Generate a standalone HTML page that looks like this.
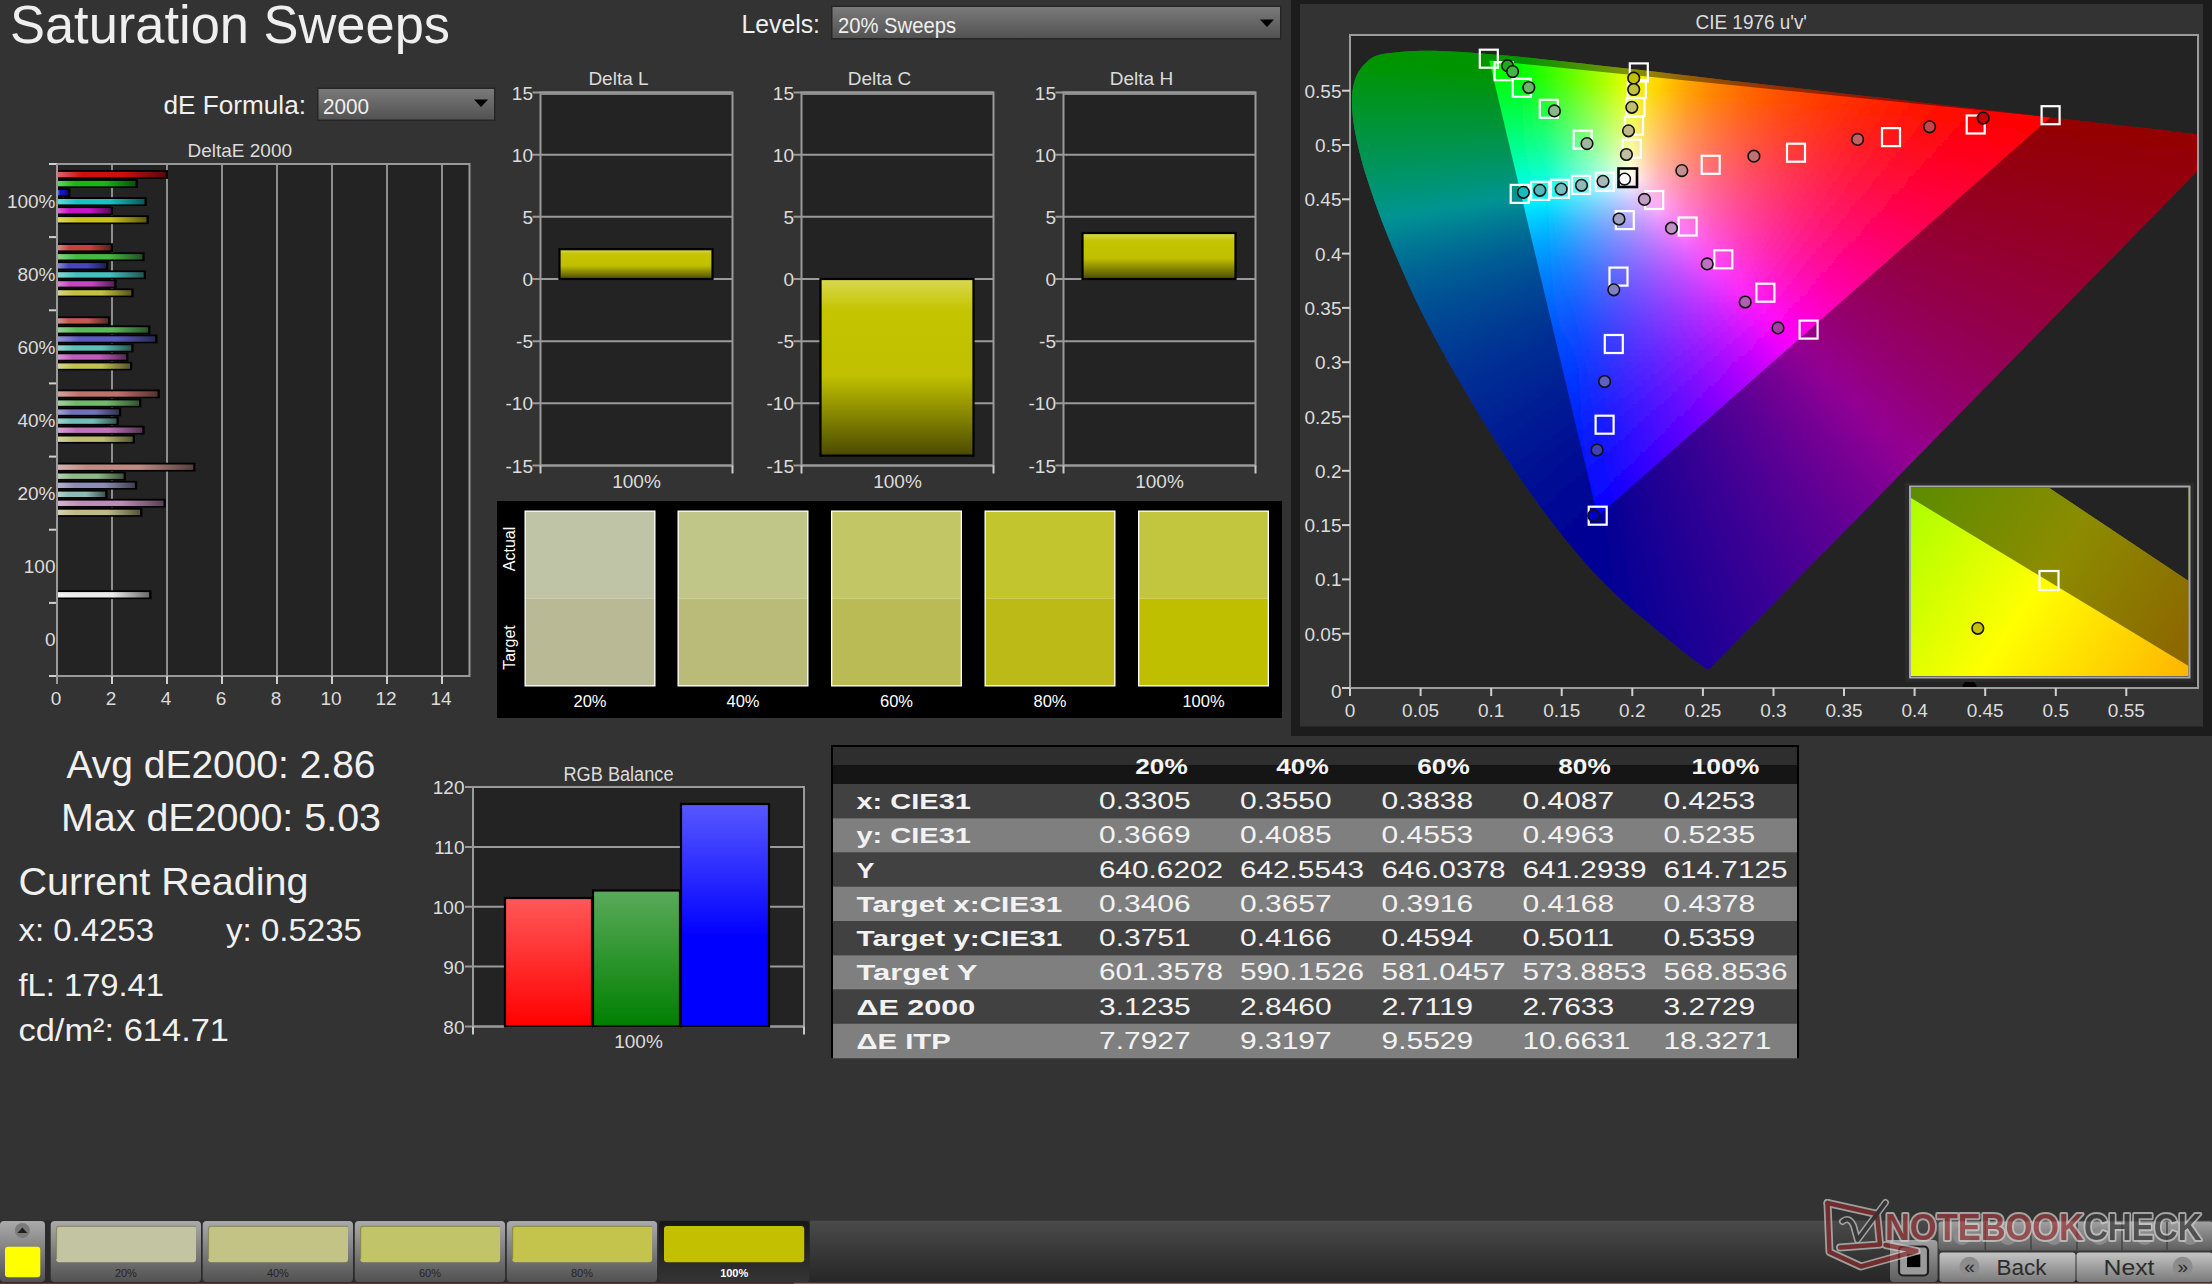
<!DOCTYPE html>
<html><head><meta charset="utf-8"><style>
html,body{margin:0;padding:0;background:#333;width:2212px;height:1284px;overflow:hidden}
svg{display:block}
text{font-family:"Liberation Sans",sans-serif}
</style></head><body>
<svg width="2212" height="1284" viewBox="0 0 2212 1284">
<defs><linearGradient id="ddg" x1="0" y1="0" x2="0" y2="1"><stop offset="0" stop-color="#7a7a7a"/><stop offset="1" stop-color="#525252"/></linearGradient>
<linearGradient id="bg1" x1="0" y1="0" x2="1" y2="0"><stop offset="0" stop-color="#de6363"/><stop offset=".22" stop-color="#cd0f0f"/><stop offset=".6" stop-color="#cd0f0f"/><stop offset="1" stop-color="#5c0707"/></linearGradient>
<linearGradient id="bg2" x1="0" y1="0" x2="1" y2="0"><stop offset="0" stop-color="#66d266"/><stop offset=".22" stop-color="#14b914"/><stop offset=".6" stop-color="#14b914"/><stop offset="1" stop-color="#095309"/></linearGradient>
<linearGradient id="bg3" x1="0" y1="0" x2="1" y2="0"><stop offset="0" stop-color="#6666db"/><stop offset=".22" stop-color="#1414c8"/><stop offset=".6" stop-color="#1414c8"/><stop offset="1" stop-color="#09095a"/></linearGradient>
<linearGradient id="bg4" x1="0" y1="0" x2="1" y2="0"><stop offset="0" stop-color="#66d8d8"/><stop offset=".22" stop-color="#14c3c3"/><stop offset=".6" stop-color="#14c3c3"/><stop offset="1" stop-color="#095858"/></linearGradient>
<linearGradient id="bg5" x1="0" y1="0" x2="1" y2="0"><stop offset="0" stop-color="#db66db"/><stop offset=".22" stop-color="#c814c8"/><stop offset=".6" stop-color="#c814c8"/><stop offset="1" stop-color="#5a095a"/></linearGradient>
<linearGradient id="bg6" x1="0" y1="0" x2="1" y2="0"><stop offset="0" stop-color="#dbd866"/><stop offset=".22" stop-color="#c8c314"/><stop offset=".6" stop-color="#c8c314"/><stop offset="1" stop-color="#5a5809"/></linearGradient>
<linearGradient id="bg7" x1="0" y1="0" x2="1" y2="0"><stop offset="0" stop-color="#db8482"/><stop offset=".22" stop-color="#c7423f"/><stop offset=".6" stop-color="#c7423f"/><stop offset="1" stop-color="#5a1e1c"/></linearGradient>
<linearGradient id="bg8" x1="0" y1="0" x2="1" y2="0"><stop offset="0" stop-color="#87d284"/><stop offset=".22" stop-color="#46b942"/><stop offset=".6" stop-color="#46b942"/><stop offset="1" stop-color="#1f531e"/></linearGradient>
<linearGradient id="bg9" x1="0" y1="0" x2="1" y2="0"><stop offset="0" stop-color="#8787d6"/><stop offset=".22" stop-color="#4646c0"/><stop offset=".6" stop-color="#4646c0"/><stop offset="1" stop-color="#1f1f56"/></linearGradient>
<linearGradient id="bg10" x1="0" y1="0" x2="1" y2="0"><stop offset="0" stop-color="#87d6d4"/><stop offset=".22" stop-color="#46c0bd"/><stop offset=".6" stop-color="#46c0bd"/><stop offset="1" stop-color="#1f5655"/></linearGradient>
<linearGradient id="bg11" x1="0" y1="0" x2="1" y2="0"><stop offset="0" stop-color="#d987d6"/><stop offset=".22" stop-color="#c446c0"/><stop offset=".6" stop-color="#c446c0"/><stop offset="1" stop-color="#581f56"/></linearGradient>
<linearGradient id="bg12" x1="0" y1="0" x2="1" y2="0"><stop offset="0" stop-color="#d9d684"/><stop offset=".22" stop-color="#c4c042"/><stop offset=".6" stop-color="#c4c042"/><stop offset="1" stop-color="#58561e"/></linearGradient>
<linearGradient id="bg13" x1="0" y1="0" x2="1" y2="0"><stop offset="0" stop-color="#d99290"/><stop offset=".22" stop-color="#c45854"/><stop offset=".6" stop-color="#c45854"/><stop offset="1" stop-color="#582826"/></linearGradient>
<linearGradient id="bg14" x1="0" y1="0" x2="1" y2="0"><stop offset="0" stop-color="#94d292"/><stop offset=".22" stop-color="#5bb957"/><stop offset=".6" stop-color="#5bb957"/><stop offset="1" stop-color="#295327"/></linearGradient>
<linearGradient id="bg15" x1="0" y1="0" x2="1" y2="0"><stop offset="0" stop-color="#9494d4"/><stop offset=".22" stop-color="#5b5bbd"/><stop offset=".6" stop-color="#5b5bbd"/><stop offset="1" stop-color="#292955"/></linearGradient>
<linearGradient id="bg16" x1="0" y1="0" x2="1" y2="0"><stop offset="0" stop-color="#94d5d2"/><stop offset=".22" stop-color="#5bbfba"/><stop offset=".6" stop-color="#5bbfba"/><stop offset="1" stop-color="#295654"/></linearGradient>
<linearGradient id="bg17" x1="0" y1="0" x2="1" y2="0"><stop offset="0" stop-color="#d794d4"/><stop offset=".22" stop-color="#c25bbd"/><stop offset=".6" stop-color="#c25bbd"/><stop offset="1" stop-color="#572955"/></linearGradient>
<linearGradient id="bg18" x1="0" y1="0" x2="1" y2="0"><stop offset="0" stop-color="#d7d592"/><stop offset=".22" stop-color="#c2bf57"/><stop offset=".6" stop-color="#c2bf57"/><stop offset="1" stop-color="#575627"/></linearGradient>
<linearGradient id="bg19" x1="0" y1="0" x2="1" y2="0"><stop offset="0" stop-color="#d7a29e"/><stop offset=".22" stop-color="#c2706a"/><stop offset=".6" stop-color="#c2706a"/><stop offset="1" stop-color="#573230"/></linearGradient>
<linearGradient id="bg20" x1="0" y1="0" x2="1" y2="0"><stop offset="0" stop-color="#a3d29f"/><stop offset=".22" stop-color="#72b96c"/><stop offset=".6" stop-color="#72b96c"/><stop offset="1" stop-color="#335331"/></linearGradient>
<linearGradient id="bg21" x1="0" y1="0" x2="1" y2="0"><stop offset="0" stop-color="#a3a3d2"/><stop offset=".22" stop-color="#7272ba"/><stop offset=".6" stop-color="#7272ba"/><stop offset="1" stop-color="#333354"/></linearGradient>
<linearGradient id="bg22" x1="0" y1="0" x2="1" y2="0"><stop offset="0" stop-color="#a3d4d1"/><stop offset=".22" stop-color="#72bdb8"/><stop offset=".6" stop-color="#72bdb8"/><stop offset="1" stop-color="#335553"/></linearGradient>
<linearGradient id="bg23" x1="0" y1="0" x2="1" y2="0"><stop offset="0" stop-color="#d5a3d2"/><stop offset=".22" stop-color="#bf72ba"/><stop offset=".6" stop-color="#bf72ba"/><stop offset="1" stop-color="#563354"/></linearGradient>
<linearGradient id="bg24" x1="0" y1="0" x2="1" y2="0"><stop offset="0" stop-color="#d5d49f"/><stop offset=".22" stop-color="#bfbd6c"/><stop offset=".6" stop-color="#bfbd6c"/><stop offset="1" stop-color="#565531"/></linearGradient>
<linearGradient id="bg25" x1="0" y1="0" x2="1" y2="0"><stop offset="0" stop-color="#d5b4af"/><stop offset=".22" stop-color="#be8b84"/><stop offset=".6" stop-color="#be8b84"/><stop offset="1" stop-color="#553f3b"/></linearGradient>
<linearGradient id="bg26" x1="0" y1="0" x2="1" y2="0"><stop offset="0" stop-color="#b4d2b0"/><stop offset=".22" stop-color="#8cb985"/><stop offset=".6" stop-color="#8cb985"/><stop offset="1" stop-color="#3f533c"/></linearGradient>
<linearGradient id="bg27" x1="0" y1="0" x2="1" y2="0"><stop offset="0" stop-color="#b4b4d0"/><stop offset=".22" stop-color="#8c8cb6"/><stop offset=".6" stop-color="#8c8cb6"/><stop offset="1" stop-color="#3f3f52"/></linearGradient>
<linearGradient id="bg28" x1="0" y1="0" x2="1" y2="0"><stop offset="0" stop-color="#b4d3ce"/><stop offset=".22" stop-color="#8cbcb4"/><stop offset=".6" stop-color="#8cbcb4"/><stop offset="1" stop-color="#3f5551"/></linearGradient>
<linearGradient id="bg29" x1="0" y1="0" x2="1" y2="0"><stop offset="0" stop-color="#d4b4d0"/><stop offset=".22" stop-color="#bd8cb6"/><stop offset=".6" stop-color="#bd8cb6"/><stop offset="1" stop-color="#553f52"/></linearGradient>
<linearGradient id="bg30" x1="0" y1="0" x2="1" y2="0"><stop offset="0" stop-color="#d4d3b0"/><stop offset=".22" stop-color="#bdbc85"/><stop offset=".6" stop-color="#bdbc85"/><stop offset="1" stop-color="#55553c"/></linearGradient>
<linearGradient id="bg31" x1="0" y1="0" x2="1" y2="0"><stop offset="0" stop-color="#f2f2f2"/><stop offset=".22" stop-color="#ebebeb"/><stop offset=".6" stop-color="#ebebeb"/><stop offset="1" stop-color="#6a6a6a"/></linearGradient>
<linearGradient id="ybar" x1="0" y1="0" x2="0" y2="1"><stop offset="0" stop-color="#d8d850"/><stop offset=".18" stop-color="#c4c400"/><stop offset=".55" stop-color="#c0c000"/><stop offset="1" stop-color="#4a4a00"/></linearGradient>
<clipPath id="loc"><path d="M1709.2,669.3 C1708.7,669.2 1707.1,669.0 1706.0,668.5 C1704.8,667.9 1703.7,667.0 1702.3,666.0 C1700.9,664.9 1699.7,663.9 1697.7,662.4 C1695.7,660.9 1693.0,659.1 1690.3,657.0 C1687.6,655.0 1684.7,652.7 1681.3,650.0 C1677.9,647.2 1674.2,644.1 1669.8,640.5 C1665.5,636.9 1660.5,632.9 1655.0,628.4 C1649.5,623.8 1643.6,619.1 1637.0,613.3 C1630.3,607.5 1623.0,601.2 1614.9,593.4 C1606.9,585.6 1598.8,578.0 1588.5,566.5 C1578.3,554.9 1566.2,540.8 1553.4,524.0 C1540.6,507.3 1526.3,487.7 1511.9,466.0 C1497.5,444.3 1481.6,418.9 1466.9,393.9 C1452.1,368.9 1436.4,341.3 1423.5,315.8 C1410.7,290.3 1399.3,263.9 1389.8,240.9 C1380.3,217.9 1372.6,196.1 1366.8,177.8 C1361.0,159.5 1357.4,144.2 1354.9,130.9 C1352.5,117.6 1351.7,107.3 1352.0,98.1 C1352.2,88.9 1353.9,81.8 1356.5,75.7 C1359.1,69.6 1363.0,65.0 1367.4,61.4 C1371.7,57.8 1373.7,55.9 1382.6,54.1 C1391.5,52.3 1407.5,51.1 1420.7,50.7 C1433.9,50.4 1447.1,51.2 1461.8,52.0 C1476.5,52.9 1491.7,54.2 1509.1,55.8 C1526.5,57.5 1545.0,59.5 1566.1,61.8 C1587.2,64.1 1610.3,66.7 1636.0,69.6 C1661.7,72.6 1689.9,75.9 1720.2,79.4 C1750.6,82.9 1784.7,86.8 1817.9,90.6 C1851.1,94.4 1887.1,98.6 1919.5,102.3 C1951.9,106.0 1984.8,109.7 2012.3,112.9 C2039.8,116.0 2063.9,118.8 2084.4,121.2 C2104.9,123.6 2120.7,125.4 2135.5,127.1 C2150.2,128.8 2162.6,130.2 2172.9,131.4 C2183.3,132.6 2188.1,133.2 2197.6,134.2 C2207.1,135.3 2224.5,137.3 2229.9,137.9 Z"/></clipPath>
<clipPath id="plotc"><rect x="1351" y="36" width="846" height="651"/></clipPath>
<linearGradient id="r0" gradientUnits="userSpaceOnUse" x1="1350" y1="0" x2="2198" y2="0"><stop offset="0.000" stop-color="#00ff00"/><stop offset="0.033" stop-color="#00ff00"/><stop offset="0.066" stop-color="#00ff00"/><stop offset="0.099" stop-color="#00ff00"/><stop offset="0.132" stop-color="#00ff00"/><stop offset="0.165" stop-color="#00ff00"/><stop offset="0.198" stop-color="#00ff00"/><stop offset="0.231" stop-color="#37ff00"/><stop offset="0.264" stop-color="#6dff00"/><stop offset="0.297" stop-color="#a6ff00"/><stop offset="0.330" stop-color="#e3ff00"/><stop offset="0.363" stop-color="#ffde00"/><stop offset="0.396" stop-color="#ffb100"/><stop offset="0.429" stop-color="#ff9100"/><stop offset="0.462" stop-color="#ff7800"/><stop offset="0.495" stop-color="#ff6400"/><stop offset="0.528" stop-color="#ff5300"/><stop offset="0.561" stop-color="#ff4600"/><stop offset="0.594" stop-color="#ff3a00"/><stop offset="0.627" stop-color="#ff3000"/><stop offset="0.660" stop-color="#ff2700"/><stop offset="0.693" stop-color="#ff1f00"/><stop offset="0.726" stop-color="#ff1700"/><stop offset="0.759" stop-color="#ff1000"/><stop offset="0.792" stop-color="#ff0a00"/><stop offset="0.825" stop-color="#ff0400"/><stop offset="0.858" stop-color="#ff0000"/><stop offset="0.892" stop-color="#ff0000"/><stop offset="0.925" stop-color="#ff0000"/><stop offset="0.958" stop-color="#ff0000"/><stop offset="0.991" stop-color="#ff0000"/></linearGradient>
<linearGradient id="r1" gradientUnits="userSpaceOnUse" x1="1350" y1="0" x2="2198" y2="0"><stop offset="0.000" stop-color="#00ff00"/><stop offset="0.033" stop-color="#00ff00"/><stop offset="0.066" stop-color="#00ff00"/><stop offset="0.099" stop-color="#00ff00"/><stop offset="0.132" stop-color="#00ff00"/><stop offset="0.165" stop-color="#00ff00"/><stop offset="0.198" stop-color="#00ff00"/><stop offset="0.231" stop-color="#35ff00"/><stop offset="0.264" stop-color="#6dff00"/><stop offset="0.297" stop-color="#a6ff00"/><stop offset="0.330" stop-color="#e4ff00"/><stop offset="0.363" stop-color="#ffdc00"/><stop offset="0.396" stop-color="#ffb000"/><stop offset="0.429" stop-color="#ff8f00"/><stop offset="0.462" stop-color="#ff7600"/><stop offset="0.495" stop-color="#ff6200"/><stop offset="0.528" stop-color="#ff5200"/><stop offset="0.561" stop-color="#ff4400"/><stop offset="0.594" stop-color="#ff3900"/><stop offset="0.627" stop-color="#ff2e00"/><stop offset="0.660" stop-color="#ff2500"/><stop offset="0.693" stop-color="#ff1d00"/><stop offset="0.726" stop-color="#ff1600"/><stop offset="0.759" stop-color="#ff0f00"/><stop offset="0.792" stop-color="#ff0900"/><stop offset="0.825" stop-color="#ff0200"/><stop offset="0.858" stop-color="#ff0000"/><stop offset="0.892" stop-color="#ff0000"/><stop offset="0.925" stop-color="#ff0000"/><stop offset="0.958" stop-color="#ff0000"/><stop offset="0.991" stop-color="#ff0000"/></linearGradient>
<linearGradient id="r2" gradientUnits="userSpaceOnUse" x1="1350" y1="0" x2="2198" y2="0"><stop offset="0.000" stop-color="#00ff00"/><stop offset="0.033" stop-color="#00ff00"/><stop offset="0.066" stop-color="#00ff00"/><stop offset="0.099" stop-color="#00ff00"/><stop offset="0.132" stop-color="#00ff00"/><stop offset="0.165" stop-color="#00ff00"/><stop offset="0.198" stop-color="#00ff00"/><stop offset="0.231" stop-color="#34ff00"/><stop offset="0.264" stop-color="#6cff00"/><stop offset="0.297" stop-color="#a6ff00"/><stop offset="0.330" stop-color="#e5ff00"/><stop offset="0.363" stop-color="#ffdb00"/><stop offset="0.396" stop-color="#ffae00"/><stop offset="0.429" stop-color="#ff8e00"/><stop offset="0.462" stop-color="#ff7500"/><stop offset="0.495" stop-color="#ff6100"/><stop offset="0.528" stop-color="#ff5100"/><stop offset="0.561" stop-color="#ff4300"/><stop offset="0.594" stop-color="#ff3700"/><stop offset="0.627" stop-color="#ff2d00"/><stop offset="0.660" stop-color="#ff2400"/><stop offset="0.693" stop-color="#ff1c00"/><stop offset="0.726" stop-color="#ff1500"/><stop offset="0.759" stop-color="#ff0e00"/><stop offset="0.792" stop-color="#ff0800"/><stop offset="0.825" stop-color="#ff0100"/><stop offset="0.858" stop-color="#ff0000"/><stop offset="0.892" stop-color="#ff0000"/><stop offset="0.925" stop-color="#ff0000"/><stop offset="0.958" stop-color="#ff0000"/><stop offset="0.991" stop-color="#ff0000"/></linearGradient>
<linearGradient id="r3" gradientUnits="userSpaceOnUse" x1="1350" y1="0" x2="2198" y2="0"><stop offset="0.000" stop-color="#00ff00"/><stop offset="0.033" stop-color="#00ff00"/><stop offset="0.066" stop-color="#00ff00"/><stop offset="0.099" stop-color="#00ff00"/><stop offset="0.132" stop-color="#00ff00"/><stop offset="0.165" stop-color="#00ff00"/><stop offset="0.198" stop-color="#00ff00"/><stop offset="0.231" stop-color="#33ff00"/><stop offset="0.264" stop-color="#6cff00"/><stop offset="0.297" stop-color="#a7ff00"/><stop offset="0.330" stop-color="#e6ff00"/><stop offset="0.363" stop-color="#ffd900"/><stop offset="0.396" stop-color="#ffad00"/><stop offset="0.429" stop-color="#ff8c00"/><stop offset="0.462" stop-color="#ff7300"/><stop offset="0.495" stop-color="#ff6000"/><stop offset="0.528" stop-color="#ff4f00"/><stop offset="0.561" stop-color="#ff4200"/><stop offset="0.594" stop-color="#ff3600"/><stop offset="0.627" stop-color="#ff2c00"/><stop offset="0.660" stop-color="#ff2300"/><stop offset="0.693" stop-color="#ff1b00"/><stop offset="0.726" stop-color="#ff1400"/><stop offset="0.759" stop-color="#ff0d00"/><stop offset="0.792" stop-color="#ff0600"/><stop offset="0.825" stop-color="#ff0000"/><stop offset="0.858" stop-color="#ff0000"/><stop offset="0.892" stop-color="#ff0000"/><stop offset="0.925" stop-color="#ff0000"/><stop offset="0.958" stop-color="#ff0000"/><stop offset="0.991" stop-color="#ff0000"/></linearGradient>
<linearGradient id="r4" gradientUnits="userSpaceOnUse" x1="1350" y1="0" x2="2198" y2="0"><stop offset="0.000" stop-color="#00ff09"/><stop offset="0.033" stop-color="#00ff04"/><stop offset="0.066" stop-color="#00ff00"/><stop offset="0.099" stop-color="#00ff00"/><stop offset="0.132" stop-color="#00ff00"/><stop offset="0.165" stop-color="#00ff00"/><stop offset="0.198" stop-color="#00ff00"/><stop offset="0.231" stop-color="#31ff00"/><stop offset="0.264" stop-color="#6bff00"/><stop offset="0.297" stop-color="#a7ff00"/><stop offset="0.330" stop-color="#e7ff00"/><stop offset="0.363" stop-color="#ffd800"/><stop offset="0.396" stop-color="#ffab00"/><stop offset="0.429" stop-color="#ff8b00"/><stop offset="0.462" stop-color="#ff7200"/><stop offset="0.495" stop-color="#ff5e00"/><stop offset="0.528" stop-color="#ff4e00"/><stop offset="0.561" stop-color="#ff4000"/><stop offset="0.594" stop-color="#ff3500"/><stop offset="0.627" stop-color="#ff2b00"/><stop offset="0.660" stop-color="#ff2200"/><stop offset="0.693" stop-color="#ff1a00"/><stop offset="0.726" stop-color="#ff1200"/><stop offset="0.759" stop-color="#ff0c00"/><stop offset="0.792" stop-color="#ff0500"/><stop offset="0.825" stop-color="#ff0000"/><stop offset="0.858" stop-color="#ff0000"/><stop offset="0.892" stop-color="#ff0000"/><stop offset="0.925" stop-color="#ff0000"/><stop offset="0.958" stop-color="#ff0000"/><stop offset="0.991" stop-color="#ff0000"/></linearGradient>
<linearGradient id="r5" gradientUnits="userSpaceOnUse" x1="1350" y1="0" x2="2198" y2="0"><stop offset="0.000" stop-color="#00ff12"/><stop offset="0.033" stop-color="#00ff0f"/><stop offset="0.066" stop-color="#00ff0b"/><stop offset="0.099" stop-color="#00ff06"/><stop offset="0.132" stop-color="#00ff00"/><stop offset="0.165" stop-color="#00ff00"/><stop offset="0.198" stop-color="#00ff00"/><stop offset="0.231" stop-color="#30ff00"/><stop offset="0.264" stop-color="#6aff00"/><stop offset="0.297" stop-color="#a7ff00"/><stop offset="0.330" stop-color="#e8ff00"/><stop offset="0.363" stop-color="#ffd600"/><stop offset="0.396" stop-color="#ffaa00"/><stop offset="0.429" stop-color="#ff8900"/><stop offset="0.462" stop-color="#ff7000"/><stop offset="0.495" stop-color="#ff5d00"/><stop offset="0.528" stop-color="#ff4c00"/><stop offset="0.561" stop-color="#ff3f00"/><stop offset="0.594" stop-color="#ff3300"/><stop offset="0.627" stop-color="#ff2900"/><stop offset="0.660" stop-color="#ff2000"/><stop offset="0.693" stop-color="#ff1800"/><stop offset="0.726" stop-color="#ff1100"/><stop offset="0.759" stop-color="#ff0a00"/><stop offset="0.792" stop-color="#ff0400"/><stop offset="0.825" stop-color="#ff0000"/><stop offset="0.858" stop-color="#ff0000"/><stop offset="0.892" stop-color="#ff0000"/><stop offset="0.925" stop-color="#ff0000"/><stop offset="0.958" stop-color="#ff0000"/><stop offset="0.991" stop-color="#ff0000"/></linearGradient>
<linearGradient id="r6" gradientUnits="userSpaceOnUse" x1="1350" y1="0" x2="2198" y2="0"><stop offset="0.000" stop-color="#00ff1c"/><stop offset="0.033" stop-color="#00ff19"/><stop offset="0.066" stop-color="#00ff15"/><stop offset="0.099" stop-color="#00ff12"/><stop offset="0.132" stop-color="#00ff0d"/><stop offset="0.165" stop-color="#00ff08"/><stop offset="0.198" stop-color="#00ff02"/><stop offset="0.231" stop-color="#2eff00"/><stop offset="0.264" stop-color="#6aff00"/><stop offset="0.297" stop-color="#a7ff00"/><stop offset="0.330" stop-color="#e9ff00"/><stop offset="0.363" stop-color="#ffd500"/><stop offset="0.396" stop-color="#ffa800"/><stop offset="0.429" stop-color="#ff8800"/><stop offset="0.462" stop-color="#ff6f00"/><stop offset="0.495" stop-color="#ff5b00"/><stop offset="0.528" stop-color="#ff4b00"/><stop offset="0.561" stop-color="#ff3e00"/><stop offset="0.594" stop-color="#ff3200"/><stop offset="0.627" stop-color="#ff2800"/><stop offset="0.660" stop-color="#ff1f00"/><stop offset="0.693" stop-color="#ff1700"/><stop offset="0.726" stop-color="#ff1000"/><stop offset="0.759" stop-color="#ff0900"/><stop offset="0.792" stop-color="#ff0200"/><stop offset="0.825" stop-color="#ff0000"/><stop offset="0.858" stop-color="#ff0000"/><stop offset="0.892" stop-color="#ff0000"/><stop offset="0.925" stop-color="#ff0000"/><stop offset="0.958" stop-color="#ff0000"/><stop offset="0.991" stop-color="#ff0000"/></linearGradient>
<linearGradient id="r7" gradientUnits="userSpaceOnUse" x1="1350" y1="0" x2="2198" y2="0"><stop offset="0.000" stop-color="#00ff25"/><stop offset="0.033" stop-color="#00ff22"/><stop offset="0.066" stop-color="#00ff1f"/><stop offset="0.099" stop-color="#00ff1c"/><stop offset="0.132" stop-color="#00ff19"/><stop offset="0.165" stop-color="#00ff15"/><stop offset="0.198" stop-color="#00ff10"/><stop offset="0.231" stop-color="#2dff0b"/><stop offset="0.264" stop-color="#69ff05"/><stop offset="0.297" stop-color="#a7ff00"/><stop offset="0.330" stop-color="#eaff00"/><stop offset="0.363" stop-color="#ffd300"/><stop offset="0.396" stop-color="#ffa600"/><stop offset="0.429" stop-color="#ff8600"/><stop offset="0.462" stop-color="#ff6d00"/><stop offset="0.495" stop-color="#ff5a00"/><stop offset="0.528" stop-color="#ff4a00"/><stop offset="0.561" stop-color="#ff3c00"/><stop offset="0.594" stop-color="#ff3100"/><stop offset="0.627" stop-color="#ff2700"/><stop offset="0.660" stop-color="#ff1e00"/><stop offset="0.693" stop-color="#ff1600"/><stop offset="0.726" stop-color="#ff0f00"/><stop offset="0.759" stop-color="#ff0800"/><stop offset="0.792" stop-color="#ff0000"/><stop offset="0.825" stop-color="#ff0000"/><stop offset="0.858" stop-color="#ff0000"/><stop offset="0.892" stop-color="#ff0000"/><stop offset="0.925" stop-color="#ff0000"/><stop offset="0.958" stop-color="#ff0000"/><stop offset="0.991" stop-color="#ff0000"/></linearGradient>
<linearGradient id="r8" gradientUnits="userSpaceOnUse" x1="1350" y1="0" x2="2198" y2="0"><stop offset="0.000" stop-color="#00ff2d"/><stop offset="0.033" stop-color="#00ff2b"/><stop offset="0.066" stop-color="#00ff29"/><stop offset="0.099" stop-color="#00ff26"/><stop offset="0.132" stop-color="#00ff24"/><stop offset="0.165" stop-color="#00ff21"/><stop offset="0.198" stop-color="#00ff1d"/><stop offset="0.231" stop-color="#2bff19"/><stop offset="0.264" stop-color="#68ff14"/><stop offset="0.297" stop-color="#a7ff0f"/><stop offset="0.330" stop-color="#ebff08"/><stop offset="0.363" stop-color="#ffd200"/><stop offset="0.396" stop-color="#ffa500"/><stop offset="0.429" stop-color="#ff8400"/><stop offset="0.462" stop-color="#ff6c00"/><stop offset="0.495" stop-color="#ff5800"/><stop offset="0.528" stop-color="#ff4800"/><stop offset="0.561" stop-color="#ff3b00"/><stop offset="0.594" stop-color="#ff2f00"/><stop offset="0.627" stop-color="#ff2500"/><stop offset="0.660" stop-color="#ff1d00"/><stop offset="0.693" stop-color="#ff1500"/><stop offset="0.726" stop-color="#ff0d00"/><stop offset="0.759" stop-color="#ff0600"/><stop offset="0.792" stop-color="#ff0000"/><stop offset="0.825" stop-color="#ff0000"/><stop offset="0.858" stop-color="#ff0000"/><stop offset="0.892" stop-color="#ff0000"/><stop offset="0.925" stop-color="#ff0000"/><stop offset="0.958" stop-color="#ff0000"/><stop offset="0.991" stop-color="#ff0000"/></linearGradient>
<linearGradient id="r9" gradientUnits="userSpaceOnUse" x1="1350" y1="0" x2="2198" y2="0"><stop offset="0.000" stop-color="#00ff36"/><stop offset="0.033" stop-color="#00ff34"/><stop offset="0.066" stop-color="#00ff33"/><stop offset="0.099" stop-color="#00ff31"/><stop offset="0.132" stop-color="#00ff2e"/><stop offset="0.165" stop-color="#00ff2c"/><stop offset="0.198" stop-color="#00ff29"/><stop offset="0.231" stop-color="#2aff26"/><stop offset="0.264" stop-color="#67ff22"/><stop offset="0.297" stop-color="#a7ff1e"/><stop offset="0.330" stop-color="#ecff19"/><stop offset="0.363" stop-color="#ffd010"/><stop offset="0.396" stop-color="#ffa308"/><stop offset="0.429" stop-color="#ff8301"/><stop offset="0.462" stop-color="#ff6a00"/><stop offset="0.495" stop-color="#ff5700"/><stop offset="0.528" stop-color="#ff4700"/><stop offset="0.561" stop-color="#ff3900"/><stop offset="0.594" stop-color="#ff2e00"/><stop offset="0.627" stop-color="#ff2400"/><stop offset="0.660" stop-color="#ff1b00"/><stop offset="0.693" stop-color="#ff1300"/><stop offset="0.726" stop-color="#ff0c00"/><stop offset="0.759" stop-color="#ff0500"/><stop offset="0.792" stop-color="#ff0000"/><stop offset="0.825" stop-color="#ff0000"/><stop offset="0.858" stop-color="#ff0000"/><stop offset="0.892" stop-color="#ff0000"/><stop offset="0.925" stop-color="#ff0000"/><stop offset="0.958" stop-color="#ff0000"/><stop offset="0.991" stop-color="#ff0000"/></linearGradient>
<linearGradient id="r10" gradientUnits="userSpaceOnUse" x1="1350" y1="0" x2="2198" y2="0"><stop offset="0.000" stop-color="#00ff3f"/><stop offset="0.033" stop-color="#00ff3d"/><stop offset="0.066" stop-color="#00ff3c"/><stop offset="0.099" stop-color="#00ff3a"/><stop offset="0.132" stop-color="#00ff39"/><stop offset="0.165" stop-color="#00ff37"/><stop offset="0.198" stop-color="#00ff35"/><stop offset="0.231" stop-color="#28ff32"/><stop offset="0.264" stop-color="#67ff30"/><stop offset="0.297" stop-color="#a7ff2d"/><stop offset="0.330" stop-color="#edff29"/><stop offset="0.363" stop-color="#ffce1e"/><stop offset="0.396" stop-color="#ffa114"/><stop offset="0.429" stop-color="#ff810d"/><stop offset="0.462" stop-color="#ff6907"/><stop offset="0.495" stop-color="#ff5502"/><stop offset="0.528" stop-color="#ff4500"/><stop offset="0.561" stop-color="#ff3800"/><stop offset="0.594" stop-color="#ff2d00"/><stop offset="0.627" stop-color="#ff2300"/><stop offset="0.660" stop-color="#ff1a00"/><stop offset="0.693" stop-color="#ff1200"/><stop offset="0.726" stop-color="#ff0b00"/><stop offset="0.759" stop-color="#ff0300"/><stop offset="0.792" stop-color="#ff0000"/><stop offset="0.825" stop-color="#ff0000"/><stop offset="0.858" stop-color="#ff0000"/><stop offset="0.892" stop-color="#ff0000"/><stop offset="0.925" stop-color="#ff0000"/><stop offset="0.958" stop-color="#ff0000"/><stop offset="0.991" stop-color="#ff0000"/></linearGradient>
<linearGradient id="r11" gradientUnits="userSpaceOnUse" x1="1350" y1="0" x2="2198" y2="0"><stop offset="0.000" stop-color="#00ff47"/><stop offset="0.033" stop-color="#00ff46"/><stop offset="0.066" stop-color="#00ff45"/><stop offset="0.099" stop-color="#00ff44"/><stop offset="0.132" stop-color="#00ff43"/><stop offset="0.165" stop-color="#00ff42"/><stop offset="0.198" stop-color="#00ff40"/><stop offset="0.231" stop-color="#26ff3f"/><stop offset="0.264" stop-color="#66ff3d"/><stop offset="0.297" stop-color="#a8ff3b"/><stop offset="0.330" stop-color="#efff38"/><stop offset="0.363" stop-color="#ffcd2b"/><stop offset="0.396" stop-color="#ffa01f"/><stop offset="0.429" stop-color="#ff7f17"/><stop offset="0.462" stop-color="#ff6710"/><stop offset="0.495" stop-color="#ff540b"/><stop offset="0.528" stop-color="#ff4407"/><stop offset="0.561" stop-color="#ff3603"/><stop offset="0.594" stop-color="#ff2b00"/><stop offset="0.627" stop-color="#ff2100"/><stop offset="0.660" stop-color="#ff1900"/><stop offset="0.693" stop-color="#ff1100"/><stop offset="0.726" stop-color="#ff0900"/><stop offset="0.759" stop-color="#ff0200"/><stop offset="0.792" stop-color="#ff0000"/><stop offset="0.825" stop-color="#ff0000"/><stop offset="0.858" stop-color="#ff0000"/><stop offset="0.892" stop-color="#ff0000"/><stop offset="0.925" stop-color="#ff0000"/><stop offset="0.958" stop-color="#ff0000"/><stop offset="0.991" stop-color="#ff0000"/></linearGradient>
<linearGradient id="r12" gradientUnits="userSpaceOnUse" x1="1350" y1="0" x2="2198" y2="0"><stop offset="0.000" stop-color="#00ff50"/><stop offset="0.033" stop-color="#00ff4f"/><stop offset="0.066" stop-color="#00ff4f"/><stop offset="0.099" stop-color="#00ff4e"/><stop offset="0.132" stop-color="#00ff4e"/><stop offset="0.165" stop-color="#00ff4d"/><stop offset="0.198" stop-color="#00ff4c"/><stop offset="0.231" stop-color="#24ff4b"/><stop offset="0.264" stop-color="#65ff4a"/><stop offset="0.297" stop-color="#a8ff49"/><stop offset="0.330" stop-color="#f0ff48"/><stop offset="0.363" stop-color="#ffcb38"/><stop offset="0.396" stop-color="#ff9e2a"/><stop offset="0.429" stop-color="#ff7e21"/><stop offset="0.462" stop-color="#ff6519"/><stop offset="0.495" stop-color="#ff5213"/><stop offset="0.528" stop-color="#ff420e"/><stop offset="0.561" stop-color="#ff350a"/><stop offset="0.594" stop-color="#ff2a07"/><stop offset="0.627" stop-color="#ff2003"/><stop offset="0.660" stop-color="#ff1700"/><stop offset="0.693" stop-color="#ff0f00"/><stop offset="0.726" stop-color="#ff0800"/><stop offset="0.759" stop-color="#ff0000"/><stop offset="0.792" stop-color="#ff0000"/><stop offset="0.825" stop-color="#ff0000"/><stop offset="0.858" stop-color="#ff0000"/><stop offset="0.892" stop-color="#ff0000"/><stop offset="0.925" stop-color="#ff0000"/><stop offset="0.958" stop-color="#ff0000"/><stop offset="0.991" stop-color="#ff0000"/></linearGradient>
<linearGradient id="r13" gradientUnits="userSpaceOnUse" x1="1350" y1="0" x2="2198" y2="0"><stop offset="0.000" stop-color="#00ff58"/><stop offset="0.033" stop-color="#00ff58"/><stop offset="0.066" stop-color="#00ff58"/><stop offset="0.099" stop-color="#00ff58"/><stop offset="0.132" stop-color="#00ff58"/><stop offset="0.165" stop-color="#00ff58"/><stop offset="0.198" stop-color="#00ff58"/><stop offset="0.231" stop-color="#23ff58"/><stop offset="0.264" stop-color="#64ff57"/><stop offset="0.297" stop-color="#a8ff57"/><stop offset="0.330" stop-color="#f1ff57"/><stop offset="0.363" stop-color="#ffc944"/><stop offset="0.396" stop-color="#ff9c35"/><stop offset="0.429" stop-color="#ff7c2a"/><stop offset="0.462" stop-color="#ff6421"/><stop offset="0.495" stop-color="#ff501b"/><stop offset="0.528" stop-color="#ff4115"/><stop offset="0.561" stop-color="#ff3411"/><stop offset="0.594" stop-color="#ff280d"/><stop offset="0.627" stop-color="#ff1f0a"/><stop offset="0.660" stop-color="#ff1607"/><stop offset="0.693" stop-color="#ff0e04"/><stop offset="0.726" stop-color="#ff0601"/><stop offset="0.759" stop-color="#ff0000"/><stop offset="0.792" stop-color="#ff0000"/><stop offset="0.825" stop-color="#ff0000"/><stop offset="0.858" stop-color="#ff0000"/><stop offset="0.892" stop-color="#ff0000"/><stop offset="0.925" stop-color="#ff0000"/><stop offset="0.958" stop-color="#ff0000"/><stop offset="0.991" stop-color="#ff0000"/></linearGradient>
<linearGradient id="r14" gradientUnits="userSpaceOnUse" x1="1350" y1="0" x2="2198" y2="0"><stop offset="0.000" stop-color="#00ff61"/><stop offset="0.033" stop-color="#00ff61"/><stop offset="0.066" stop-color="#00ff62"/><stop offset="0.099" stop-color="#00ff62"/><stop offset="0.132" stop-color="#00ff62"/><stop offset="0.165" stop-color="#00ff63"/><stop offset="0.198" stop-color="#00ff63"/><stop offset="0.231" stop-color="#21ff64"/><stop offset="0.264" stop-color="#63ff65"/><stop offset="0.297" stop-color="#a8ff66"/><stop offset="0.330" stop-color="#f3ff66"/><stop offset="0.363" stop-color="#ffc751"/><stop offset="0.396" stop-color="#ff9a3f"/><stop offset="0.429" stop-color="#ff7a33"/><stop offset="0.462" stop-color="#ff622a"/><stop offset="0.495" stop-color="#ff4f22"/><stop offset="0.528" stop-color="#ff3f1c"/><stop offset="0.561" stop-color="#ff3217"/><stop offset="0.594" stop-color="#ff2713"/><stop offset="0.627" stop-color="#ff1d0f"/><stop offset="0.660" stop-color="#ff140c"/><stop offset="0.693" stop-color="#ff0c09"/><stop offset="0.726" stop-color="#ff0506"/><stop offset="0.759" stop-color="#ff0004"/><stop offset="0.792" stop-color="#ff0002"/><stop offset="0.825" stop-color="#ff0000"/><stop offset="0.858" stop-color="#ff0000"/><stop offset="0.892" stop-color="#ff0000"/><stop offset="0.925" stop-color="#ff0000"/><stop offset="0.958" stop-color="#ff0000"/><stop offset="0.991" stop-color="#ff0000"/></linearGradient>
<linearGradient id="r15" gradientUnits="userSpaceOnUse" x1="1350" y1="0" x2="2198" y2="0"><stop offset="0.000" stop-color="#00ff6a"/><stop offset="0.033" stop-color="#00ff6a"/><stop offset="0.066" stop-color="#00ff6b"/><stop offset="0.099" stop-color="#00ff6c"/><stop offset="0.132" stop-color="#00ff6d"/><stop offset="0.165" stop-color="#00ff6e"/><stop offset="0.198" stop-color="#00ff6f"/><stop offset="0.231" stop-color="#1fff71"/><stop offset="0.264" stop-color="#63ff72"/><stop offset="0.297" stop-color="#a8ff74"/><stop offset="0.330" stop-color="#f4ff76"/><stop offset="0.363" stop-color="#ffc65d"/><stop offset="0.396" stop-color="#ff994a"/><stop offset="0.429" stop-color="#ff783c"/><stop offset="0.462" stop-color="#ff6031"/><stop offset="0.495" stop-color="#ff4d29"/><stop offset="0.528" stop-color="#ff3e23"/><stop offset="0.561" stop-color="#ff311d"/><stop offset="0.594" stop-color="#ff2519"/><stop offset="0.627" stop-color="#ff1c15"/><stop offset="0.660" stop-color="#ff1311"/><stop offset="0.693" stop-color="#ff0b0e"/><stop offset="0.726" stop-color="#ff030b"/><stop offset="0.759" stop-color="#ff0009"/><stop offset="0.792" stop-color="#ff0006"/><stop offset="0.825" stop-color="#ff0004"/><stop offset="0.858" stop-color="#ff0002"/><stop offset="0.892" stop-color="#ff0000"/><stop offset="0.925" stop-color="#ff0000"/><stop offset="0.958" stop-color="#ff0000"/><stop offset="0.991" stop-color="#ff0000"/></linearGradient>
<linearGradient id="r16" gradientUnits="userSpaceOnUse" x1="1350" y1="0" x2="2198" y2="0"><stop offset="0.000" stop-color="#00ff72"/><stop offset="0.033" stop-color="#00ff73"/><stop offset="0.066" stop-color="#00ff75"/><stop offset="0.099" stop-color="#00ff76"/><stop offset="0.132" stop-color="#00ff78"/><stop offset="0.165" stop-color="#00ff79"/><stop offset="0.198" stop-color="#00ff7b"/><stop offset="0.231" stop-color="#1dff7d"/><stop offset="0.264" stop-color="#62ff80"/><stop offset="0.297" stop-color="#a8ff83"/><stop offset="0.330" stop-color="#f6ff86"/><stop offset="0.363" stop-color="#ffc46a"/><stop offset="0.396" stop-color="#ff9754"/><stop offset="0.429" stop-color="#ff7745"/><stop offset="0.462" stop-color="#ff5e39"/><stop offset="0.495" stop-color="#ff4b30"/><stop offset="0.528" stop-color="#ff3c29"/><stop offset="0.561" stop-color="#ff2f23"/><stop offset="0.594" stop-color="#ff241e"/><stop offset="0.627" stop-color="#ff1a1a"/><stop offset="0.660" stop-color="#ff1216"/><stop offset="0.693" stop-color="#ff0a13"/><stop offset="0.726" stop-color="#ff0110"/><stop offset="0.759" stop-color="#ff000d"/><stop offset="0.792" stop-color="#ff000b"/><stop offset="0.825" stop-color="#ff0008"/><stop offset="0.858" stop-color="#ff0006"/><stop offset="0.892" stop-color="#ff0004"/><stop offset="0.925" stop-color="#ff0002"/><stop offset="0.958" stop-color="#ff0000"/><stop offset="0.991" stop-color="#ff0000"/></linearGradient>
<linearGradient id="r17" gradientUnits="userSpaceOnUse" x1="1350" y1="0" x2="2198" y2="0"><stop offset="0.000" stop-color="#00ff7b"/><stop offset="0.033" stop-color="#00ff7d"/><stop offset="0.066" stop-color="#00ff7e"/><stop offset="0.099" stop-color="#00ff80"/><stop offset="0.132" stop-color="#00ff82"/><stop offset="0.165" stop-color="#00ff85"/><stop offset="0.198" stop-color="#00ff87"/><stop offset="0.231" stop-color="#1aff8a"/><stop offset="0.264" stop-color="#61ff8e"/><stop offset="0.297" stop-color="#a9ff91"/><stop offset="0.330" stop-color="#f7ff96"/><stop offset="0.363" stop-color="#ffc276"/><stop offset="0.396" stop-color="#ff955e"/><stop offset="0.429" stop-color="#ff754e"/><stop offset="0.462" stop-color="#ff5d41"/><stop offset="0.495" stop-color="#ff4a37"/><stop offset="0.528" stop-color="#ff3a2f"/><stop offset="0.561" stop-color="#ff2d29"/><stop offset="0.594" stop-color="#ff2223"/><stop offset="0.627" stop-color="#ff191f"/><stop offset="0.660" stop-color="#ff101b"/><stop offset="0.693" stop-color="#ff0817"/><stop offset="0.726" stop-color="#ff0014"/><stop offset="0.759" stop-color="#ff0011"/><stop offset="0.792" stop-color="#ff000f"/><stop offset="0.825" stop-color="#ff000c"/><stop offset="0.858" stop-color="#ff000a"/><stop offset="0.892" stop-color="#ff0008"/><stop offset="0.925" stop-color="#ff0006"/><stop offset="0.958" stop-color="#ff0004"/><stop offset="0.991" stop-color="#ff0003"/></linearGradient>
<linearGradient id="r18" gradientUnits="userSpaceOnUse" x1="1350" y1="0" x2="2198" y2="0"><stop offset="0.000" stop-color="#00ff84"/><stop offset="0.033" stop-color="#00ff86"/><stop offset="0.066" stop-color="#00ff88"/><stop offset="0.099" stop-color="#00ff8b"/><stop offset="0.132" stop-color="#00ff8d"/><stop offset="0.165" stop-color="#00ff90"/><stop offset="0.198" stop-color="#00ff93"/><stop offset="0.231" stop-color="#18ff97"/><stop offset="0.264" stop-color="#60ff9c"/><stop offset="0.297" stop-color="#a9ffa1"/><stop offset="0.330" stop-color="#f9ffa6"/><stop offset="0.363" stop-color="#ffc082"/><stop offset="0.396" stop-color="#ff9368"/><stop offset="0.429" stop-color="#ff7356"/><stop offset="0.462" stop-color="#ff5b49"/><stop offset="0.495" stop-color="#ff483e"/><stop offset="0.528" stop-color="#ff3936"/><stop offset="0.561" stop-color="#ff2c2f"/><stop offset="0.594" stop-color="#ff2129"/><stop offset="0.627" stop-color="#ff1724"/><stop offset="0.660" stop-color="#ff0f1f"/><stop offset="0.693" stop-color="#ff061c"/><stop offset="0.726" stop-color="#ff0018"/><stop offset="0.759" stop-color="#ff0015"/><stop offset="0.792" stop-color="#ff0013"/><stop offset="0.825" stop-color="#ff0010"/><stop offset="0.858" stop-color="#ff000e"/><stop offset="0.892" stop-color="#ff000c"/><stop offset="0.925" stop-color="#ff000a"/><stop offset="0.958" stop-color="#ff0008"/><stop offset="0.991" stop-color="#ff0006"/></linearGradient>
<linearGradient id="r19" gradientUnits="userSpaceOnUse" x1="1350" y1="0" x2="2198" y2="0"><stop offset="0.000" stop-color="#00ff8d"/><stop offset="0.033" stop-color="#00ff8f"/><stop offset="0.066" stop-color="#00ff92"/><stop offset="0.099" stop-color="#00ff95"/><stop offset="0.132" stop-color="#00ff98"/><stop offset="0.165" stop-color="#00ff9c"/><stop offset="0.198" stop-color="#00ffa0"/><stop offset="0.231" stop-color="#16ffa5"/><stop offset="0.264" stop-color="#5fffaa"/><stop offset="0.297" stop-color="#a9ffb0"/><stop offset="0.330" stop-color="#faffb7"/><stop offset="0.363" stop-color="#ffbe8f"/><stop offset="0.396" stop-color="#ff9173"/><stop offset="0.429" stop-color="#ff715f"/><stop offset="0.462" stop-color="#ff5950"/><stop offset="0.495" stop-color="#ff4645"/><stop offset="0.528" stop-color="#ff373c"/><stop offset="0.561" stop-color="#ff2a34"/><stop offset="0.594" stop-color="#ff1f2e"/><stop offset="0.627" stop-color="#ff1629"/><stop offset="0.660" stop-color="#ff0d24"/><stop offset="0.693" stop-color="#ff0520"/><stop offset="0.726" stop-color="#ff001c"/><stop offset="0.759" stop-color="#ff0019"/><stop offset="0.792" stop-color="#ff0016"/><stop offset="0.825" stop-color="#ff0014"/><stop offset="0.858" stop-color="#ff0011"/><stop offset="0.892" stop-color="#ff000f"/><stop offset="0.925" stop-color="#ff000d"/><stop offset="0.958" stop-color="#ff000b"/><stop offset="0.991" stop-color="#ff0009"/></linearGradient>
<linearGradient id="r20" gradientUnits="userSpaceOnUse" x1="1350" y1="0" x2="2198" y2="0"><stop offset="0.000" stop-color="#00ff96"/><stop offset="0.033" stop-color="#00ff99"/><stop offset="0.066" stop-color="#00ff9c"/><stop offset="0.099" stop-color="#00ff9f"/><stop offset="0.132" stop-color="#00ffa3"/><stop offset="0.165" stop-color="#00ffa8"/><stop offset="0.198" stop-color="#00ffac"/><stop offset="0.231" stop-color="#13ffb2"/><stop offset="0.264" stop-color="#5effb8"/><stop offset="0.297" stop-color="#a9ffc0"/><stop offset="0.330" stop-color="#fcffc8"/><stop offset="0.363" stop-color="#ffbc9b"/><stop offset="0.396" stop-color="#ff8f7d"/><stop offset="0.429" stop-color="#ff6f68"/><stop offset="0.462" stop-color="#ff5758"/><stop offset="0.495" stop-color="#ff454c"/><stop offset="0.528" stop-color="#ff3542"/><stop offset="0.561" stop-color="#ff293a"/><stop offset="0.594" stop-color="#ff1e33"/><stop offset="0.627" stop-color="#ff142d"/><stop offset="0.660" stop-color="#ff0b29"/><stop offset="0.693" stop-color="#ff0324"/><stop offset="0.726" stop-color="#ff0020"/><stop offset="0.759" stop-color="#ff001d"/><stop offset="0.792" stop-color="#ff001a"/><stop offset="0.825" stop-color="#ff0017"/><stop offset="0.858" stop-color="#ff0015"/><stop offset="0.892" stop-color="#ff0012"/><stop offset="0.925" stop-color="#ff0010"/><stop offset="0.958" stop-color="#ff000e"/><stop offset="0.991" stop-color="#ff000d"/></linearGradient>
<linearGradient id="r21" gradientUnits="userSpaceOnUse" x1="1350" y1="0" x2="2198" y2="0"><stop offset="0.000" stop-color="#00ff9f"/><stop offset="0.033" stop-color="#00ffa2"/><stop offset="0.066" stop-color="#00ffa6"/><stop offset="0.099" stop-color="#00ffaa"/><stop offset="0.132" stop-color="#00ffaf"/><stop offset="0.165" stop-color="#00ffb4"/><stop offset="0.198" stop-color="#00ffb9"/><stop offset="0.231" stop-color="#11ffc0"/><stop offset="0.264" stop-color="#5dffc7"/><stop offset="0.297" stop-color="#a9ffd0"/><stop offset="0.330" stop-color="#feffda"/><stop offset="0.363" stop-color="#ffbaa8"/><stop offset="0.396" stop-color="#ff8d87"/><stop offset="0.429" stop-color="#ff6d70"/><stop offset="0.462" stop-color="#ff565f"/><stop offset="0.495" stop-color="#ff4352"/><stop offset="0.528" stop-color="#ff3448"/><stop offset="0.561" stop-color="#ff273f"/><stop offset="0.594" stop-color="#ff1c38"/><stop offset="0.627" stop-color="#ff1332"/><stop offset="0.660" stop-color="#ff0a2d"/><stop offset="0.693" stop-color="#ff0128"/><stop offset="0.726" stop-color="#ff0024"/><stop offset="0.759" stop-color="#ff0021"/><stop offset="0.792" stop-color="#ff001e"/><stop offset="0.825" stop-color="#ff001b"/><stop offset="0.858" stop-color="#ff0018"/><stop offset="0.892" stop-color="#ff0016"/><stop offset="0.925" stop-color="#ff0013"/><stop offset="0.958" stop-color="#ff0011"/><stop offset="0.991" stop-color="#ff000f"/></linearGradient>
<linearGradient id="r22" gradientUnits="userSpaceOnUse" x1="1350" y1="0" x2="2198" y2="0"><stop offset="0.000" stop-color="#00ffa8"/><stop offset="0.033" stop-color="#00ffac"/><stop offset="0.066" stop-color="#00ffb0"/><stop offset="0.099" stop-color="#00ffb5"/><stop offset="0.132" stop-color="#00ffba"/><stop offset="0.165" stop-color="#00ffc0"/><stop offset="0.198" stop-color="#00ffc6"/><stop offset="0.231" stop-color="#0effce"/><stop offset="0.264" stop-color="#5cffd6"/><stop offset="0.297" stop-color="#aaffe0"/><stop offset="0.330" stop-color="#ffffeb"/><stop offset="0.363" stop-color="#ffb8b4"/><stop offset="0.396" stop-color="#ff8b91"/><stop offset="0.429" stop-color="#ff6b79"/><stop offset="0.462" stop-color="#ff5467"/><stop offset="0.495" stop-color="#ff4159"/><stop offset="0.528" stop-color="#ff324e"/><stop offset="0.561" stop-color="#ff2545"/><stop offset="0.594" stop-color="#ff1b3d"/><stop offset="0.627" stop-color="#ff1137"/><stop offset="0.660" stop-color="#ff0831"/><stop offset="0.693" stop-color="#ff002d"/><stop offset="0.726" stop-color="#ff0028"/><stop offset="0.759" stop-color="#ff0025"/><stop offset="0.792" stop-color="#ff0021"/><stop offset="0.825" stop-color="#ff001e"/><stop offset="0.858" stop-color="#ff001b"/><stop offset="0.892" stop-color="#ff0019"/><stop offset="0.925" stop-color="#ff0017"/><stop offset="0.958" stop-color="#ff0014"/><stop offset="0.991" stop-color="#ff0012"/></linearGradient>
<linearGradient id="r23" gradientUnits="userSpaceOnUse" x1="1350" y1="0" x2="2198" y2="0"><stop offset="0.000" stop-color="#00ffb2"/><stop offset="0.033" stop-color="#00ffb6"/><stop offset="0.066" stop-color="#00ffbb"/><stop offset="0.099" stop-color="#00ffc0"/><stop offset="0.132" stop-color="#00ffc6"/><stop offset="0.165" stop-color="#00ffcc"/><stop offset="0.198" stop-color="#00ffd4"/><stop offset="0.231" stop-color="#0bffdc"/><stop offset="0.264" stop-color="#5affe6"/><stop offset="0.297" stop-color="#aafff1"/><stop offset="0.330" stop-color="#fffdfc"/><stop offset="0.363" stop-color="#ffb6c1"/><stop offset="0.396" stop-color="#ff899b"/><stop offset="0.429" stop-color="#ff6982"/><stop offset="0.462" stop-color="#ff526e"/><stop offset="0.495" stop-color="#ff3f60"/><stop offset="0.528" stop-color="#ff3054"/><stop offset="0.561" stop-color="#ff244a"/><stop offset="0.594" stop-color="#ff1942"/><stop offset="0.627" stop-color="#ff0f3c"/><stop offset="0.660" stop-color="#ff0636"/><stop offset="0.693" stop-color="#ff0031"/><stop offset="0.726" stop-color="#ff002c"/><stop offset="0.759" stop-color="#ff0028"/><stop offset="0.792" stop-color="#ff0025"/><stop offset="0.825" stop-color="#ff0022"/><stop offset="0.858" stop-color="#ff001f"/><stop offset="0.892" stop-color="#ff001c"/><stop offset="0.925" stop-color="#ff001a"/><stop offset="0.958" stop-color="#ff0017"/><stop offset="0.991" stop-color="#ff0015"/></linearGradient>
<linearGradient id="r24" gradientUnits="userSpaceOnUse" x1="1350" y1="0" x2="2198" y2="0"><stop offset="0.000" stop-color="#00ffbb"/><stop offset="0.033" stop-color="#00ffc0"/><stop offset="0.066" stop-color="#00ffc5"/><stop offset="0.099" stop-color="#00ffcb"/><stop offset="0.132" stop-color="#00ffd1"/><stop offset="0.165" stop-color="#00ffd9"/><stop offset="0.198" stop-color="#00ffe1"/><stop offset="0.231" stop-color="#08ffeb"/><stop offset="0.264" stop-color="#59fff5"/><stop offset="0.297" stop-color="#a8fcff"/><stop offset="0.330" stop-color="#f2eeff"/><stop offset="0.363" stop-color="#ffb4cd"/><stop offset="0.396" stop-color="#ff87a6"/><stop offset="0.429" stop-color="#ff678a"/><stop offset="0.462" stop-color="#ff5076"/><stop offset="0.495" stop-color="#ff3e66"/><stop offset="0.528" stop-color="#ff2f5a"/><stop offset="0.561" stop-color="#ff2250"/><stop offset="0.594" stop-color="#ff1748"/><stop offset="0.627" stop-color="#ff0e40"/><stop offset="0.660" stop-color="#ff053a"/><stop offset="0.693" stop-color="#ff0035"/><stop offset="0.726" stop-color="#ff0030"/><stop offset="0.759" stop-color="#ff002c"/><stop offset="0.792" stop-color="#ff0028"/><stop offset="0.825" stop-color="#ff0025"/><stop offset="0.858" stop-color="#ff0022"/><stop offset="0.892" stop-color="#ff001f"/><stop offset="0.925" stop-color="#ff001d"/><stop offset="0.958" stop-color="#ff001a"/><stop offset="0.991" stop-color="#ff0018"/></linearGradient>
<linearGradient id="r25" gradientUnits="userSpaceOnUse" x1="1350" y1="0" x2="2198" y2="0"><stop offset="0.000" stop-color="#00ffc5"/><stop offset="0.033" stop-color="#00ffca"/><stop offset="0.066" stop-color="#00ffd0"/><stop offset="0.099" stop-color="#00ffd6"/><stop offset="0.132" stop-color="#00ffde"/><stop offset="0.165" stop-color="#00ffe6"/><stop offset="0.198" stop-color="#00ffef"/><stop offset="0.231" stop-color="#05fff9"/><stop offset="0.264" stop-color="#56f9ff"/><stop offset="0.297" stop-color="#9decff"/><stop offset="0.330" stop-color="#e4deff"/><stop offset="0.363" stop-color="#ffb2da"/><stop offset="0.396" stop-color="#ff85b0"/><stop offset="0.429" stop-color="#ff6593"/><stop offset="0.462" stop-color="#ff4e7d"/><stop offset="0.495" stop-color="#ff3c6d"/><stop offset="0.528" stop-color="#ff2d60"/><stop offset="0.561" stop-color="#ff2055"/><stop offset="0.594" stop-color="#ff164d"/><stop offset="0.627" stop-color="#ff0c45"/><stop offset="0.660" stop-color="#ff033f"/><stop offset="0.693" stop-color="#ff0039"/><stop offset="0.726" stop-color="#ff0034"/><stop offset="0.759" stop-color="#ff0030"/><stop offset="0.792" stop-color="#ff002c"/><stop offset="0.825" stop-color="#ff0028"/><stop offset="0.858" stop-color="#ff0025"/><stop offset="0.892" stop-color="#ff0022"/><stop offset="0.925" stop-color="#ff001f"/><stop offset="0.958" stop-color="#ff001d"/><stop offset="0.991" stop-color="#ff001b"/></linearGradient>
<linearGradient id="r26" gradientUnits="userSpaceOnUse" x1="1350" y1="0" x2="2198" y2="0"><stop offset="0.000" stop-color="#00ffce"/><stop offset="0.033" stop-color="#00ffd4"/><stop offset="0.066" stop-color="#00ffdb"/><stop offset="0.099" stop-color="#00ffe2"/><stop offset="0.132" stop-color="#00ffea"/><stop offset="0.165" stop-color="#00fff3"/><stop offset="0.198" stop-color="#00fffd"/><stop offset="0.231" stop-color="#01f6ff"/><stop offset="0.264" stop-color="#50eaff"/><stop offset="0.297" stop-color="#94ddff"/><stop offset="0.330" stop-color="#d7d0ff"/><stop offset="0.363" stop-color="#ffb0e7"/><stop offset="0.396" stop-color="#ff83ba"/><stop offset="0.429" stop-color="#ff639c"/><stop offset="0.462" stop-color="#ff4c85"/><stop offset="0.495" stop-color="#ff3a74"/><stop offset="0.528" stop-color="#ff2b66"/><stop offset="0.561" stop-color="#ff1f5b"/><stop offset="0.594" stop-color="#ff1452"/><stop offset="0.627" stop-color="#ff0a4a"/><stop offset="0.660" stop-color="#ff0043"/><stop offset="0.693" stop-color="#ff003d"/><stop offset="0.726" stop-color="#ff0038"/><stop offset="0.759" stop-color="#ff0033"/><stop offset="0.792" stop-color="#ff002f"/><stop offset="0.825" stop-color="#ff002c"/><stop offset="0.858" stop-color="#ff0028"/><stop offset="0.892" stop-color="#ff0025"/><stop offset="0.925" stop-color="#ff0022"/><stop offset="0.958" stop-color="#ff0020"/><stop offset="0.991" stop-color="#ff001d"/></linearGradient>
<linearGradient id="r27" gradientUnits="userSpaceOnUse" x1="1350" y1="0" x2="2198" y2="0"><stop offset="0.000" stop-color="#00ffd8"/><stop offset="0.033" stop-color="#00ffdf"/><stop offset="0.066" stop-color="#00ffe6"/><stop offset="0.099" stop-color="#00ffed"/><stop offset="0.132" stop-color="#00fff6"/><stop offset="0.165" stop-color="#00feff"/><stop offset="0.198" stop-color="#00f3ff"/><stop offset="0.231" stop-color="#00e8ff"/><stop offset="0.264" stop-color="#4adcff"/><stop offset="0.297" stop-color="#8bd0ff"/><stop offset="0.330" stop-color="#cbc3ff"/><stop offset="0.363" stop-color="#ffadf4"/><stop offset="0.396" stop-color="#ff80c5"/><stop offset="0.429" stop-color="#ff61a4"/><stop offset="0.462" stop-color="#ff4a8d"/><stop offset="0.495" stop-color="#ff387a"/><stop offset="0.528" stop-color="#ff296c"/><stop offset="0.561" stop-color="#ff1d60"/><stop offset="0.594" stop-color="#ff1257"/><stop offset="0.627" stop-color="#ff084e"/><stop offset="0.660" stop-color="#ff0047"/><stop offset="0.693" stop-color="#ff0041"/><stop offset="0.726" stop-color="#ff003c"/><stop offset="0.759" stop-color="#ff0037"/><stop offset="0.792" stop-color="#ff0033"/><stop offset="0.825" stop-color="#ff002f"/><stop offset="0.858" stop-color="#ff002b"/><stop offset="0.892" stop-color="#ff0028"/><stop offset="0.925" stop-color="#ff0025"/><stop offset="0.958" stop-color="#ff0023"/><stop offset="0.991" stop-color="#ff0020"/></linearGradient>
<linearGradient id="r28" gradientUnits="userSpaceOnUse" x1="1350" y1="0" x2="2198" y2="0"><stop offset="0.000" stop-color="#00ffe2"/><stop offset="0.033" stop-color="#00ffe9"/><stop offset="0.066" stop-color="#00fff1"/><stop offset="0.099" stop-color="#00fff9"/><stop offset="0.132" stop-color="#00fbff"/><stop offset="0.165" stop-color="#00f1ff"/><stop offset="0.198" stop-color="#00e7ff"/><stop offset="0.231" stop-color="#00dcff"/><stop offset="0.264" stop-color="#45d0ff"/><stop offset="0.297" stop-color="#83c4ff"/><stop offset="0.330" stop-color="#c0b7ff"/><stop offset="0.363" stop-color="#fdaaff"/><stop offset="0.396" stop-color="#ff7ecf"/><stop offset="0.429" stop-color="#ff5fad"/><stop offset="0.462" stop-color="#ff4894"/><stop offset="0.495" stop-color="#ff3681"/><stop offset="0.528" stop-color="#ff2772"/><stop offset="0.561" stop-color="#ff1b66"/><stop offset="0.594" stop-color="#ff105c"/><stop offset="0.627" stop-color="#ff0753"/><stop offset="0.660" stop-color="#ff004c"/><stop offset="0.693" stop-color="#ff0045"/><stop offset="0.726" stop-color="#ff003f"/><stop offset="0.759" stop-color="#ff003a"/><stop offset="0.792" stop-color="#ff0036"/><stop offset="0.825" stop-color="#ff0032"/><stop offset="0.858" stop-color="#ff002e"/><stop offset="0.892" stop-color="#ff002b"/><stop offset="0.925" stop-color="#ff0028"/><stop offset="0.958" stop-color="#ff0025"/><stop offset="0.991" stop-color="#ff0023"/></linearGradient>
<linearGradient id="r29" gradientUnits="userSpaceOnUse" x1="1350" y1="0" x2="2198" y2="0"><stop offset="0.000" stop-color="#00ffec"/><stop offset="0.033" stop-color="#00fff4"/><stop offset="0.066" stop-color="#00fffc"/><stop offset="0.099" stop-color="#00f9ff"/><stop offset="0.132" stop-color="#00efff"/><stop offset="0.165" stop-color="#00e5ff"/><stop offset="0.198" stop-color="#00dbff"/><stop offset="0.231" stop-color="#00d0ff"/><stop offset="0.264" stop-color="#40c5ff"/><stop offset="0.297" stop-color="#7cb9ff"/><stop offset="0.330" stop-color="#b7acff"/><stop offset="0.363" stop-color="#f09fff"/><stop offset="0.396" stop-color="#ff7cda"/><stop offset="0.429" stop-color="#ff5db6"/><stop offset="0.462" stop-color="#ff469c"/><stop offset="0.495" stop-color="#ff3488"/><stop offset="0.528" stop-color="#ff2678"/><stop offset="0.561" stop-color="#ff196b"/><stop offset="0.594" stop-color="#ff0f60"/><stop offset="0.627" stop-color="#ff0557"/><stop offset="0.660" stop-color="#ff0050"/><stop offset="0.693" stop-color="#ff0049"/><stop offset="0.726" stop-color="#ff0043"/><stop offset="0.759" stop-color="#ff003e"/><stop offset="0.792" stop-color="#ff0039"/><stop offset="0.825" stop-color="#ff0035"/><stop offset="0.858" stop-color="#ff0031"/><stop offset="0.892" stop-color="#ff002e"/><stop offset="0.925" stop-color="#ff002b"/><stop offset="0.958" stop-color="#ff0028"/><stop offset="0.991" stop-color="#ff0025"/></linearGradient>
<linearGradient id="r30" gradientUnits="userSpaceOnUse" x1="1350" y1="0" x2="2198" y2="0"><stop offset="0.000" stop-color="#00fff7"/><stop offset="0.033" stop-color="#00ffff"/><stop offset="0.066" stop-color="#00f7ff"/><stop offset="0.099" stop-color="#00edff"/><stop offset="0.132" stop-color="#00e4ff"/><stop offset="0.165" stop-color="#00daff"/><stop offset="0.198" stop-color="#00d0ff"/><stop offset="0.231" stop-color="#00c5ff"/><stop offset="0.264" stop-color="#3bbaff"/><stop offset="0.297" stop-color="#76afff"/><stop offset="0.330" stop-color="#aea2ff"/><stop offset="0.363" stop-color="#e595ff"/><stop offset="0.396" stop-color="#ff7ae4"/><stop offset="0.429" stop-color="#ff5bbf"/><stop offset="0.462" stop-color="#ff44a3"/><stop offset="0.495" stop-color="#ff328e"/><stop offset="0.528" stop-color="#ff247e"/><stop offset="0.561" stop-color="#ff1771"/><stop offset="0.594" stop-color="#ff0d65"/><stop offset="0.627" stop-color="#ff025c"/><stop offset="0.660" stop-color="#ff0054"/><stop offset="0.693" stop-color="#ff004d"/><stop offset="0.726" stop-color="#ff0047"/><stop offset="0.759" stop-color="#ff0042"/><stop offset="0.792" stop-color="#ff003d"/><stop offset="0.825" stop-color="#ff0038"/><stop offset="0.858" stop-color="#ff0035"/><stop offset="0.892" stop-color="#ff0031"/><stop offset="0.925" stop-color="#ff002e"/><stop offset="0.958" stop-color="#ff002b"/><stop offset="0.991" stop-color="#ff0028"/></linearGradient>
<linearGradient id="r31" gradientUnits="userSpaceOnUse" x1="1350" y1="0" x2="2198" y2="0"><stop offset="0.000" stop-color="#00fdff"/><stop offset="0.033" stop-color="#00f5ff"/><stop offset="0.066" stop-color="#00ecff"/><stop offset="0.099" stop-color="#00e3ff"/><stop offset="0.132" stop-color="#00daff"/><stop offset="0.165" stop-color="#00d0ff"/><stop offset="0.198" stop-color="#00c6ff"/><stop offset="0.231" stop-color="#00bcff"/><stop offset="0.264" stop-color="#37b1ff"/><stop offset="0.297" stop-color="#6fa5ff"/><stop offset="0.330" stop-color="#a599ff"/><stop offset="0.363" stop-color="#db8cff"/><stop offset="0.396" stop-color="#ff77ef"/><stop offset="0.429" stop-color="#ff58c8"/><stop offset="0.462" stop-color="#ff42ab"/><stop offset="0.495" stop-color="#ff3095"/><stop offset="0.528" stop-color="#ff2284"/><stop offset="0.561" stop-color="#ff1676"/><stop offset="0.594" stop-color="#ff0b6a"/><stop offset="0.627" stop-color="#ff0061"/><stop offset="0.660" stop-color="#ff0058"/><stop offset="0.693" stop-color="#ff0051"/><stop offset="0.726" stop-color="#ff004b"/><stop offset="0.759" stop-color="#ff0045"/><stop offset="0.792" stop-color="#ff0040"/><stop offset="0.825" stop-color="#ff003c"/><stop offset="0.858" stop-color="#ff0038"/><stop offset="0.892" stop-color="#ff0034"/><stop offset="0.925" stop-color="#ff0031"/><stop offset="0.958" stop-color="#ff002d"/><stop offset="0.991" stop-color="#ff002b"/></linearGradient>
<linearGradient id="r32" gradientUnits="userSpaceOnUse" x1="1350" y1="0" x2="2198" y2="0"><stop offset="0.000" stop-color="#00f3ff"/><stop offset="0.033" stop-color="#00ebff"/><stop offset="0.066" stop-color="#00e2ff"/><stop offset="0.099" stop-color="#00d9ff"/><stop offset="0.132" stop-color="#00d0ff"/><stop offset="0.165" stop-color="#00c7ff"/><stop offset="0.198" stop-color="#00bdff"/><stop offset="0.231" stop-color="#00b2ff"/><stop offset="0.264" stop-color="#33a8ff"/><stop offset="0.297" stop-color="#6a9cff"/><stop offset="0.330" stop-color="#9e91ff"/><stop offset="0.363" stop-color="#d184ff"/><stop offset="0.396" stop-color="#ff75fa"/><stop offset="0.429" stop-color="#ff56d0"/><stop offset="0.462" stop-color="#ff40b3"/><stop offset="0.495" stop-color="#ff2e9c"/><stop offset="0.528" stop-color="#ff208a"/><stop offset="0.561" stop-color="#ff147b"/><stop offset="0.594" stop-color="#ff096f"/><stop offset="0.627" stop-color="#ff0065"/><stop offset="0.660" stop-color="#ff005d"/><stop offset="0.693" stop-color="#ff0055"/><stop offset="0.726" stop-color="#ff004e"/><stop offset="0.759" stop-color="#ff0049"/><stop offset="0.792" stop-color="#ff0043"/><stop offset="0.825" stop-color="#ff003f"/><stop offset="0.858" stop-color="#ff003b"/><stop offset="0.892" stop-color="#ff0037"/><stop offset="0.925" stop-color="#ff0033"/><stop offset="0.958" stop-color="#ff0030"/><stop offset="0.991" stop-color="#ff002d"/></linearGradient>
<linearGradient id="r33" gradientUnits="userSpaceOnUse" x1="1350" y1="0" x2="2198" y2="0"><stop offset="0.000" stop-color="#00e9ff"/><stop offset="0.033" stop-color="#00e1ff"/><stop offset="0.066" stop-color="#00d9ff"/><stop offset="0.099" stop-color="#00d0ff"/><stop offset="0.132" stop-color="#00c7ff"/><stop offset="0.165" stop-color="#00beff"/><stop offset="0.198" stop-color="#00b4ff"/><stop offset="0.231" stop-color="#00aaff"/><stop offset="0.264" stop-color="#309fff"/><stop offset="0.297" stop-color="#6494ff"/><stop offset="0.330" stop-color="#9789ff"/><stop offset="0.363" stop-color="#c87dff"/><stop offset="0.396" stop-color="#f970ff"/><stop offset="0.429" stop-color="#ff54d9"/><stop offset="0.462" stop-color="#ff3dba"/><stop offset="0.495" stop-color="#ff2ca3"/><stop offset="0.528" stop-color="#ff1e90"/><stop offset="0.561" stop-color="#ff1281"/><stop offset="0.594" stop-color="#ff0774"/><stop offset="0.627" stop-color="#ff006a"/><stop offset="0.660" stop-color="#ff0061"/><stop offset="0.693" stop-color="#ff0059"/><stop offset="0.726" stop-color="#ff0052"/><stop offset="0.759" stop-color="#ff004c"/><stop offset="0.792" stop-color="#ff0047"/><stop offset="0.825" stop-color="#ff0042"/><stop offset="0.858" stop-color="#ff003e"/><stop offset="0.892" stop-color="#ff003a"/><stop offset="0.925" stop-color="#ff0036"/><stop offset="0.958" stop-color="#ff0033"/><stop offset="0.991" stop-color="#ff0030"/></linearGradient>
<linearGradient id="r34" gradientUnits="userSpaceOnUse" x1="1350" y1="0" x2="2198" y2="0"><stop offset="0.000" stop-color="#00e1ff"/><stop offset="0.033" stop-color="#00d9ff"/><stop offset="0.066" stop-color="#00d0ff"/><stop offset="0.099" stop-color="#00c8ff"/><stop offset="0.132" stop-color="#00bfff"/><stop offset="0.165" stop-color="#00b6ff"/><stop offset="0.198" stop-color="#00acff"/><stop offset="0.231" stop-color="#00a2ff"/><stop offset="0.264" stop-color="#2c98ff"/><stop offset="0.297" stop-color="#5f8dff"/><stop offset="0.330" stop-color="#9081ff"/><stop offset="0.363" stop-color="#c075ff"/><stop offset="0.396" stop-color="#ef69ff"/><stop offset="0.429" stop-color="#ff52e2"/><stop offset="0.462" stop-color="#ff3bc2"/><stop offset="0.495" stop-color="#ff2aa9"/><stop offset="0.528" stop-color="#ff1c96"/><stop offset="0.561" stop-color="#ff1086"/><stop offset="0.594" stop-color="#ff0479"/><stop offset="0.627" stop-color="#ff006e"/><stop offset="0.660" stop-color="#ff0065"/><stop offset="0.693" stop-color="#ff005d"/><stop offset="0.726" stop-color="#ff0056"/><stop offset="0.759" stop-color="#ff0050"/><stop offset="0.792" stop-color="#ff004a"/><stop offset="0.825" stop-color="#ff0045"/><stop offset="0.858" stop-color="#ff0041"/><stop offset="0.892" stop-color="#ff003d"/><stop offset="0.925" stop-color="#ff0039"/><stop offset="0.958" stop-color="#ff0035"/><stop offset="0.991" stop-color="#ff0032"/></linearGradient>
<linearGradient id="r35" gradientUnits="userSpaceOnUse" x1="1350" y1="0" x2="2198" y2="0"><stop offset="0.000" stop-color="#00d8ff"/><stop offset="0.033" stop-color="#00d0ff"/><stop offset="0.066" stop-color="#00c8ff"/><stop offset="0.099" stop-color="#00c0ff"/><stop offset="0.132" stop-color="#00b7ff"/><stop offset="0.165" stop-color="#00aeff"/><stop offset="0.198" stop-color="#00a4ff"/><stop offset="0.231" stop-color="#009bff"/><stop offset="0.264" stop-color="#2990ff"/><stop offset="0.297" stop-color="#5b86ff"/><stop offset="0.330" stop-color="#8a7bff"/><stop offset="0.363" stop-color="#b86fff"/><stop offset="0.396" stop-color="#e663ff"/><stop offset="0.429" stop-color="#ff4fec"/><stop offset="0.462" stop-color="#ff39ca"/><stop offset="0.495" stop-color="#ff28b0"/><stop offset="0.528" stop-color="#ff1a9c"/><stop offset="0.561" stop-color="#ff0d8c"/><stop offset="0.594" stop-color="#ff027e"/><stop offset="0.627" stop-color="#ff0073"/><stop offset="0.660" stop-color="#ff0069"/><stop offset="0.693" stop-color="#ff0061"/><stop offset="0.726" stop-color="#ff005a"/><stop offset="0.759" stop-color="#ff0053"/><stop offset="0.792" stop-color="#ff004d"/><stop offset="0.825" stop-color="#ff0048"/><stop offset="0.858" stop-color="#ff0044"/><stop offset="0.892" stop-color="#ff003f"/><stop offset="0.925" stop-color="#ff003c"/><stop offset="0.958" stop-color="#ff0038"/><stop offset="0.991" stop-color="#ff0035"/></linearGradient>
<linearGradient id="r36" gradientUnits="userSpaceOnUse" x1="1350" y1="0" x2="2198" y2="0"><stop offset="0.000" stop-color="#00d0ff"/><stop offset="0.033" stop-color="#00c8ff"/><stop offset="0.066" stop-color="#00c0ff"/><stop offset="0.099" stop-color="#00b8ff"/><stop offset="0.132" stop-color="#00afff"/><stop offset="0.165" stop-color="#00a6ff"/><stop offset="0.198" stop-color="#009dff"/><stop offset="0.231" stop-color="#0094ff"/><stop offset="0.264" stop-color="#2689ff"/><stop offset="0.297" stop-color="#577fff"/><stop offset="0.330" stop-color="#8474ff"/><stop offset="0.363" stop-color="#b169ff"/><stop offset="0.396" stop-color="#dd5dff"/><stop offset="0.429" stop-color="#ff4df5"/><stop offset="0.462" stop-color="#ff37d1"/><stop offset="0.495" stop-color="#ff26b7"/><stop offset="0.528" stop-color="#ff17a2"/><stop offset="0.561" stop-color="#ff0b91"/><stop offset="0.594" stop-color="#ff0083"/><stop offset="0.627" stop-color="#ff0077"/><stop offset="0.660" stop-color="#ff006d"/><stop offset="0.693" stop-color="#ff0065"/><stop offset="0.726" stop-color="#ff005d"/><stop offset="0.759" stop-color="#ff0057"/><stop offset="0.792" stop-color="#ff0051"/><stop offset="0.825" stop-color="#ff004b"/><stop offset="0.858" stop-color="#ff0047"/><stop offset="0.892" stop-color="#ff0042"/><stop offset="0.925" stop-color="#ff003e"/><stop offset="0.958" stop-color="#ff003b"/><stop offset="0.991" stop-color="#ff0037"/></linearGradient>
<linearGradient id="r37" gradientUnits="userSpaceOnUse" x1="1350" y1="0" x2="2198" y2="0"><stop offset="0.000" stop-color="#00c9ff"/><stop offset="0.033" stop-color="#00c1ff"/><stop offset="0.066" stop-color="#00b9ff"/><stop offset="0.099" stop-color="#00b1ff"/><stop offset="0.132" stop-color="#00a8ff"/><stop offset="0.165" stop-color="#00a0ff"/><stop offset="0.198" stop-color="#0096ff"/><stop offset="0.231" stop-color="#008dff"/><stop offset="0.264" stop-color="#2383ff"/><stop offset="0.297" stop-color="#5279ff"/><stop offset="0.330" stop-color="#7f6eff"/><stop offset="0.363" stop-color="#aa63ff"/><stop offset="0.396" stop-color="#d557ff"/><stop offset="0.429" stop-color="#ff4afe"/><stop offset="0.462" stop-color="#ff34d9"/><stop offset="0.495" stop-color="#ff23be"/><stop offset="0.528" stop-color="#ff15a8"/><stop offset="0.561" stop-color="#ff0996"/><stop offset="0.594" stop-color="#ff0088"/><stop offset="0.627" stop-color="#ff007c"/><stop offset="0.660" stop-color="#ff0072"/><stop offset="0.693" stop-color="#ff0069"/><stop offset="0.726" stop-color="#ff0061"/><stop offset="0.759" stop-color="#ff005a"/><stop offset="0.792" stop-color="#ff0054"/><stop offset="0.825" stop-color="#ff004f"/><stop offset="0.858" stop-color="#ff004a"/><stop offset="0.892" stop-color="#ff0045"/><stop offset="0.925" stop-color="#ff0041"/><stop offset="0.958" stop-color="#ff003d"/><stop offset="0.991" stop-color="#ff003a"/></linearGradient>
<linearGradient id="r38" gradientUnits="userSpaceOnUse" x1="1350" y1="0" x2="2198" y2="0"><stop offset="0.000" stop-color="#00c2ff"/><stop offset="0.033" stop-color="#00baff"/><stop offset="0.066" stop-color="#00b2ff"/><stop offset="0.099" stop-color="#00aaff"/><stop offset="0.132" stop-color="#00a2ff"/><stop offset="0.165" stop-color="#0099ff"/><stop offset="0.198" stop-color="#0090ff"/><stop offset="0.231" stop-color="#0087ff"/><stop offset="0.264" stop-color="#217dff"/><stop offset="0.297" stop-color="#4f73ff"/><stop offset="0.330" stop-color="#7a68ff"/><stop offset="0.363" stop-color="#a45dff"/><stop offset="0.396" stop-color="#cd52ff"/><stop offset="0.429" stop-color="#f746ff"/><stop offset="0.462" stop-color="#ff32e1"/><stop offset="0.495" stop-color="#ff21c4"/><stop offset="0.528" stop-color="#ff13ae"/><stop offset="0.561" stop-color="#ff079c"/><stop offset="0.594" stop-color="#ff008d"/><stop offset="0.627" stop-color="#ff0081"/><stop offset="0.660" stop-color="#ff0076"/><stop offset="0.693" stop-color="#ff006d"/><stop offset="0.726" stop-color="#ff0065"/><stop offset="0.759" stop-color="#ff005e"/><stop offset="0.792" stop-color="#ff0057"/><stop offset="0.825" stop-color="#ff0052"/><stop offset="0.858" stop-color="#ff004d"/><stop offset="0.892" stop-color="#ff0048"/><stop offset="0.925" stop-color="#ff0044"/><stop offset="0.958" stop-color="#ff0040"/><stop offset="0.991" stop-color="#ff003c"/></linearGradient>
<linearGradient id="r39" gradientUnits="userSpaceOnUse" x1="1350" y1="0" x2="2198" y2="0"><stop offset="0.000" stop-color="#00bbff"/><stop offset="0.033" stop-color="#00b4ff"/><stop offset="0.066" stop-color="#00acff"/><stop offset="0.099" stop-color="#00a4ff"/><stop offset="0.132" stop-color="#009bff"/><stop offset="0.165" stop-color="#0093ff"/><stop offset="0.198" stop-color="#008aff"/><stop offset="0.231" stop-color="#0081ff"/><stop offset="0.264" stop-color="#1e77ff"/><stop offset="0.297" stop-color="#4b6dff"/><stop offset="0.330" stop-color="#7563ff"/><stop offset="0.363" stop-color="#9e58ff"/><stop offset="0.396" stop-color="#c64dff"/><stop offset="0.429" stop-color="#ef41ff"/><stop offset="0.462" stop-color="#ff30e9"/><stop offset="0.495" stop-color="#ff1fcb"/><stop offset="0.528" stop-color="#ff11b4"/><stop offset="0.561" stop-color="#ff04a1"/><stop offset="0.594" stop-color="#ff0092"/><stop offset="0.627" stop-color="#ff0085"/><stop offset="0.660" stop-color="#ff007a"/><stop offset="0.693" stop-color="#ff0071"/><stop offset="0.726" stop-color="#ff0068"/><stop offset="0.759" stop-color="#ff0061"/><stop offset="0.792" stop-color="#ff005b"/><stop offset="0.825" stop-color="#ff0055"/><stop offset="0.858" stop-color="#ff0050"/><stop offset="0.892" stop-color="#ff004b"/><stop offset="0.925" stop-color="#ff0047"/><stop offset="0.958" stop-color="#ff0043"/><stop offset="0.991" stop-color="#ff003f"/></linearGradient>
<linearGradient id="r40" gradientUnits="userSpaceOnUse" x1="1350" y1="0" x2="2198" y2="0"><stop offset="0.000" stop-color="#00b5ff"/><stop offset="0.033" stop-color="#00adff"/><stop offset="0.066" stop-color="#00a6ff"/><stop offset="0.099" stop-color="#009eff"/><stop offset="0.132" stop-color="#0096ff"/><stop offset="0.165" stop-color="#008dff"/><stop offset="0.198" stop-color="#0084ff"/><stop offset="0.231" stop-color="#007bff"/><stop offset="0.264" stop-color="#1c72ff"/><stop offset="0.297" stop-color="#4868ff"/><stop offset="0.330" stop-color="#705eff"/><stop offset="0.363" stop-color="#9853ff"/><stop offset="0.396" stop-color="#c048ff"/><stop offset="0.429" stop-color="#e73cff"/><stop offset="0.462" stop-color="#ff2df1"/><stop offset="0.495" stop-color="#ff1cd2"/><stop offset="0.528" stop-color="#ff0fba"/><stop offset="0.561" stop-color="#ff02a7"/><stop offset="0.594" stop-color="#ff0097"/><stop offset="0.627" stop-color="#ff008a"/><stop offset="0.660" stop-color="#ff007e"/><stop offset="0.693" stop-color="#ff0075"/><stop offset="0.726" stop-color="#ff006c"/><stop offset="0.759" stop-color="#ff0065"/><stop offset="0.792" stop-color="#ff005e"/><stop offset="0.825" stop-color="#ff0058"/><stop offset="0.858" stop-color="#ff0053"/><stop offset="0.892" stop-color="#ff004e"/><stop offset="0.925" stop-color="#ff0049"/><stop offset="0.958" stop-color="#ff0045"/><stop offset="0.991" stop-color="#ff0041"/></linearGradient>
<linearGradient id="r41" gradientUnits="userSpaceOnUse" x1="1350" y1="0" x2="2198" y2="0"><stop offset="0.000" stop-color="#00afff"/><stop offset="0.033" stop-color="#00a7ff"/><stop offset="0.066" stop-color="#00a0ff"/><stop offset="0.099" stop-color="#0098ff"/><stop offset="0.132" stop-color="#0090ff"/><stop offset="0.165" stop-color="#0088ff"/><stop offset="0.198" stop-color="#007fff"/><stop offset="0.231" stop-color="#0076ff"/><stop offset="0.264" stop-color="#1a6dff"/><stop offset="0.297" stop-color="#4463ff"/><stop offset="0.330" stop-color="#6c59ff"/><stop offset="0.363" stop-color="#934fff"/><stop offset="0.396" stop-color="#b944ff"/><stop offset="0.429" stop-color="#df38ff"/><stop offset="0.462" stop-color="#ff2bf9"/><stop offset="0.495" stop-color="#ff1ad9"/><stop offset="0.528" stop-color="#ff0cc0"/><stop offset="0.561" stop-color="#ff00ac"/><stop offset="0.594" stop-color="#ff009c"/><stop offset="0.627" stop-color="#ff008e"/><stop offset="0.660" stop-color="#ff0083"/><stop offset="0.693" stop-color="#ff0079"/><stop offset="0.726" stop-color="#ff0070"/><stop offset="0.759" stop-color="#ff0068"/><stop offset="0.792" stop-color="#ff0061"/><stop offset="0.825" stop-color="#ff005b"/><stop offset="0.858" stop-color="#ff0056"/><stop offset="0.892" stop-color="#ff0051"/><stop offset="0.925" stop-color="#ff004c"/><stop offset="0.958" stop-color="#ff0048"/><stop offset="0.991" stop-color="#ff0044"/></linearGradient>
<linearGradient id="r42" gradientUnits="userSpaceOnUse" x1="1350" y1="0" x2="2198" y2="0"><stop offset="0.000" stop-color="#00a9ff"/><stop offset="0.033" stop-color="#00a2ff"/><stop offset="0.066" stop-color="#009aff"/><stop offset="0.099" stop-color="#0092ff"/><stop offset="0.132" stop-color="#008aff"/><stop offset="0.165" stop-color="#0082ff"/><stop offset="0.198" stop-color="#007aff"/><stop offset="0.231" stop-color="#0071ff"/><stop offset="0.264" stop-color="#1768ff"/><stop offset="0.297" stop-color="#415eff"/><stop offset="0.330" stop-color="#6855ff"/><stop offset="0.363" stop-color="#8e4aff"/><stop offset="0.396" stop-color="#b33fff"/><stop offset="0.429" stop-color="#d834ff"/><stop offset="0.462" stop-color="#fd28ff"/><stop offset="0.495" stop-color="#ff18e0"/><stop offset="0.528" stop-color="#ff0ac6"/><stop offset="0.561" stop-color="#ff00b2"/><stop offset="0.594" stop-color="#ff00a1"/><stop offset="0.627" stop-color="#ff0093"/><stop offset="0.660" stop-color="#ff0087"/><stop offset="0.693" stop-color="#ff007c"/><stop offset="0.726" stop-color="#ff0073"/><stop offset="0.759" stop-color="#ff006c"/><stop offset="0.792" stop-color="#ff0064"/><stop offset="0.825" stop-color="#ff005e"/><stop offset="0.858" stop-color="#ff0058"/><stop offset="0.892" stop-color="#ff0053"/><stop offset="0.925" stop-color="#ff004f"/><stop offset="0.958" stop-color="#ff004a"/><stop offset="0.991" stop-color="#ff0046"/></linearGradient>
<linearGradient id="r43" gradientUnits="userSpaceOnUse" x1="1350" y1="0" x2="2198" y2="0"><stop offset="0.000" stop-color="#00a3ff"/><stop offset="0.033" stop-color="#009cff"/><stop offset="0.066" stop-color="#0095ff"/><stop offset="0.099" stop-color="#008dff"/><stop offset="0.132" stop-color="#0085ff"/><stop offset="0.165" stop-color="#007dff"/><stop offset="0.198" stop-color="#0075ff"/><stop offset="0.231" stop-color="#006cff"/><stop offset="0.264" stop-color="#1563ff"/><stop offset="0.297" stop-color="#3e5aff"/><stop offset="0.330" stop-color="#6450ff"/><stop offset="0.363" stop-color="#8946ff"/><stop offset="0.396" stop-color="#ad3bff"/><stop offset="0.429" stop-color="#d130ff"/><stop offset="0.462" stop-color="#f524ff"/><stop offset="0.495" stop-color="#ff15e7"/><stop offset="0.528" stop-color="#ff07cd"/><stop offset="0.561" stop-color="#ff00b7"/><stop offset="0.594" stop-color="#ff00a6"/><stop offset="0.627" stop-color="#ff0097"/><stop offset="0.660" stop-color="#ff008b"/><stop offset="0.693" stop-color="#ff0080"/><stop offset="0.726" stop-color="#ff0077"/><stop offset="0.759" stop-color="#ff006f"/><stop offset="0.792" stop-color="#ff0068"/><stop offset="0.825" stop-color="#ff0061"/><stop offset="0.858" stop-color="#ff005b"/><stop offset="0.892" stop-color="#ff0056"/><stop offset="0.925" stop-color="#ff0051"/><stop offset="0.958" stop-color="#ff004d"/><stop offset="0.991" stop-color="#ff0049"/></linearGradient>
<linearGradient id="r44" gradientUnits="userSpaceOnUse" x1="1350" y1="0" x2="2198" y2="0"><stop offset="0.000" stop-color="#009eff"/><stop offset="0.033" stop-color="#0097ff"/><stop offset="0.066" stop-color="#0090ff"/><stop offset="0.099" stop-color="#0088ff"/><stop offset="0.132" stop-color="#0080ff"/><stop offset="0.165" stop-color="#0078ff"/><stop offset="0.198" stop-color="#0070ff"/><stop offset="0.231" stop-color="#0068ff"/><stop offset="0.264" stop-color="#135fff"/><stop offset="0.297" stop-color="#3c56ff"/><stop offset="0.330" stop-color="#614cff"/><stop offset="0.363" stop-color="#8542ff"/><stop offset="0.396" stop-color="#a838ff"/><stop offset="0.429" stop-color="#cb2cff"/><stop offset="0.462" stop-color="#ee21ff"/><stop offset="0.495" stop-color="#ff12ee"/><stop offset="0.528" stop-color="#ff04d3"/><stop offset="0.561" stop-color="#ff00bd"/><stop offset="0.594" stop-color="#ff00ab"/><stop offset="0.627" stop-color="#ff009c"/><stop offset="0.660" stop-color="#ff008f"/><stop offset="0.693" stop-color="#ff0084"/><stop offset="0.726" stop-color="#ff007b"/><stop offset="0.759" stop-color="#ff0072"/><stop offset="0.792" stop-color="#ff006b"/><stop offset="0.825" stop-color="#ff0064"/><stop offset="0.858" stop-color="#ff005e"/><stop offset="0.892" stop-color="#ff0059"/><stop offset="0.925" stop-color="#ff0054"/><stop offset="0.958" stop-color="#ff0050"/><stop offset="0.991" stop-color="#ff004b"/></linearGradient>
<linearGradient id="r45" gradientUnits="userSpaceOnUse" x1="1350" y1="0" x2="2198" y2="0"><stop offset="0.000" stop-color="#0099ff"/><stop offset="0.033" stop-color="#0092ff"/><stop offset="0.066" stop-color="#008bff"/><stop offset="0.099" stop-color="#0083ff"/><stop offset="0.132" stop-color="#007cff"/><stop offset="0.165" stop-color="#0074ff"/><stop offset="0.198" stop-color="#006cff"/><stop offset="0.231" stop-color="#0063ff"/><stop offset="0.264" stop-color="#115bff"/><stop offset="0.297" stop-color="#3952ff"/><stop offset="0.330" stop-color="#5d48ff"/><stop offset="0.363" stop-color="#803eff"/><stop offset="0.396" stop-color="#a334ff"/><stop offset="0.429" stop-color="#c529ff"/><stop offset="0.462" stop-color="#e71dff"/><stop offset="0.495" stop-color="#ff10f5"/><stop offset="0.528" stop-color="#ff01d9"/><stop offset="0.561" stop-color="#ff00c2"/><stop offset="0.594" stop-color="#ff00b0"/><stop offset="0.627" stop-color="#ff00a1"/><stop offset="0.660" stop-color="#ff0094"/><stop offset="0.693" stop-color="#ff0088"/><stop offset="0.726" stop-color="#ff007f"/><stop offset="0.759" stop-color="#ff0076"/><stop offset="0.792" stop-color="#ff006e"/><stop offset="0.825" stop-color="#ff0067"/><stop offset="0.858" stop-color="#ff0061"/><stop offset="0.892" stop-color="#ff005c"/><stop offset="0.925" stop-color="#ff0057"/><stop offset="0.958" stop-color="#ff0052"/><stop offset="0.991" stop-color="#ff004e"/></linearGradient>
<linearGradient id="r46" gradientUnits="userSpaceOnUse" x1="1350" y1="0" x2="2198" y2="0"><stop offset="0.000" stop-color="#0094ff"/><stop offset="0.033" stop-color="#008dff"/><stop offset="0.066" stop-color="#0086ff"/><stop offset="0.099" stop-color="#007fff"/><stop offset="0.132" stop-color="#0077ff"/><stop offset="0.165" stop-color="#0070ff"/><stop offset="0.198" stop-color="#0067ff"/><stop offset="0.231" stop-color="#005fff"/><stop offset="0.264" stop-color="#0f57ff"/><stop offset="0.297" stop-color="#364eff"/><stop offset="0.330" stop-color="#5a44ff"/><stop offset="0.363" stop-color="#7c3bff"/><stop offset="0.396" stop-color="#9e30ff"/><stop offset="0.429" stop-color="#bf26ff"/><stop offset="0.462" stop-color="#e11aff"/><stop offset="0.495" stop-color="#ff0dfc"/><stop offset="0.528" stop-color="#ff00df"/><stop offset="0.561" stop-color="#ff00c8"/><stop offset="0.594" stop-color="#ff00b5"/><stop offset="0.627" stop-color="#ff00a5"/><stop offset="0.660" stop-color="#ff0098"/><stop offset="0.693" stop-color="#ff008c"/><stop offset="0.726" stop-color="#ff0082"/><stop offset="0.759" stop-color="#ff0079"/><stop offset="0.792" stop-color="#ff0072"/><stop offset="0.825" stop-color="#ff006b"/><stop offset="0.858" stop-color="#ff0064"/><stop offset="0.892" stop-color="#ff005f"/><stop offset="0.925" stop-color="#ff0059"/><stop offset="0.958" stop-color="#ff0055"/><stop offset="0.991" stop-color="#ff0050"/></linearGradient>
<linearGradient id="r47" gradientUnits="userSpaceOnUse" x1="1350" y1="0" x2="2198" y2="0"><stop offset="0.000" stop-color="#0090ff"/><stop offset="0.033" stop-color="#0089ff"/><stop offset="0.066" stop-color="#0082ff"/><stop offset="0.099" stop-color="#007aff"/><stop offset="0.132" stop-color="#0073ff"/><stop offset="0.165" stop-color="#006bff"/><stop offset="0.198" stop-color="#0063ff"/><stop offset="0.231" stop-color="#005bff"/><stop offset="0.264" stop-color="#0e53ff"/><stop offset="0.297" stop-color="#344aff"/><stop offset="0.330" stop-color="#5741ff"/><stop offset="0.363" stop-color="#7837ff"/><stop offset="0.396" stop-color="#992dff"/><stop offset="0.429" stop-color="#ba22ff"/><stop offset="0.462" stop-color="#da17ff"/><stop offset="0.495" stop-color="#fb0aff"/><stop offset="0.528" stop-color="#ff00e5"/><stop offset="0.561" stop-color="#ff00ce"/><stop offset="0.594" stop-color="#ff00ba"/><stop offset="0.627" stop-color="#ff00aa"/><stop offset="0.660" stop-color="#ff009c"/><stop offset="0.693" stop-color="#ff0090"/><stop offset="0.726" stop-color="#ff0086"/><stop offset="0.759" stop-color="#ff007d"/><stop offset="0.792" stop-color="#ff0075"/><stop offset="0.825" stop-color="#ff006e"/><stop offset="0.858" stop-color="#ff0067"/><stop offset="0.892" stop-color="#ff0061"/><stop offset="0.925" stop-color="#ff005c"/><stop offset="0.958" stop-color="#ff0057"/><stop offset="0.991" stop-color="#ff0053"/></linearGradient>
<linearGradient id="r48" gradientUnits="userSpaceOnUse" x1="1350" y1="0" x2="2198" y2="0"><stop offset="0.000" stop-color="#008bff"/><stop offset="0.033" stop-color="#0084ff"/><stop offset="0.066" stop-color="#007dff"/><stop offset="0.099" stop-color="#0076ff"/><stop offset="0.132" stop-color="#006fff"/><stop offset="0.165" stop-color="#0067ff"/><stop offset="0.198" stop-color="#0060ff"/><stop offset="0.231" stop-color="#0057ff"/><stop offset="0.264" stop-color="#0c4fff"/><stop offset="0.297" stop-color="#3246ff"/><stop offset="0.330" stop-color="#543dff"/><stop offset="0.363" stop-color="#7534ff"/><stop offset="0.396" stop-color="#952aff"/><stop offset="0.429" stop-color="#b51fff"/><stop offset="0.462" stop-color="#d414ff"/><stop offset="0.495" stop-color="#f407ff"/><stop offset="0.528" stop-color="#ff00ec"/><stop offset="0.561" stop-color="#ff00d3"/><stop offset="0.594" stop-color="#ff00bf"/><stop offset="0.627" stop-color="#ff00ae"/><stop offset="0.660" stop-color="#ff00a0"/><stop offset="0.693" stop-color="#ff0094"/><stop offset="0.726" stop-color="#ff008a"/><stop offset="0.759" stop-color="#ff0080"/><stop offset="0.792" stop-color="#ff0078"/><stop offset="0.825" stop-color="#ff0071"/><stop offset="0.858" stop-color="#ff006a"/><stop offset="0.892" stop-color="#ff0064"/><stop offset="0.925" stop-color="#ff005f"/><stop offset="0.958" stop-color="#ff005a"/><stop offset="0.991" stop-color="#ff0055"/></linearGradient>
<linearGradient id="r49" gradientUnits="userSpaceOnUse" x1="1350" y1="0" x2="2198" y2="0"><stop offset="0.000" stop-color="#0087ff"/><stop offset="0.033" stop-color="#0080ff"/><stop offset="0.066" stop-color="#0079ff"/><stop offset="0.099" stop-color="#0072ff"/><stop offset="0.132" stop-color="#006bff"/><stop offset="0.165" stop-color="#0064ff"/><stop offset="0.198" stop-color="#005cff"/><stop offset="0.231" stop-color="#0054ff"/><stop offset="0.264" stop-color="#0a4bff"/><stop offset="0.297" stop-color="#2f43ff"/><stop offset="0.330" stop-color="#513aff"/><stop offset="0.363" stop-color="#7131ff"/><stop offset="0.396" stop-color="#9127ff"/><stop offset="0.429" stop-color="#b01cff"/><stop offset="0.462" stop-color="#cf11ff"/><stop offset="0.495" stop-color="#ee04ff"/><stop offset="0.528" stop-color="#ff00f2"/><stop offset="0.561" stop-color="#ff00d9"/><stop offset="0.594" stop-color="#ff00c4"/><stop offset="0.627" stop-color="#ff00b3"/><stop offset="0.660" stop-color="#ff00a5"/><stop offset="0.693" stop-color="#ff0098"/><stop offset="0.726" stop-color="#ff008d"/><stop offset="0.759" stop-color="#ff0084"/><stop offset="0.792" stop-color="#ff007b"/><stop offset="0.825" stop-color="#ff0074"/><stop offset="0.858" stop-color="#ff006d"/><stop offset="0.892" stop-color="#ff0067"/><stop offset="0.925" stop-color="#ff0061"/><stop offset="0.958" stop-color="#ff005c"/><stop offset="0.991" stop-color="#ff0058"/></linearGradient>
<linearGradient id="r50" gradientUnits="userSpaceOnUse" x1="1350" y1="0" x2="2198" y2="0"><stop offset="0.000" stop-color="#0083ff"/><stop offset="0.033" stop-color="#007cff"/><stop offset="0.066" stop-color="#0075ff"/><stop offset="0.099" stop-color="#006eff"/><stop offset="0.132" stop-color="#0067ff"/><stop offset="0.165" stop-color="#0060ff"/><stop offset="0.198" stop-color="#0058ff"/><stop offset="0.231" stop-color="#0050ff"/><stop offset="0.264" stop-color="#0848ff"/><stop offset="0.297" stop-color="#2d40ff"/><stop offset="0.330" stop-color="#4e37ff"/><stop offset="0.363" stop-color="#6e2dff"/><stop offset="0.396" stop-color="#8d24ff"/><stop offset="0.429" stop-color="#ab19ff"/><stop offset="0.462" stop-color="#c90eff"/><stop offset="0.495" stop-color="#e800ff"/><stop offset="0.528" stop-color="#ff00f8"/><stop offset="0.561" stop-color="#ff00de"/><stop offset="0.594" stop-color="#ff00c9"/><stop offset="0.627" stop-color="#ff00b8"/><stop offset="0.660" stop-color="#ff00a9"/><stop offset="0.693" stop-color="#ff009c"/><stop offset="0.726" stop-color="#ff0091"/><stop offset="0.759" stop-color="#ff0087"/><stop offset="0.792" stop-color="#ff007f"/><stop offset="0.825" stop-color="#ff0077"/><stop offset="0.858" stop-color="#ff0070"/><stop offset="0.892" stop-color="#ff006a"/><stop offset="0.925" stop-color="#ff0064"/><stop offset="0.958" stop-color="#ff005f"/><stop offset="0.991" stop-color="#ff005a"/></linearGradient>
<linearGradient id="r51" gradientUnits="userSpaceOnUse" x1="1350" y1="0" x2="2198" y2="0"><stop offset="0.000" stop-color="#007fff"/><stop offset="0.033" stop-color="#0078ff"/><stop offset="0.066" stop-color="#0072ff"/><stop offset="0.099" stop-color="#006bff"/><stop offset="0.132" stop-color="#0064ff"/><stop offset="0.165" stop-color="#005cff"/><stop offset="0.198" stop-color="#0055ff"/><stop offset="0.231" stop-color="#004dff"/><stop offset="0.264" stop-color="#0745ff"/><stop offset="0.297" stop-color="#2b3cff"/><stop offset="0.330" stop-color="#4c34ff"/><stop offset="0.363" stop-color="#6a2bff"/><stop offset="0.396" stop-color="#8921ff"/><stop offset="0.429" stop-color="#a616ff"/><stop offset="0.462" stop-color="#c40bff"/><stop offset="0.495" stop-color="#e200ff"/><stop offset="0.528" stop-color="#ff00ff"/><stop offset="0.561" stop-color="#ff00e4"/><stop offset="0.594" stop-color="#ff00ce"/><stop offset="0.627" stop-color="#ff00bc"/><stop offset="0.660" stop-color="#ff00ad"/><stop offset="0.693" stop-color="#ff00a0"/><stop offset="0.726" stop-color="#ff0095"/><stop offset="0.759" stop-color="#ff008b"/><stop offset="0.792" stop-color="#ff0082"/><stop offset="0.825" stop-color="#ff007a"/><stop offset="0.858" stop-color="#ff0073"/><stop offset="0.892" stop-color="#ff006d"/><stop offset="0.925" stop-color="#ff0067"/><stop offset="0.958" stop-color="#ff0061"/><stop offset="0.991" stop-color="#ff005d"/></linearGradient>
<linearGradient id="r52" gradientUnits="userSpaceOnUse" x1="1350" y1="0" x2="2198" y2="0"><stop offset="0.000" stop-color="#007bff"/><stop offset="0.033" stop-color="#0075ff"/><stop offset="0.066" stop-color="#006eff"/><stop offset="0.099" stop-color="#0067ff"/><stop offset="0.132" stop-color="#0060ff"/><stop offset="0.165" stop-color="#0059ff"/><stop offset="0.198" stop-color="#0051ff"/><stop offset="0.231" stop-color="#004aff"/><stop offset="0.264" stop-color="#0542ff"/><stop offset="0.297" stop-color="#2939ff"/><stop offset="0.330" stop-color="#4931ff"/><stop offset="0.363" stop-color="#6728ff"/><stop offset="0.396" stop-color="#851eff"/><stop offset="0.429" stop-color="#a214ff"/><stop offset="0.462" stop-color="#bf08ff"/><stop offset="0.495" stop-color="#dc00ff"/><stop offset="0.528" stop-color="#f900ff"/><stop offset="0.561" stop-color="#ff00ea"/><stop offset="0.594" stop-color="#ff00d4"/><stop offset="0.627" stop-color="#ff00c1"/><stop offset="0.660" stop-color="#ff00b1"/><stop offset="0.693" stop-color="#ff00a4"/><stop offset="0.726" stop-color="#ff0098"/><stop offset="0.759" stop-color="#ff008e"/><stop offset="0.792" stop-color="#ff0085"/><stop offset="0.825" stop-color="#ff007d"/><stop offset="0.858" stop-color="#ff0076"/><stop offset="0.892" stop-color="#ff006f"/><stop offset="0.925" stop-color="#ff0069"/><stop offset="0.958" stop-color="#ff0064"/><stop offset="0.991" stop-color="#ff005f"/></linearGradient>
<linearGradient id="r53" gradientUnits="userSpaceOnUse" x1="1350" y1="0" x2="2198" y2="0"><stop offset="0.000" stop-color="#0077ff"/><stop offset="0.033" stop-color="#0071ff"/><stop offset="0.066" stop-color="#006aff"/><stop offset="0.099" stop-color="#0064ff"/><stop offset="0.132" stop-color="#005dff"/><stop offset="0.165" stop-color="#0056ff"/><stop offset="0.198" stop-color="#004eff"/><stop offset="0.231" stop-color="#0047ff"/><stop offset="0.264" stop-color="#043fff"/><stop offset="0.297" stop-color="#2736ff"/><stop offset="0.330" stop-color="#472eff"/><stop offset="0.363" stop-color="#6425ff"/><stop offset="0.396" stop-color="#811bff"/><stop offset="0.429" stop-color="#9e11ff"/><stop offset="0.462" stop-color="#ba05ff"/><stop offset="0.495" stop-color="#d700ff"/><stop offset="0.528" stop-color="#f300ff"/><stop offset="0.561" stop-color="#ff00f0"/><stop offset="0.594" stop-color="#ff00d9"/><stop offset="0.627" stop-color="#ff00c6"/><stop offset="0.660" stop-color="#ff00b6"/><stop offset="0.693" stop-color="#ff00a8"/><stop offset="0.726" stop-color="#ff009c"/><stop offset="0.759" stop-color="#ff0092"/><stop offset="0.792" stop-color="#ff0088"/><stop offset="0.825" stop-color="#ff0080"/><stop offset="0.858" stop-color="#ff0079"/><stop offset="0.892" stop-color="#ff0072"/><stop offset="0.925" stop-color="#ff006c"/><stop offset="0.958" stop-color="#ff0067"/><stop offset="0.991" stop-color="#ff0062"/></linearGradient>
<linearGradient id="r54" gradientUnits="userSpaceOnUse" x1="1350" y1="0" x2="2198" y2="0"><stop offset="0.000" stop-color="#0074ff"/><stop offset="0.033" stop-color="#006dff"/><stop offset="0.066" stop-color="#0067ff"/><stop offset="0.099" stop-color="#0060ff"/><stop offset="0.132" stop-color="#0059ff"/><stop offset="0.165" stop-color="#0052ff"/><stop offset="0.198" stop-color="#004bff"/><stop offset="0.231" stop-color="#0044ff"/><stop offset="0.264" stop-color="#023cff"/><stop offset="0.297" stop-color="#2634ff"/><stop offset="0.330" stop-color="#442bff"/><stop offset="0.363" stop-color="#6222ff"/><stop offset="0.396" stop-color="#7e19ff"/><stop offset="0.429" stop-color="#9a0eff"/><stop offset="0.462" stop-color="#b602ff"/><stop offset="0.495" stop-color="#d200ff"/><stop offset="0.528" stop-color="#ed00ff"/><stop offset="0.561" stop-color="#ff00f5"/><stop offset="0.594" stop-color="#ff00de"/><stop offset="0.627" stop-color="#ff00ca"/><stop offset="0.660" stop-color="#ff00ba"/><stop offset="0.693" stop-color="#ff00ac"/><stop offset="0.726" stop-color="#ff00a0"/><stop offset="0.759" stop-color="#ff0095"/><stop offset="0.792" stop-color="#ff008c"/><stop offset="0.825" stop-color="#ff0083"/><stop offset="0.858" stop-color="#ff007c"/><stop offset="0.892" stop-color="#ff0075"/><stop offset="0.925" stop-color="#ff006f"/><stop offset="0.958" stop-color="#ff0069"/><stop offset="0.991" stop-color="#ff0064"/></linearGradient>
<linearGradient id="r55" gradientUnits="userSpaceOnUse" x1="1350" y1="0" x2="2198" y2="0"><stop offset="0.000" stop-color="#0070ff"/><stop offset="0.033" stop-color="#006aff"/><stop offset="0.066" stop-color="#0064ff"/><stop offset="0.099" stop-color="#005dff"/><stop offset="0.132" stop-color="#0056ff"/><stop offset="0.165" stop-color="#004fff"/><stop offset="0.198" stop-color="#0048ff"/><stop offset="0.231" stop-color="#0041ff"/><stop offset="0.264" stop-color="#0039ff"/><stop offset="0.297" stop-color="#2431ff"/><stop offset="0.330" stop-color="#4228ff"/><stop offset="0.363" stop-color="#5f20ff"/><stop offset="0.396" stop-color="#7b16ff"/><stop offset="0.429" stop-color="#960cff"/><stop offset="0.462" stop-color="#b100ff"/><stop offset="0.495" stop-color="#cd00ff"/><stop offset="0.528" stop-color="#e800ff"/><stop offset="0.561" stop-color="#ff00fb"/><stop offset="0.594" stop-color="#ff00e3"/><stop offset="0.627" stop-color="#ff00cf"/><stop offset="0.660" stop-color="#ff00be"/><stop offset="0.693" stop-color="#ff00b0"/><stop offset="0.726" stop-color="#ff00a4"/><stop offset="0.759" stop-color="#ff0099"/><stop offset="0.792" stop-color="#ff008f"/><stop offset="0.825" stop-color="#ff0086"/><stop offset="0.858" stop-color="#ff007f"/><stop offset="0.892" stop-color="#ff0078"/><stop offset="0.925" stop-color="#ff0071"/><stop offset="0.958" stop-color="#ff006c"/><stop offset="0.991" stop-color="#ff0066"/></linearGradient>
<linearGradient id="r56" gradientUnits="userSpaceOnUse" x1="1350" y1="0" x2="2198" y2="0"><stop offset="0.000" stop-color="#006dff"/><stop offset="0.033" stop-color="#0067ff"/><stop offset="0.066" stop-color="#0061ff"/><stop offset="0.099" stop-color="#005aff"/><stop offset="0.132" stop-color="#0053ff"/><stop offset="0.165" stop-color="#004cff"/><stop offset="0.198" stop-color="#0045ff"/><stop offset="0.231" stop-color="#003eff"/><stop offset="0.264" stop-color="#0036ff"/><stop offset="0.297" stop-color="#222eff"/><stop offset="0.330" stop-color="#4026ff"/><stop offset="0.363" stop-color="#5c1dff"/><stop offset="0.396" stop-color="#7814ff"/><stop offset="0.429" stop-color="#9309ff"/><stop offset="0.462" stop-color="#ad00ff"/><stop offset="0.495" stop-color="#c800ff"/><stop offset="0.528" stop-color="#e300ff"/><stop offset="0.561" stop-color="#fd00ff"/><stop offset="0.594" stop-color="#ff00e8"/><stop offset="0.627" stop-color="#ff00d4"/><stop offset="0.660" stop-color="#ff00c3"/><stop offset="0.693" stop-color="#ff00b4"/><stop offset="0.726" stop-color="#ff00a7"/><stop offset="0.759" stop-color="#ff009c"/><stop offset="0.792" stop-color="#ff0092"/><stop offset="0.825" stop-color="#ff008a"/><stop offset="0.858" stop-color="#ff0082"/><stop offset="0.892" stop-color="#ff007b"/><stop offset="0.925" stop-color="#ff0074"/><stop offset="0.958" stop-color="#ff006e"/><stop offset="0.991" stop-color="#ff0069"/></linearGradient>
<linearGradient id="r57" gradientUnits="userSpaceOnUse" x1="1350" y1="0" x2="2198" y2="0"><stop offset="0.000" stop-color="#006aff"/><stop offset="0.033" stop-color="#0064ff"/><stop offset="0.066" stop-color="#005dff"/><stop offset="0.099" stop-color="#0057ff"/><stop offset="0.132" stop-color="#0050ff"/><stop offset="0.165" stop-color="#0049ff"/><stop offset="0.198" stop-color="#0042ff"/><stop offset="0.231" stop-color="#003bff"/><stop offset="0.264" stop-color="#0034ff"/><stop offset="0.297" stop-color="#202cff"/><stop offset="0.330" stop-color="#3e23ff"/><stop offset="0.363" stop-color="#5a1bff"/><stop offset="0.396" stop-color="#7411ff"/><stop offset="0.429" stop-color="#8f07ff"/><stop offset="0.462" stop-color="#a900ff"/><stop offset="0.495" stop-color="#c300ff"/><stop offset="0.528" stop-color="#dd00ff"/><stop offset="0.561" stop-color="#f800ff"/><stop offset="0.594" stop-color="#ff00ed"/><stop offset="0.627" stop-color="#ff00d9"/><stop offset="0.660" stop-color="#ff00c7"/><stop offset="0.693" stop-color="#ff00b8"/><stop offset="0.726" stop-color="#ff00ab"/><stop offset="0.759" stop-color="#ff00a0"/><stop offset="0.792" stop-color="#ff0096"/><stop offset="0.825" stop-color="#ff008d"/><stop offset="0.858" stop-color="#ff0085"/><stop offset="0.892" stop-color="#ff007d"/><stop offset="0.925" stop-color="#ff0077"/><stop offset="0.958" stop-color="#ff0071"/><stop offset="0.991" stop-color="#ff006b"/></linearGradient>
<linearGradient id="r58" gradientUnits="userSpaceOnUse" x1="1350" y1="0" x2="2198" y2="0"><stop offset="0.000" stop-color="#0067ff"/><stop offset="0.033" stop-color="#0061ff"/><stop offset="0.066" stop-color="#005aff"/><stop offset="0.099" stop-color="#0054ff"/><stop offset="0.132" stop-color="#004dff"/><stop offset="0.165" stop-color="#0047ff"/><stop offset="0.198" stop-color="#0040ff"/><stop offset="0.231" stop-color="#0038ff"/><stop offset="0.264" stop-color="#0031ff"/><stop offset="0.297" stop-color="#1f29ff"/><stop offset="0.330" stop-color="#3c21ff"/><stop offset="0.363" stop-color="#5718ff"/><stop offset="0.396" stop-color="#720fff"/><stop offset="0.429" stop-color="#8c04ff"/><stop offset="0.462" stop-color="#a500ff"/><stop offset="0.495" stop-color="#bf00ff"/><stop offset="0.528" stop-color="#d900ff"/><stop offset="0.561" stop-color="#f200ff"/><stop offset="0.594" stop-color="#ff00f3"/><stop offset="0.627" stop-color="#ff00dd"/><stop offset="0.660" stop-color="#ff00cb"/><stop offset="0.693" stop-color="#ff00bc"/><stop offset="0.726" stop-color="#ff00af"/><stop offset="0.759" stop-color="#ff00a3"/><stop offset="0.792" stop-color="#ff0099"/><stop offset="0.825" stop-color="#ff0090"/><stop offset="0.858" stop-color="#ff0088"/><stop offset="0.892" stop-color="#ff0080"/><stop offset="0.925" stop-color="#ff0079"/><stop offset="0.958" stop-color="#ff0073"/><stop offset="0.991" stop-color="#ff006e"/></linearGradient>
<linearGradient id="r59" gradientUnits="userSpaceOnUse" x1="1350" y1="0" x2="2198" y2="0"><stop offset="0.000" stop-color="#0064ff"/><stop offset="0.033" stop-color="#005eff"/><stop offset="0.066" stop-color="#0058ff"/><stop offset="0.099" stop-color="#0051ff"/><stop offset="0.132" stop-color="#004bff"/><stop offset="0.165" stop-color="#0044ff"/><stop offset="0.198" stop-color="#003dff"/><stop offset="0.231" stop-color="#0036ff"/><stop offset="0.264" stop-color="#002eff"/><stop offset="0.297" stop-color="#1d27ff"/><stop offset="0.330" stop-color="#3a1fff"/><stop offset="0.363" stop-color="#5516ff"/><stop offset="0.396" stop-color="#6f0dff"/><stop offset="0.429" stop-color="#8802ff"/><stop offset="0.462" stop-color="#a200ff"/><stop offset="0.495" stop-color="#bb00ff"/><stop offset="0.528" stop-color="#d400ff"/><stop offset="0.561" stop-color="#ed00ff"/><stop offset="0.594" stop-color="#ff00f8"/><stop offset="0.627" stop-color="#ff00e2"/><stop offset="0.660" stop-color="#ff00d0"/><stop offset="0.693" stop-color="#ff00c0"/><stop offset="0.726" stop-color="#ff00b3"/><stop offset="0.759" stop-color="#ff00a7"/><stop offset="0.792" stop-color="#ff009c"/><stop offset="0.825" stop-color="#ff0093"/><stop offset="0.858" stop-color="#ff008a"/><stop offset="0.892" stop-color="#ff0083"/><stop offset="0.925" stop-color="#ff007c"/><stop offset="0.958" stop-color="#ff0076"/><stop offset="0.991" stop-color="#ff0070"/></linearGradient>
<linearGradient id="r60" gradientUnits="userSpaceOnUse" x1="1350" y1="0" x2="2198" y2="0"><stop offset="0.000" stop-color="#0061ff"/><stop offset="0.033" stop-color="#005bff"/><stop offset="0.066" stop-color="#0055ff"/><stop offset="0.099" stop-color="#004fff"/><stop offset="0.132" stop-color="#0048ff"/><stop offset="0.165" stop-color="#0041ff"/><stop offset="0.198" stop-color="#003bff"/><stop offset="0.231" stop-color="#0033ff"/><stop offset="0.264" stop-color="#002cff"/><stop offset="0.297" stop-color="#1c24ff"/><stop offset="0.330" stop-color="#381cff"/><stop offset="0.363" stop-color="#5214ff"/><stop offset="0.396" stop-color="#6c0aff"/><stop offset="0.429" stop-color="#8500ff"/><stop offset="0.462" stop-color="#9e00ff"/><stop offset="0.495" stop-color="#b700ff"/><stop offset="0.528" stop-color="#cf00ff"/><stop offset="0.561" stop-color="#e800ff"/><stop offset="0.594" stop-color="#ff00fd"/><stop offset="0.627" stop-color="#ff00e7"/><stop offset="0.660" stop-color="#ff00d4"/><stop offset="0.693" stop-color="#ff00c4"/><stop offset="0.726" stop-color="#ff00b6"/><stop offset="0.759" stop-color="#ff00aa"/><stop offset="0.792" stop-color="#ff009f"/><stop offset="0.825" stop-color="#ff0096"/><stop offset="0.858" stop-color="#ff008d"/><stop offset="0.892" stop-color="#ff0086"/><stop offset="0.925" stop-color="#ff007f"/><stop offset="0.958" stop-color="#ff0078"/><stop offset="0.991" stop-color="#ff0073"/></linearGradient>
<linearGradient id="r61" gradientUnits="userSpaceOnUse" x1="1350" y1="0" x2="2198" y2="0"><stop offset="0.000" stop-color="#005eff"/><stop offset="0.033" stop-color="#0058ff"/><stop offset="0.066" stop-color="#0052ff"/><stop offset="0.099" stop-color="#004cff"/><stop offset="0.132" stop-color="#0045ff"/><stop offset="0.165" stop-color="#003fff"/><stop offset="0.198" stop-color="#0038ff"/><stop offset="0.231" stop-color="#0031ff"/><stop offset="0.264" stop-color="#002aff"/><stop offset="0.297" stop-color="#1a22ff"/><stop offset="0.330" stop-color="#361aff"/><stop offset="0.363" stop-color="#5011ff"/><stop offset="0.396" stop-color="#6908ff"/><stop offset="0.429" stop-color="#8200ff"/><stop offset="0.462" stop-color="#9b00ff"/><stop offset="0.495" stop-color="#b300ff"/><stop offset="0.528" stop-color="#cb00ff"/><stop offset="0.561" stop-color="#e300ff"/><stop offset="0.594" stop-color="#fb00ff"/><stop offset="0.627" stop-color="#ff00ec"/><stop offset="0.660" stop-color="#ff00d9"/><stop offset="0.693" stop-color="#ff00c8"/><stop offset="0.726" stop-color="#ff00ba"/><stop offset="0.759" stop-color="#ff00ae"/><stop offset="0.792" stop-color="#ff00a3"/><stop offset="0.825" stop-color="#ff0099"/><stop offset="0.858" stop-color="#ff0090"/><stop offset="0.892" stop-color="#ff0089"/><stop offset="0.925" stop-color="#ff0081"/><stop offset="0.958" stop-color="#ff007b"/><stop offset="0.991" stop-color="#ff0075"/></linearGradient>
<linearGradient id="r62" gradientUnits="userSpaceOnUse" x1="1350" y1="0" x2="2198" y2="0"><stop offset="0.000" stop-color="#005bff"/><stop offset="0.033" stop-color="#0055ff"/><stop offset="0.066" stop-color="#004fff"/><stop offset="0.099" stop-color="#0049ff"/><stop offset="0.132" stop-color="#0043ff"/><stop offset="0.165" stop-color="#003cff"/><stop offset="0.198" stop-color="#0036ff"/><stop offset="0.231" stop-color="#002fff"/><stop offset="0.264" stop-color="#0027ff"/><stop offset="0.297" stop-color="#1920ff"/><stop offset="0.330" stop-color="#3418ff"/><stop offset="0.363" stop-color="#4e0fff"/><stop offset="0.396" stop-color="#6706ff"/><stop offset="0.429" stop-color="#7f00ff"/><stop offset="0.462" stop-color="#9700ff"/><stop offset="0.495" stop-color="#af00ff"/><stop offset="0.528" stop-color="#c700ff"/><stop offset="0.561" stop-color="#df00ff"/><stop offset="0.594" stop-color="#f600ff"/><stop offset="0.627" stop-color="#ff00f1"/><stop offset="0.660" stop-color="#ff00dd"/><stop offset="0.693" stop-color="#ff00cc"/><stop offset="0.726" stop-color="#ff00be"/><stop offset="0.759" stop-color="#ff00b1"/><stop offset="0.792" stop-color="#ff00a6"/><stop offset="0.825" stop-color="#ff009c"/><stop offset="0.858" stop-color="#ff0093"/><stop offset="0.892" stop-color="#ff008b"/><stop offset="0.925" stop-color="#ff0084"/><stop offset="0.958" stop-color="#ff007e"/><stop offset="0.991" stop-color="#ff0078"/></linearGradient>
<linearGradient id="r63" gradientUnits="userSpaceOnUse" x1="1350" y1="0" x2="2198" y2="0"><stop offset="0.000" stop-color="#0059ff"/><stop offset="0.033" stop-color="#0053ff"/><stop offset="0.066" stop-color="#004dff"/><stop offset="0.099" stop-color="#0047ff"/><stop offset="0.132" stop-color="#0041ff"/><stop offset="0.165" stop-color="#003aff"/><stop offset="0.198" stop-color="#0033ff"/><stop offset="0.231" stop-color="#002cff"/><stop offset="0.264" stop-color="#0025ff"/><stop offset="0.297" stop-color="#181eff"/><stop offset="0.330" stop-color="#3316ff"/><stop offset="0.363" stop-color="#4c0dff"/><stop offset="0.396" stop-color="#6403ff"/><stop offset="0.429" stop-color="#7c00ff"/><stop offset="0.462" stop-color="#9400ff"/><stop offset="0.495" stop-color="#ab00ff"/><stop offset="0.528" stop-color="#c300ff"/><stop offset="0.561" stop-color="#da00ff"/><stop offset="0.594" stop-color="#f200ff"/><stop offset="0.627" stop-color="#ff00f5"/><stop offset="0.660" stop-color="#ff00e1"/><stop offset="0.693" stop-color="#ff00d0"/><stop offset="0.726" stop-color="#ff00c2"/><stop offset="0.759" stop-color="#ff00b5"/><stop offset="0.792" stop-color="#ff00a9"/><stop offset="0.825" stop-color="#ff009f"/><stop offset="0.858" stop-color="#ff0096"/><stop offset="0.892" stop-color="#ff008e"/><stop offset="0.925" stop-color="#ff0087"/><stop offset="0.958" stop-color="#ff0080"/><stop offset="0.991" stop-color="#ff007a"/></linearGradient>
<linearGradient id="r64" gradientUnits="userSpaceOnUse" x1="1350" y1="0" x2="2198" y2="0"><stop offset="0.000" stop-color="#0056ff"/><stop offset="0.033" stop-color="#0050ff"/><stop offset="0.066" stop-color="#004aff"/><stop offset="0.099" stop-color="#0044ff"/><stop offset="0.132" stop-color="#003eff"/><stop offset="0.165" stop-color="#0038ff"/><stop offset="0.198" stop-color="#0031ff"/><stop offset="0.231" stop-color="#002aff"/><stop offset="0.264" stop-color="#0023ff"/><stop offset="0.297" stop-color="#161cff"/><stop offset="0.330" stop-color="#3114ff"/><stop offset="0.363" stop-color="#4a0bff"/><stop offset="0.396" stop-color="#6201ff"/><stop offset="0.429" stop-color="#7a00ff"/><stop offset="0.462" stop-color="#9100ff"/><stop offset="0.495" stop-color="#a800ff"/><stop offset="0.528" stop-color="#bf00ff"/><stop offset="0.561" stop-color="#d600ff"/><stop offset="0.594" stop-color="#ed00ff"/><stop offset="0.627" stop-color="#ff00fa"/><stop offset="0.660" stop-color="#ff00e6"/><stop offset="0.693" stop-color="#ff00d4"/><stop offset="0.726" stop-color="#ff00c5"/><stop offset="0.759" stop-color="#ff00b8"/><stop offset="0.792" stop-color="#ff00ad"/><stop offset="0.825" stop-color="#ff00a2"/><stop offset="0.858" stop-color="#ff0099"/><stop offset="0.892" stop-color="#ff0091"/><stop offset="0.925" stop-color="#ff0089"/><stop offset="0.958" stop-color="#ff0083"/><stop offset="0.991" stop-color="#ff007c"/></linearGradient>
<linearGradient id="r65" gradientUnits="userSpaceOnUse" x1="1350" y1="0" x2="2198" y2="0"><stop offset="0.000" stop-color="#0054ff"/><stop offset="0.033" stop-color="#004eff"/><stop offset="0.066" stop-color="#0048ff"/><stop offset="0.099" stop-color="#0042ff"/><stop offset="0.132" stop-color="#003cff"/><stop offset="0.165" stop-color="#0036ff"/><stop offset="0.198" stop-color="#002fff"/><stop offset="0.231" stop-color="#0028ff"/><stop offset="0.264" stop-color="#0021ff"/><stop offset="0.297" stop-color="#151aff"/><stop offset="0.330" stop-color="#2f12ff"/><stop offset="0.363" stop-color="#4809ff"/><stop offset="0.396" stop-color="#6000ff"/><stop offset="0.429" stop-color="#7700ff"/><stop offset="0.462" stop-color="#8e00ff"/><stop offset="0.495" stop-color="#a500ff"/><stop offset="0.528" stop-color="#bb00ff"/><stop offset="0.561" stop-color="#d200ff"/><stop offset="0.594" stop-color="#e800ff"/><stop offset="0.627" stop-color="#ff00ff"/><stop offset="0.660" stop-color="#ff00ea"/><stop offset="0.693" stop-color="#ff00d9"/><stop offset="0.726" stop-color="#ff00c9"/><stop offset="0.759" stop-color="#ff00bc"/><stop offset="0.792" stop-color="#ff00b0"/><stop offset="0.825" stop-color="#ff00a6"/><stop offset="0.858" stop-color="#ff009c"/><stop offset="0.892" stop-color="#ff0094"/><stop offset="0.925" stop-color="#ff008c"/><stop offset="0.958" stop-color="#ff0085"/><stop offset="0.991" stop-color="#ff007f"/></linearGradient>
<linearGradient id="r66" gradientUnits="userSpaceOnUse" x1="1350" y1="0" x2="2198" y2="0"><stop offset="0.000" stop-color="#0051ff"/><stop offset="0.033" stop-color="#004cff"/><stop offset="0.066" stop-color="#0046ff"/><stop offset="0.099" stop-color="#0040ff"/><stop offset="0.132" stop-color="#003aff"/><stop offset="0.165" stop-color="#0033ff"/><stop offset="0.198" stop-color="#002dff"/><stop offset="0.231" stop-color="#0026ff"/><stop offset="0.264" stop-color="#001fff"/><stop offset="0.297" stop-color="#1418ff"/><stop offset="0.330" stop-color="#2e10ff"/><stop offset="0.363" stop-color="#4607ff"/><stop offset="0.396" stop-color="#5d00ff"/><stop offset="0.429" stop-color="#7400ff"/><stop offset="0.462" stop-color="#8b00ff"/><stop offset="0.495" stop-color="#a100ff"/><stop offset="0.528" stop-color="#b800ff"/><stop offset="0.561" stop-color="#ce00ff"/><stop offset="0.594" stop-color="#e400ff"/><stop offset="0.627" stop-color="#fa00ff"/><stop offset="0.660" stop-color="#ff00ef"/><stop offset="0.693" stop-color="#ff00dd"/><stop offset="0.726" stop-color="#ff00cd"/><stop offset="0.759" stop-color="#ff00bf"/><stop offset="0.792" stop-color="#ff00b3"/><stop offset="0.825" stop-color="#ff00a9"/><stop offset="0.858" stop-color="#ff009f"/><stop offset="0.892" stop-color="#ff0097"/><stop offset="0.925" stop-color="#ff008f"/><stop offset="0.958" stop-color="#ff0088"/><stop offset="0.991" stop-color="#ff0081"/></linearGradient>
<linearGradient id="r67" gradientUnits="userSpaceOnUse" x1="1350" y1="0" x2="2198" y2="0"><stop offset="0.000" stop-color="#004fff"/><stop offset="0.033" stop-color="#0049ff"/><stop offset="0.066" stop-color="#0043ff"/><stop offset="0.099" stop-color="#003eff"/><stop offset="0.132" stop-color="#0037ff"/><stop offset="0.165" stop-color="#0031ff"/><stop offset="0.198" stop-color="#002bff"/><stop offset="0.231" stop-color="#0024ff"/><stop offset="0.264" stop-color="#001dff"/><stop offset="0.297" stop-color="#1216ff"/><stop offset="0.330" stop-color="#2c0eff"/><stop offset="0.363" stop-color="#4405ff"/><stop offset="0.396" stop-color="#5b00ff"/><stop offset="0.429" stop-color="#7200ff"/><stop offset="0.462" stop-color="#8800ff"/><stop offset="0.495" stop-color="#9e00ff"/><stop offset="0.528" stop-color="#b400ff"/><stop offset="0.561" stop-color="#ca00ff"/><stop offset="0.594" stop-color="#e000ff"/><stop offset="0.627" stop-color="#f500ff"/><stop offset="0.660" stop-color="#ff00f3"/><stop offset="0.693" stop-color="#ff00e1"/><stop offset="0.726" stop-color="#ff00d1"/><stop offset="0.759" stop-color="#ff00c3"/><stop offset="0.792" stop-color="#ff00b7"/><stop offset="0.825" stop-color="#ff00ac"/><stop offset="0.858" stop-color="#ff00a2"/><stop offset="0.892" stop-color="#ff0099"/><stop offset="0.925" stop-color="#ff0092"/><stop offset="0.958" stop-color="#ff008a"/><stop offset="0.991" stop-color="#ff0084"/></linearGradient>
<linearGradient id="r68" gradientUnits="userSpaceOnUse" x1="1350" y1="0" x2="2198" y2="0"><stop offset="0.000" stop-color="#004dff"/><stop offset="0.033" stop-color="#0047ff"/><stop offset="0.066" stop-color="#0041ff"/><stop offset="0.099" stop-color="#003bff"/><stop offset="0.132" stop-color="#0035ff"/><stop offset="0.165" stop-color="#002fff"/><stop offset="0.198" stop-color="#0029ff"/><stop offset="0.231" stop-color="#0022ff"/><stop offset="0.264" stop-color="#001bff"/><stop offset="0.297" stop-color="#1114ff"/><stop offset="0.330" stop-color="#2b0cff"/><stop offset="0.363" stop-color="#4203ff"/><stop offset="0.396" stop-color="#5900ff"/><stop offset="0.429" stop-color="#6f00ff"/><stop offset="0.462" stop-color="#8500ff"/><stop offset="0.495" stop-color="#9b00ff"/><stop offset="0.528" stop-color="#b100ff"/><stop offset="0.561" stop-color="#c600ff"/><stop offset="0.594" stop-color="#db00ff"/><stop offset="0.627" stop-color="#f100ff"/><stop offset="0.660" stop-color="#ff00f8"/><stop offset="0.693" stop-color="#ff00e5"/><stop offset="0.726" stop-color="#ff00d5"/><stop offset="0.759" stop-color="#ff00c7"/><stop offset="0.792" stop-color="#ff00ba"/><stop offset="0.825" stop-color="#ff00af"/><stop offset="0.858" stop-color="#ff00a5"/><stop offset="0.892" stop-color="#ff009c"/><stop offset="0.925" stop-color="#ff0094"/><stop offset="0.958" stop-color="#ff008d"/><stop offset="0.991" stop-color="#ff0086"/></linearGradient>
<linearGradient id="r69" gradientUnits="userSpaceOnUse" x1="1350" y1="0" x2="2198" y2="0"><stop offset="0.000" stop-color="#004aff"/><stop offset="0.033" stop-color="#0045ff"/><stop offset="0.066" stop-color="#003fff"/><stop offset="0.099" stop-color="#0039ff"/><stop offset="0.132" stop-color="#0033ff"/><stop offset="0.165" stop-color="#002dff"/><stop offset="0.198" stop-color="#0027ff"/><stop offset="0.231" stop-color="#0020ff"/><stop offset="0.264" stop-color="#0019ff"/><stop offset="0.297" stop-color="#1012ff"/><stop offset="0.330" stop-color="#290aff"/><stop offset="0.363" stop-color="#4100ff"/><stop offset="0.396" stop-color="#5700ff"/><stop offset="0.429" stop-color="#6d00ff"/><stop offset="0.462" stop-color="#8300ff"/><stop offset="0.495" stop-color="#9800ff"/><stop offset="0.528" stop-color="#ad00ff"/><stop offset="0.561" stop-color="#c200ff"/><stop offset="0.594" stop-color="#d800ff"/><stop offset="0.627" stop-color="#ed00ff"/><stop offset="0.660" stop-color="#ff00fc"/><stop offset="0.693" stop-color="#ff00e9"/><stop offset="0.726" stop-color="#ff00d9"/><stop offset="0.759" stop-color="#ff00ca"/><stop offset="0.792" stop-color="#ff00bd"/><stop offset="0.825" stop-color="#ff00b2"/><stop offset="0.858" stop-color="#ff00a8"/><stop offset="0.892" stop-color="#ff009f"/><stop offset="0.925" stop-color="#ff0097"/><stop offset="0.958" stop-color="#ff008f"/><stop offset="0.991" stop-color="#ff0089"/></linearGradient>
<linearGradient id="r70" gradientUnits="userSpaceOnUse" x1="1350" y1="0" x2="2198" y2="0"><stop offset="0.000" stop-color="#0048ff"/><stop offset="0.033" stop-color="#0043ff"/><stop offset="0.066" stop-color="#003dff"/><stop offset="0.099" stop-color="#0037ff"/><stop offset="0.132" stop-color="#0031ff"/><stop offset="0.165" stop-color="#002bff"/><stop offset="0.198" stop-color="#0025ff"/><stop offset="0.231" stop-color="#001eff"/><stop offset="0.264" stop-color="#0017ff"/><stop offset="0.297" stop-color="#0f10ff"/><stop offset="0.330" stop-color="#2808ff"/><stop offset="0.363" stop-color="#3f00ff"/><stop offset="0.396" stop-color="#5500ff"/><stop offset="0.429" stop-color="#6b00ff"/><stop offset="0.462" stop-color="#8000ff"/><stop offset="0.495" stop-color="#9500ff"/><stop offset="0.528" stop-color="#aa00ff"/><stop offset="0.561" stop-color="#bf00ff"/><stop offset="0.594" stop-color="#d400ff"/><stop offset="0.627" stop-color="#e800ff"/><stop offset="0.660" stop-color="#fd00ff"/><stop offset="0.693" stop-color="#ff00ed"/><stop offset="0.726" stop-color="#ff00dc"/><stop offset="0.759" stop-color="#ff00ce"/><stop offset="0.792" stop-color="#ff00c1"/><stop offset="0.825" stop-color="#ff00b5"/><stop offset="0.858" stop-color="#ff00ab"/><stop offset="0.892" stop-color="#ff00a2"/><stop offset="0.925" stop-color="#ff009a"/><stop offset="0.958" stop-color="#ff0092"/><stop offset="0.991" stop-color="#ff008b"/></linearGradient>
<linearGradient id="r71" gradientUnits="userSpaceOnUse" x1="1350" y1="0" x2="2198" y2="0"><stop offset="0.000" stop-color="#0046ff"/><stop offset="0.033" stop-color="#0041ff"/><stop offset="0.066" stop-color="#003bff"/><stop offset="0.099" stop-color="#0035ff"/><stop offset="0.132" stop-color="#002fff"/><stop offset="0.165" stop-color="#0029ff"/><stop offset="0.198" stop-color="#0023ff"/><stop offset="0.231" stop-color="#001cff"/><stop offset="0.264" stop-color="#0015ff"/><stop offset="0.297" stop-color="#0e0eff"/><stop offset="0.330" stop-color="#2706ff"/><stop offset="0.363" stop-color="#3d00ff"/><stop offset="0.396" stop-color="#5300ff"/><stop offset="0.429" stop-color="#6900ff"/><stop offset="0.462" stop-color="#7e00ff"/><stop offset="0.495" stop-color="#9200ff"/><stop offset="0.528" stop-color="#a700ff"/><stop offset="0.561" stop-color="#bb00ff"/><stop offset="0.594" stop-color="#d000ff"/><stop offset="0.627" stop-color="#e400ff"/><stop offset="0.660" stop-color="#f900ff"/><stop offset="0.693" stop-color="#ff00f1"/><stop offset="0.726" stop-color="#ff00e0"/><stop offset="0.759" stop-color="#ff00d1"/><stop offset="0.792" stop-color="#ff00c4"/><stop offset="0.825" stop-color="#ff00b8"/><stop offset="0.858" stop-color="#ff00ae"/><stop offset="0.892" stop-color="#ff00a5"/><stop offset="0.925" stop-color="#ff009c"/><stop offset="0.958" stop-color="#ff0095"/><stop offset="0.991" stop-color="#ff008e"/></linearGradient>
<linearGradient id="r72" gradientUnits="userSpaceOnUse" x1="1350" y1="0" x2="2198" y2="0"><stop offset="0.000" stop-color="#0044ff"/><stop offset="0.033" stop-color="#003eff"/><stop offset="0.066" stop-color="#0039ff"/><stop offset="0.099" stop-color="#0033ff"/><stop offset="0.132" stop-color="#002dff"/><stop offset="0.165" stop-color="#0027ff"/><stop offset="0.198" stop-color="#0021ff"/><stop offset="0.231" stop-color="#001bff"/><stop offset="0.264" stop-color="#0014ff"/><stop offset="0.297" stop-color="#0d0cff"/><stop offset="0.330" stop-color="#2504ff"/><stop offset="0.363" stop-color="#3c00ff"/><stop offset="0.396" stop-color="#5100ff"/><stop offset="0.429" stop-color="#6600ff"/><stop offset="0.462" stop-color="#7b00ff"/><stop offset="0.495" stop-color="#9000ff"/><stop offset="0.528" stop-color="#a400ff"/><stop offset="0.561" stop-color="#b800ff"/><stop offset="0.594" stop-color="#cc00ff"/><stop offset="0.627" stop-color="#e000ff"/><stop offset="0.660" stop-color="#f500ff"/><stop offset="0.693" stop-color="#ff00f6"/><stop offset="0.726" stop-color="#ff00e4"/><stop offset="0.759" stop-color="#ff00d5"/><stop offset="0.792" stop-color="#ff00c7"/><stop offset="0.825" stop-color="#ff00bc"/><stop offset="0.858" stop-color="#ff00b1"/><stop offset="0.892" stop-color="#ff00a8"/><stop offset="0.925" stop-color="#ff009f"/><stop offset="0.958" stop-color="#ff0097"/><stop offset="0.991" stop-color="#ff0090"/></linearGradient>
<linearGradient id="r73" gradientUnits="userSpaceOnUse" x1="1350" y1="0" x2="2198" y2="0"><stop offset="0.000" stop-color="#0042ff"/><stop offset="0.033" stop-color="#003cff"/><stop offset="0.066" stop-color="#0037ff"/><stop offset="0.099" stop-color="#0031ff"/><stop offset="0.132" stop-color="#002cff"/><stop offset="0.165" stop-color="#0026ff"/><stop offset="0.198" stop-color="#001fff"/><stop offset="0.231" stop-color="#0019ff"/><stop offset="0.264" stop-color="#0012ff"/><stop offset="0.297" stop-color="#0c0aff"/><stop offset="0.330" stop-color="#2402ff"/><stop offset="0.363" stop-color="#3a00ff"/><stop offset="0.396" stop-color="#5000ff"/><stop offset="0.429" stop-color="#6400ff"/><stop offset="0.462" stop-color="#7900ff"/><stop offset="0.495" stop-color="#8d00ff"/><stop offset="0.528" stop-color="#a100ff"/><stop offset="0.561" stop-color="#b500ff"/><stop offset="0.594" stop-color="#c900ff"/><stop offset="0.627" stop-color="#dd00ff"/><stop offset="0.660" stop-color="#f000ff"/><stop offset="0.693" stop-color="#ff00fa"/><stop offset="0.726" stop-color="#ff00e8"/><stop offset="0.759" stop-color="#ff00d8"/><stop offset="0.792" stop-color="#ff00cb"/><stop offset="0.825" stop-color="#ff00bf"/><stop offset="0.858" stop-color="#ff00b4"/><stop offset="0.892" stop-color="#ff00aa"/><stop offset="0.925" stop-color="#ff00a2"/><stop offset="0.958" stop-color="#ff009a"/><stop offset="0.991" stop-color="#ff0092"/></linearGradient>
<linearGradient id="r74" gradientUnits="userSpaceOnUse" x1="1350" y1="0" x2="2198" y2="0"><stop offset="0.000" stop-color="#0040ff"/><stop offset="0.033" stop-color="#003bff"/><stop offset="0.066" stop-color="#0035ff"/><stop offset="0.099" stop-color="#002fff"/><stop offset="0.132" stop-color="#002aff"/><stop offset="0.165" stop-color="#0024ff"/><stop offset="0.198" stop-color="#001eff"/><stop offset="0.231" stop-color="#0017ff"/><stop offset="0.264" stop-color="#0010ff"/><stop offset="0.297" stop-color="#0a09ff"/><stop offset="0.330" stop-color="#2300ff"/><stop offset="0.363" stop-color="#3900ff"/><stop offset="0.396" stop-color="#4e00ff"/><stop offset="0.429" stop-color="#6200ff"/><stop offset="0.462" stop-color="#7600ff"/><stop offset="0.495" stop-color="#8a00ff"/><stop offset="0.528" stop-color="#9e00ff"/><stop offset="0.561" stop-color="#b200ff"/><stop offset="0.594" stop-color="#c500ff"/><stop offset="0.627" stop-color="#d900ff"/><stop offset="0.660" stop-color="#ec00ff"/><stop offset="0.693" stop-color="#ff00fe"/><stop offset="0.726" stop-color="#ff00ec"/><stop offset="0.759" stop-color="#ff00dc"/><stop offset="0.792" stop-color="#ff00ce"/><stop offset="0.825" stop-color="#ff00c2"/><stop offset="0.858" stop-color="#ff00b7"/><stop offset="0.892" stop-color="#ff00ad"/><stop offset="0.925" stop-color="#ff00a4"/><stop offset="0.958" stop-color="#ff009c"/><stop offset="0.991" stop-color="#ff0095"/></linearGradient>
<linearGradient id="r75" gradientUnits="userSpaceOnUse" x1="1350" y1="0" x2="2198" y2="0"><stop offset="0.000" stop-color="#003eff"/><stop offset="0.033" stop-color="#0039ff"/><stop offset="0.066" stop-color="#0033ff"/><stop offset="0.099" stop-color="#002eff"/><stop offset="0.132" stop-color="#0028ff"/><stop offset="0.165" stop-color="#0022ff"/><stop offset="0.198" stop-color="#001cff"/><stop offset="0.231" stop-color="#0015ff"/><stop offset="0.264" stop-color="#000eff"/><stop offset="0.297" stop-color="#0907ff"/><stop offset="0.330" stop-color="#2200ff"/><stop offset="0.363" stop-color="#3700ff"/><stop offset="0.396" stop-color="#4c00ff"/><stop offset="0.429" stop-color="#6000ff"/><stop offset="0.462" stop-color="#7400ff"/><stop offset="0.495" stop-color="#8800ff"/><stop offset="0.528" stop-color="#9b00ff"/><stop offset="0.561" stop-color="#af00ff"/><stop offset="0.594" stop-color="#c200ff"/><stop offset="0.627" stop-color="#d500ff"/><stop offset="0.660" stop-color="#e900ff"/><stop offset="0.693" stop-color="#fc00ff"/><stop offset="0.726" stop-color="#ff00f0"/><stop offset="0.759" stop-color="#ff00e0"/><stop offset="0.792" stop-color="#ff00d2"/><stop offset="0.825" stop-color="#ff00c5"/><stop offset="0.858" stop-color="#ff00ba"/><stop offset="0.892" stop-color="#ff00b0"/><stop offset="0.925" stop-color="#ff00a7"/><stop offset="0.958" stop-color="#ff009f"/><stop offset="0.991" stop-color="#ff0097"/></linearGradient>
<linearGradient id="r76" gradientUnits="userSpaceOnUse" x1="1350" y1="0" x2="2198" y2="0"><stop offset="0.000" stop-color="#003cff"/><stop offset="0.033" stop-color="#0037ff"/><stop offset="0.066" stop-color="#0031ff"/><stop offset="0.099" stop-color="#002cff"/><stop offset="0.132" stop-color="#0026ff"/><stop offset="0.165" stop-color="#0020ff"/><stop offset="0.198" stop-color="#001aff"/><stop offset="0.231" stop-color="#0014ff"/><stop offset="0.264" stop-color="#000dff"/><stop offset="0.297" stop-color="#0805ff"/><stop offset="0.330" stop-color="#2000ff"/><stop offset="0.363" stop-color="#3600ff"/><stop offset="0.396" stop-color="#4a00ff"/><stop offset="0.429" stop-color="#5e00ff"/><stop offset="0.462" stop-color="#7200ff"/><stop offset="0.495" stop-color="#8500ff"/><stop offset="0.528" stop-color="#9900ff"/><stop offset="0.561" stop-color="#ac00ff"/><stop offset="0.594" stop-color="#bf00ff"/><stop offset="0.627" stop-color="#d200ff"/><stop offset="0.660" stop-color="#e500ff"/><stop offset="0.693" stop-color="#f800ff"/><stop offset="0.726" stop-color="#ff00f4"/><stop offset="0.759" stop-color="#ff00e3"/><stop offset="0.792" stop-color="#ff00d5"/><stop offset="0.825" stop-color="#ff00c8"/><stop offset="0.858" stop-color="#ff00bd"/><stop offset="0.892" stop-color="#ff00b3"/><stop offset="0.925" stop-color="#ff00aa"/><stop offset="0.958" stop-color="#ff00a1"/><stop offset="0.991" stop-color="#ff009a"/></linearGradient>
<linearGradient id="r77" gradientUnits="userSpaceOnUse" x1="1350" y1="0" x2="2198" y2="0"><stop offset="0.000" stop-color="#003aff"/><stop offset="0.033" stop-color="#0035ff"/><stop offset="0.066" stop-color="#0030ff"/><stop offset="0.099" stop-color="#002aff"/><stop offset="0.132" stop-color="#0024ff"/><stop offset="0.165" stop-color="#001fff"/><stop offset="0.198" stop-color="#0018ff"/><stop offset="0.231" stop-color="#0012ff"/><stop offset="0.264" stop-color="#000bff"/><stop offset="0.297" stop-color="#0703ff"/><stop offset="0.330" stop-color="#1f00ff"/><stop offset="0.363" stop-color="#3500ff"/><stop offset="0.396" stop-color="#4900ff"/><stop offset="0.429" stop-color="#5d00ff"/><stop offset="0.462" stop-color="#7000ff"/><stop offset="0.495" stop-color="#8300ff"/><stop offset="0.528" stop-color="#9600ff"/><stop offset="0.561" stop-color="#a900ff"/><stop offset="0.594" stop-color="#bc00ff"/><stop offset="0.627" stop-color="#ce00ff"/><stop offset="0.660" stop-color="#e100ff"/><stop offset="0.693" stop-color="#f400ff"/><stop offset="0.726" stop-color="#ff00f8"/><stop offset="0.759" stop-color="#ff00e7"/><stop offset="0.792" stop-color="#ff00d8"/><stop offset="0.825" stop-color="#ff00cc"/><stop offset="0.858" stop-color="#ff00c0"/><stop offset="0.892" stop-color="#ff00b6"/><stop offset="0.925" stop-color="#ff00ac"/><stop offset="0.958" stop-color="#ff00a4"/><stop offset="0.991" stop-color="#ff009c"/></linearGradient>
<linearGradient id="r78" gradientUnits="userSpaceOnUse" x1="1350" y1="0" x2="2198" y2="0"><stop offset="0.000" stop-color="#0038ff"/><stop offset="0.033" stop-color="#0033ff"/><stop offset="0.066" stop-color="#002eff"/><stop offset="0.099" stop-color="#0028ff"/><stop offset="0.132" stop-color="#0023ff"/><stop offset="0.165" stop-color="#001dff"/><stop offset="0.198" stop-color="#0017ff"/><stop offset="0.231" stop-color="#0010ff"/><stop offset="0.264" stop-color="#0009ff"/><stop offset="0.297" stop-color="#0601ff"/><stop offset="0.330" stop-color="#1e00ff"/><stop offset="0.363" stop-color="#3300ff"/><stop offset="0.396" stop-color="#4700ff"/><stop offset="0.429" stop-color="#5b00ff"/><stop offset="0.462" stop-color="#6e00ff"/><stop offset="0.495" stop-color="#8100ff"/><stop offset="0.528" stop-color="#9300ff"/><stop offset="0.561" stop-color="#a600ff"/><stop offset="0.594" stop-color="#b900ff"/><stop offset="0.627" stop-color="#cb00ff"/><stop offset="0.660" stop-color="#de00ff"/><stop offset="0.693" stop-color="#f000ff"/><stop offset="0.726" stop-color="#ff00fb"/><stop offset="0.759" stop-color="#ff00eb"/><stop offset="0.792" stop-color="#ff00dc"/><stop offset="0.825" stop-color="#ff00cf"/><stop offset="0.858" stop-color="#ff00c3"/><stop offset="0.892" stop-color="#ff00b9"/><stop offset="0.925" stop-color="#ff00af"/><stop offset="0.958" stop-color="#ff00a7"/><stop offset="0.991" stop-color="#ff009f"/></linearGradient>
<linearGradient id="r79" gradientUnits="userSpaceOnUse" x1="1350" y1="0" x2="2198" y2="0"><stop offset="0.000" stop-color="#0037ff"/><stop offset="0.033" stop-color="#0031ff"/><stop offset="0.066" stop-color="#002cff"/><stop offset="0.099" stop-color="#0027ff"/><stop offset="0.132" stop-color="#0021ff"/><stop offset="0.165" stop-color="#001bff"/><stop offset="0.198" stop-color="#0015ff"/><stop offset="0.231" stop-color="#000fff"/><stop offset="0.264" stop-color="#0008ff"/><stop offset="0.297" stop-color="#0500ff"/><stop offset="0.330" stop-color="#1d00ff"/><stop offset="0.363" stop-color="#3200ff"/><stop offset="0.396" stop-color="#4600ff"/><stop offset="0.429" stop-color="#5900ff"/><stop offset="0.462" stop-color="#6c00ff"/><stop offset="0.495" stop-color="#7f00ff"/><stop offset="0.528" stop-color="#9100ff"/><stop offset="0.561" stop-color="#a300ff"/><stop offset="0.594" stop-color="#b600ff"/><stop offset="0.627" stop-color="#c800ff"/><stop offset="0.660" stop-color="#da00ff"/><stop offset="0.693" stop-color="#ec00ff"/><stop offset="0.726" stop-color="#ff00ff"/><stop offset="0.759" stop-color="#ff00ee"/><stop offset="0.792" stop-color="#ff00df"/><stop offset="0.825" stop-color="#ff00d2"/><stop offset="0.858" stop-color="#ff00c6"/><stop offset="0.892" stop-color="#ff00bb"/><stop offset="0.925" stop-color="#ff00b2"/><stop offset="0.958" stop-color="#ff00a9"/><stop offset="0.991" stop-color="#ff00a1"/></linearGradient>
<linearGradient id="r80" gradientUnits="userSpaceOnUse" x1="1350" y1="0" x2="2198" y2="0"><stop offset="0.000" stop-color="#0035ff"/><stop offset="0.033" stop-color="#0030ff"/><stop offset="0.066" stop-color="#002bff"/><stop offset="0.099" stop-color="#0025ff"/><stop offset="0.132" stop-color="#0020ff"/><stop offset="0.165" stop-color="#001aff"/><stop offset="0.198" stop-color="#0014ff"/><stop offset="0.231" stop-color="#000dff"/><stop offset="0.264" stop-color="#0006ff"/><stop offset="0.297" stop-color="#0400ff"/><stop offset="0.330" stop-color="#1c00ff"/><stop offset="0.363" stop-color="#3100ff"/><stop offset="0.396" stop-color="#4400ff"/><stop offset="0.429" stop-color="#5700ff"/><stop offset="0.462" stop-color="#6a00ff"/><stop offset="0.495" stop-color="#7c00ff"/><stop offset="0.528" stop-color="#8f00ff"/><stop offset="0.561" stop-color="#a100ff"/><stop offset="0.594" stop-color="#b300ff"/><stop offset="0.627" stop-color="#c500ff"/><stop offset="0.660" stop-color="#d700ff"/><stop offset="0.693" stop-color="#e900ff"/><stop offset="0.726" stop-color="#fb00ff"/><stop offset="0.759" stop-color="#ff00f2"/><stop offset="0.792" stop-color="#ff00e3"/><stop offset="0.825" stop-color="#ff00d5"/><stop offset="0.858" stop-color="#ff00c9"/><stop offset="0.892" stop-color="#ff00be"/><stop offset="0.925" stop-color="#ff00b5"/><stop offset="0.958" stop-color="#ff00ac"/><stop offset="0.991" stop-color="#ff00a4"/></linearGradient>
<linearGradient id="r81" gradientUnits="userSpaceOnUse" x1="1350" y1="0" x2="2198" y2="0"><stop offset="0.000" stop-color="#0033ff"/><stop offset="0.033" stop-color="#002eff"/><stop offset="0.066" stop-color="#0029ff"/><stop offset="0.099" stop-color="#0024ff"/><stop offset="0.132" stop-color="#001eff"/><stop offset="0.165" stop-color="#0018ff"/><stop offset="0.198" stop-color="#0012ff"/><stop offset="0.231" stop-color="#000cff"/><stop offset="0.264" stop-color="#0004ff"/><stop offset="0.297" stop-color="#0300ff"/><stop offset="0.330" stop-color="#1b00ff"/><stop offset="0.363" stop-color="#2f00ff"/><stop offset="0.396" stop-color="#4300ff"/><stop offset="0.429" stop-color="#5600ff"/><stop offset="0.462" stop-color="#6800ff"/><stop offset="0.495" stop-color="#7a00ff"/><stop offset="0.528" stop-color="#8c00ff"/><stop offset="0.561" stop-color="#9e00ff"/><stop offset="0.594" stop-color="#b000ff"/><stop offset="0.627" stop-color="#c200ff"/><stop offset="0.660" stop-color="#d300ff"/><stop offset="0.693" stop-color="#e500ff"/><stop offset="0.726" stop-color="#f700ff"/><stop offset="0.759" stop-color="#ff00f6"/><stop offset="0.792" stop-color="#ff00e6"/><stop offset="0.825" stop-color="#ff00d8"/><stop offset="0.858" stop-color="#ff00cc"/><stop offset="0.892" stop-color="#ff00c1"/><stop offset="0.925" stop-color="#ff00b7"/><stop offset="0.958" stop-color="#ff00ae"/><stop offset="0.991" stop-color="#ff00a6"/></linearGradient>
<linearGradient id="r82" gradientUnits="userSpaceOnUse" x1="1350" y1="0" x2="2198" y2="0"><stop offset="0.000" stop-color="#0032ff"/><stop offset="0.033" stop-color="#002cff"/><stop offset="0.066" stop-color="#0027ff"/><stop offset="0.099" stop-color="#0022ff"/><stop offset="0.132" stop-color="#001cff"/><stop offset="0.165" stop-color="#0017ff"/><stop offset="0.198" stop-color="#0011ff"/><stop offset="0.231" stop-color="#000aff"/><stop offset="0.264" stop-color="#0003ff"/><stop offset="0.297" stop-color="#0200ff"/><stop offset="0.330" stop-color="#1a00ff"/><stop offset="0.363" stop-color="#2e00ff"/><stop offset="0.396" stop-color="#4100ff"/><stop offset="0.429" stop-color="#5400ff"/><stop offset="0.462" stop-color="#6600ff"/><stop offset="0.495" stop-color="#7800ff"/><stop offset="0.528" stop-color="#8a00ff"/><stop offset="0.561" stop-color="#9c00ff"/><stop offset="0.594" stop-color="#ad00ff"/><stop offset="0.627" stop-color="#bf00ff"/><stop offset="0.660" stop-color="#d000ff"/><stop offset="0.693" stop-color="#e200ff"/><stop offset="0.726" stop-color="#f300ff"/><stop offset="0.759" stop-color="#ff00f9"/><stop offset="0.792" stop-color="#ff00ea"/><stop offset="0.825" stop-color="#ff00dc"/><stop offset="0.858" stop-color="#ff00cf"/><stop offset="0.892" stop-color="#ff00c4"/><stop offset="0.925" stop-color="#ff00ba"/><stop offset="0.958" stop-color="#ff00b1"/><stop offset="0.991" stop-color="#ff00a9"/></linearGradient>
<linearGradient id="r83" gradientUnits="userSpaceOnUse" x1="1350" y1="0" x2="2198" y2="0"><stop offset="0.000" stop-color="#0030ff"/><stop offset="0.033" stop-color="#002bff"/><stop offset="0.066" stop-color="#0026ff"/><stop offset="0.099" stop-color="#0020ff"/><stop offset="0.132" stop-color="#001bff"/><stop offset="0.165" stop-color="#0015ff"/><stop offset="0.198" stop-color="#000fff"/><stop offset="0.231" stop-color="#0008ff"/><stop offset="0.264" stop-color="#0001ff"/><stop offset="0.297" stop-color="#0100ff"/><stop offset="0.330" stop-color="#1900ff"/><stop offset="0.363" stop-color="#2d00ff"/><stop offset="0.396" stop-color="#4000ff"/><stop offset="0.429" stop-color="#5200ff"/><stop offset="0.462" stop-color="#6400ff"/><stop offset="0.495" stop-color="#7600ff"/><stop offset="0.528" stop-color="#8800ff"/><stop offset="0.561" stop-color="#9900ff"/><stop offset="0.594" stop-color="#ab00ff"/><stop offset="0.627" stop-color="#bc00ff"/><stop offset="0.660" stop-color="#cd00ff"/><stop offset="0.693" stop-color="#de00ff"/><stop offset="0.726" stop-color="#f000ff"/><stop offset="0.759" stop-color="#ff00fd"/><stop offset="0.792" stop-color="#ff00ed"/><stop offset="0.825" stop-color="#ff00df"/><stop offset="0.858" stop-color="#ff00d2"/><stop offset="0.892" stop-color="#ff00c7"/><stop offset="0.925" stop-color="#ff00bd"/><stop offset="0.958" stop-color="#ff00b4"/><stop offset="0.991" stop-color="#ff00ab"/></linearGradient>
<linearGradient id="r84" gradientUnits="userSpaceOnUse" x1="1350" y1="0" x2="2198" y2="0"><stop offset="0.000" stop-color="#002eff"/><stop offset="0.033" stop-color="#0029ff"/><stop offset="0.066" stop-color="#0024ff"/><stop offset="0.099" stop-color="#001fff"/><stop offset="0.132" stop-color="#0019ff"/><stop offset="0.165" stop-color="#0014ff"/><stop offset="0.198" stop-color="#000eff"/><stop offset="0.231" stop-color="#0007ff"/><stop offset="0.264" stop-color="#0000ff"/><stop offset="0.297" stop-color="#0000ff"/><stop offset="0.330" stop-color="#1800ff"/><stop offset="0.363" stop-color="#2c00ff"/><stop offset="0.396" stop-color="#3f00ff"/><stop offset="0.429" stop-color="#5100ff"/><stop offset="0.462" stop-color="#6300ff"/><stop offset="0.495" stop-color="#7400ff"/><stop offset="0.528" stop-color="#8600ff"/><stop offset="0.561" stop-color="#9700ff"/><stop offset="0.594" stop-color="#a800ff"/><stop offset="0.627" stop-color="#b900ff"/><stop offset="0.660" stop-color="#ca00ff"/><stop offset="0.693" stop-color="#db00ff"/><stop offset="0.726" stop-color="#ec00ff"/><stop offset="0.759" stop-color="#fd00ff"/><stop offset="0.792" stop-color="#ff00f0"/><stop offset="0.825" stop-color="#ff00e2"/><stop offset="0.858" stop-color="#ff00d5"/><stop offset="0.892" stop-color="#ff00ca"/><stop offset="0.925" stop-color="#ff00c0"/><stop offset="0.958" stop-color="#ff00b6"/><stop offset="0.991" stop-color="#ff00ae"/></linearGradient>
<linearGradient id="r85" gradientUnits="userSpaceOnUse" x1="1350" y1="0" x2="2198" y2="0"><stop offset="0.000" stop-color="#002dff"/><stop offset="0.033" stop-color="#0028ff"/><stop offset="0.066" stop-color="#0023ff"/><stop offset="0.099" stop-color="#001dff"/><stop offset="0.132" stop-color="#0018ff"/><stop offset="0.165" stop-color="#0012ff"/><stop offset="0.198" stop-color="#000cff"/><stop offset="0.231" stop-color="#0005ff"/><stop offset="0.264" stop-color="#0000ff"/><stop offset="0.297" stop-color="#0000ff"/><stop offset="0.330" stop-color="#1700ff"/><stop offset="0.363" stop-color="#2b00ff"/><stop offset="0.396" stop-color="#3d00ff"/><stop offset="0.429" stop-color="#4f00ff"/><stop offset="0.462" stop-color="#6100ff"/><stop offset="0.495" stop-color="#7200ff"/><stop offset="0.528" stop-color="#8300ff"/><stop offset="0.561" stop-color="#9400ff"/><stop offset="0.594" stop-color="#a500ff"/><stop offset="0.627" stop-color="#b600ff"/><stop offset="0.660" stop-color="#c700ff"/><stop offset="0.693" stop-color="#d800ff"/><stop offset="0.726" stop-color="#e900ff"/><stop offset="0.759" stop-color="#fa00ff"/><stop offset="0.792" stop-color="#ff00f4"/><stop offset="0.825" stop-color="#ff00e5"/><stop offset="0.858" stop-color="#ff00d8"/><stop offset="0.892" stop-color="#ff00cd"/><stop offset="0.925" stop-color="#ff00c2"/><stop offset="0.958" stop-color="#ff00b9"/><stop offset="0.991" stop-color="#ff00b0"/></linearGradient>
<linearGradient id="r86" gradientUnits="userSpaceOnUse" x1="1350" y1="0" x2="2198" y2="0"><stop offset="0.000" stop-color="#002bff"/><stop offset="0.033" stop-color="#0026ff"/><stop offset="0.066" stop-color="#0021ff"/><stop offset="0.099" stop-color="#001cff"/><stop offset="0.132" stop-color="#0016ff"/><stop offset="0.165" stop-color="#0011ff"/><stop offset="0.198" stop-color="#000bff"/><stop offset="0.231" stop-color="#0004ff"/><stop offset="0.264" stop-color="#0000ff"/><stop offset="0.297" stop-color="#0000ff"/><stop offset="0.330" stop-color="#1600ff"/><stop offset="0.363" stop-color="#2900ff"/><stop offset="0.396" stop-color="#3c00ff"/><stop offset="0.429" stop-color="#4e00ff"/><stop offset="0.462" stop-color="#5f00ff"/><stop offset="0.495" stop-color="#7000ff"/><stop offset="0.528" stop-color="#8100ff"/><stop offset="0.561" stop-color="#9200ff"/><stop offset="0.594" stop-color="#a300ff"/><stop offset="0.627" stop-color="#b400ff"/><stop offset="0.660" stop-color="#c400ff"/><stop offset="0.693" stop-color="#d500ff"/><stop offset="0.726" stop-color="#e600ff"/><stop offset="0.759" stop-color="#f600ff"/><stop offset="0.792" stop-color="#ff00f7"/><stop offset="0.825" stop-color="#ff00e9"/><stop offset="0.858" stop-color="#ff00db"/><stop offset="0.892" stop-color="#ff00d0"/><stop offset="0.925" stop-color="#ff00c5"/><stop offset="0.958" stop-color="#ff00bb"/><stop offset="0.991" stop-color="#ff00b3"/></linearGradient>
<linearGradient id="r87" gradientUnits="userSpaceOnUse" x1="1350" y1="0" x2="2198" y2="0"><stop offset="0.000" stop-color="#002aff"/><stop offset="0.033" stop-color="#0025ff"/><stop offset="0.066" stop-color="#0020ff"/><stop offset="0.099" stop-color="#001aff"/><stop offset="0.132" stop-color="#0015ff"/><stop offset="0.165" stop-color="#000fff"/><stop offset="0.198" stop-color="#0009ff"/><stop offset="0.231" stop-color="#0002ff"/><stop offset="0.264" stop-color="#0000ff"/><stop offset="0.297" stop-color="#0000ff"/><stop offset="0.330" stop-color="#1500ff"/><stop offset="0.363" stop-color="#2800ff"/><stop offset="0.396" stop-color="#3b00ff"/><stop offset="0.429" stop-color="#4c00ff"/><stop offset="0.462" stop-color="#5e00ff"/><stop offset="0.495" stop-color="#6f00ff"/><stop offset="0.528" stop-color="#7f00ff"/><stop offset="0.561" stop-color="#9000ff"/><stop offset="0.594" stop-color="#a100ff"/><stop offset="0.627" stop-color="#b100ff"/><stop offset="0.660" stop-color="#c100ff"/><stop offset="0.693" stop-color="#d200ff"/><stop offset="0.726" stop-color="#e200ff"/><stop offset="0.759" stop-color="#f300ff"/><stop offset="0.792" stop-color="#ff00fb"/><stop offset="0.825" stop-color="#ff00ec"/><stop offset="0.858" stop-color="#ff00de"/><stop offset="0.892" stop-color="#ff00d3"/><stop offset="0.925" stop-color="#ff00c8"/><stop offset="0.958" stop-color="#ff00be"/><stop offset="0.991" stop-color="#ff00b5"/></linearGradient>
<linearGradient id="r88" gradientUnits="userSpaceOnUse" x1="1350" y1="0" x2="2198" y2="0"><stop offset="0.000" stop-color="#0028ff"/><stop offset="0.033" stop-color="#0023ff"/><stop offset="0.066" stop-color="#001eff"/><stop offset="0.099" stop-color="#0019ff"/><stop offset="0.132" stop-color="#0014ff"/><stop offset="0.165" stop-color="#000eff"/><stop offset="0.198" stop-color="#0008ff"/><stop offset="0.231" stop-color="#0000ff"/><stop offset="0.264" stop-color="#0000ff"/><stop offset="0.297" stop-color="#0000ff"/><stop offset="0.330" stop-color="#1400ff"/><stop offset="0.363" stop-color="#2700ff"/><stop offset="0.396" stop-color="#3900ff"/><stop offset="0.429" stop-color="#4b00ff"/><stop offset="0.462" stop-color="#5c00ff"/><stop offset="0.495" stop-color="#6d00ff"/><stop offset="0.528" stop-color="#7d00ff"/><stop offset="0.561" stop-color="#8e00ff"/><stop offset="0.594" stop-color="#9e00ff"/><stop offset="0.627" stop-color="#ae00ff"/><stop offset="0.660" stop-color="#bf00ff"/><stop offset="0.693" stop-color="#cf00ff"/><stop offset="0.726" stop-color="#df00ff"/><stop offset="0.759" stop-color="#ef00ff"/><stop offset="0.792" stop-color="#ff00fe"/><stop offset="0.825" stop-color="#ff00ef"/><stop offset="0.858" stop-color="#ff00e2"/><stop offset="0.892" stop-color="#ff00d5"/><stop offset="0.925" stop-color="#ff00ca"/><stop offset="0.958" stop-color="#ff00c1"/><stop offset="0.991" stop-color="#ff00b8"/></linearGradient>
<linearGradient id="r89" gradientUnits="userSpaceOnUse" x1="1350" y1="0" x2="2198" y2="0"><stop offset="0.000" stop-color="#0027ff"/><stop offset="0.033" stop-color="#0022ff"/><stop offset="0.066" stop-color="#001dff"/><stop offset="0.099" stop-color="#0018ff"/><stop offset="0.132" stop-color="#0012ff"/><stop offset="0.165" stop-color="#000cff"/><stop offset="0.198" stop-color="#0006ff"/><stop offset="0.231" stop-color="#0000ff"/><stop offset="0.264" stop-color="#0000ff"/><stop offset="0.297" stop-color="#0000ff"/><stop offset="0.330" stop-color="#1300ff"/><stop offset="0.363" stop-color="#2600ff"/><stop offset="0.396" stop-color="#3800ff"/><stop offset="0.429" stop-color="#4900ff"/><stop offset="0.462" stop-color="#5a00ff"/><stop offset="0.495" stop-color="#6b00ff"/><stop offset="0.528" stop-color="#7b00ff"/><stop offset="0.561" stop-color="#8c00ff"/><stop offset="0.594" stop-color="#9c00ff"/><stop offset="0.627" stop-color="#ac00ff"/><stop offset="0.660" stop-color="#bc00ff"/><stop offset="0.693" stop-color="#cc00ff"/><stop offset="0.726" stop-color="#dc00ff"/><stop offset="0.759" stop-color="#ec00ff"/><stop offset="0.792" stop-color="#fc00ff"/><stop offset="0.825" stop-color="#ff00f2"/><stop offset="0.858" stop-color="#ff00e5"/><stop offset="0.892" stop-color="#ff00d8"/><stop offset="0.925" stop-color="#ff00cd"/><stop offset="0.958" stop-color="#ff00c3"/><stop offset="0.991" stop-color="#ff00ba"/></linearGradient>
<linearGradient id="r90" gradientUnits="userSpaceOnUse" x1="1350" y1="0" x2="2198" y2="0"><stop offset="0.000" stop-color="#0025ff"/><stop offset="0.033" stop-color="#0021ff"/><stop offset="0.066" stop-color="#001cff"/><stop offset="0.099" stop-color="#0016ff"/><stop offset="0.132" stop-color="#0011ff"/><stop offset="0.165" stop-color="#000bff"/><stop offset="0.198" stop-color="#0005ff"/><stop offset="0.231" stop-color="#0000ff"/><stop offset="0.264" stop-color="#0000ff"/><stop offset="0.297" stop-color="#0000ff"/><stop offset="0.330" stop-color="#1200ff"/><stop offset="0.363" stop-color="#2500ff"/><stop offset="0.396" stop-color="#3700ff"/><stop offset="0.429" stop-color="#4800ff"/><stop offset="0.462" stop-color="#5900ff"/><stop offset="0.495" stop-color="#6900ff"/><stop offset="0.528" stop-color="#7a00ff"/><stop offset="0.561" stop-color="#8a00ff"/><stop offset="0.594" stop-color="#9a00ff"/><stop offset="0.627" stop-color="#aa00ff"/><stop offset="0.660" stop-color="#b900ff"/><stop offset="0.693" stop-color="#c900ff"/><stop offset="0.726" stop-color="#d900ff"/><stop offset="0.759" stop-color="#e900ff"/><stop offset="0.792" stop-color="#f900ff"/><stop offset="0.825" stop-color="#ff00f6"/><stop offset="0.858" stop-color="#ff00e8"/><stop offset="0.892" stop-color="#ff00db"/><stop offset="0.925" stop-color="#ff00d0"/><stop offset="0.958" stop-color="#ff00c6"/><stop offset="0.991" stop-color="#ff00bd"/></linearGradient>
<linearGradient id="r91" gradientUnits="userSpaceOnUse" x1="1350" y1="0" x2="2198" y2="0"><stop offset="0.000" stop-color="#0024ff"/><stop offset="0.033" stop-color="#001fff"/><stop offset="0.066" stop-color="#001aff"/><stop offset="0.099" stop-color="#0015ff"/><stop offset="0.132" stop-color="#0010ff"/><stop offset="0.165" stop-color="#000aff"/><stop offset="0.198" stop-color="#0003ff"/><stop offset="0.231" stop-color="#0000ff"/><stop offset="0.264" stop-color="#0000ff"/><stop offset="0.297" stop-color="#0000ff"/><stop offset="0.330" stop-color="#1100ff"/><stop offset="0.363" stop-color="#2400ff"/><stop offset="0.396" stop-color="#3600ff"/><stop offset="0.429" stop-color="#4700ff"/><stop offset="0.462" stop-color="#5700ff"/><stop offset="0.495" stop-color="#6800ff"/><stop offset="0.528" stop-color="#7800ff"/><stop offset="0.561" stop-color="#8800ff"/><stop offset="0.594" stop-color="#9700ff"/><stop offset="0.627" stop-color="#a700ff"/><stop offset="0.660" stop-color="#b700ff"/><stop offset="0.693" stop-color="#c700ff"/><stop offset="0.726" stop-color="#d600ff"/><stop offset="0.759" stop-color="#e600ff"/><stop offset="0.792" stop-color="#f500ff"/><stop offset="0.825" stop-color="#ff00f9"/><stop offset="0.858" stop-color="#ff00eb"/><stop offset="0.892" stop-color="#ff00de"/><stop offset="0.925" stop-color="#ff00d3"/><stop offset="0.958" stop-color="#ff00c8"/><stop offset="0.991" stop-color="#ff00bf"/></linearGradient>
<linearGradient id="r92" gradientUnits="userSpaceOnUse" x1="1350" y1="0" x2="2198" y2="0"><stop offset="0.000" stop-color="#0023ff"/><stop offset="0.033" stop-color="#001eff"/><stop offset="0.066" stop-color="#0019ff"/><stop offset="0.099" stop-color="#0014ff"/><stop offset="0.132" stop-color="#000eff"/><stop offset="0.165" stop-color="#0008ff"/><stop offset="0.198" stop-color="#0002ff"/><stop offset="0.231" stop-color="#0000ff"/><stop offset="0.264" stop-color="#0000ff"/><stop offset="0.297" stop-color="#0000ff"/><stop offset="0.330" stop-color="#1000ff"/><stop offset="0.363" stop-color="#2300ff"/><stop offset="0.396" stop-color="#3500ff"/><stop offset="0.429" stop-color="#4500ff"/><stop offset="0.462" stop-color="#5600ff"/><stop offset="0.495" stop-color="#6600ff"/><stop offset="0.528" stop-color="#7600ff"/><stop offset="0.561" stop-color="#8600ff"/><stop offset="0.594" stop-color="#9500ff"/><stop offset="0.627" stop-color="#a500ff"/><stop offset="0.660" stop-color="#b400ff"/><stop offset="0.693" stop-color="#c400ff"/><stop offset="0.726" stop-color="#d300ff"/><stop offset="0.759" stop-color="#e300ff"/><stop offset="0.792" stop-color="#f200ff"/><stop offset="0.825" stop-color="#ff00fc"/><stop offset="0.858" stop-color="#ff00ee"/><stop offset="0.892" stop-color="#ff00e1"/><stop offset="0.925" stop-color="#ff00d6"/><stop offset="0.958" stop-color="#ff00cb"/><stop offset="0.991" stop-color="#ff00c2"/></linearGradient>
<linearGradient id="r93" gradientUnits="userSpaceOnUse" x1="1350" y1="0" x2="2198" y2="0"><stop offset="0.000" stop-color="#0021ff"/><stop offset="0.033" stop-color="#001cff"/><stop offset="0.066" stop-color="#0017ff"/><stop offset="0.099" stop-color="#0012ff"/><stop offset="0.132" stop-color="#000dff"/><stop offset="0.165" stop-color="#0007ff"/><stop offset="0.198" stop-color="#0000ff"/><stop offset="0.231" stop-color="#0000ff"/><stop offset="0.264" stop-color="#0000ff"/><stop offset="0.297" stop-color="#0000ff"/><stop offset="0.330" stop-color="#0f00ff"/><stop offset="0.363" stop-color="#2200ff"/><stop offset="0.396" stop-color="#3400ff"/><stop offset="0.429" stop-color="#4400ff"/><stop offset="0.462" stop-color="#5400ff"/><stop offset="0.495" stop-color="#6400ff"/><stop offset="0.528" stop-color="#7400ff"/><stop offset="0.561" stop-color="#8400ff"/><stop offset="0.594" stop-color="#9300ff"/><stop offset="0.627" stop-color="#a300ff"/><stop offset="0.660" stop-color="#b200ff"/><stop offset="0.693" stop-color="#c100ff"/><stop offset="0.726" stop-color="#d100ff"/><stop offset="0.759" stop-color="#e000ff"/><stop offset="0.792" stop-color="#ef00ff"/><stop offset="0.825" stop-color="#fe00ff"/><stop offset="0.858" stop-color="#ff00f1"/><stop offset="0.892" stop-color="#ff00e4"/><stop offset="0.925" stop-color="#ff00d8"/><stop offset="0.958" stop-color="#ff00ce"/><stop offset="0.991" stop-color="#ff00c4"/></linearGradient>
<linearGradient id="r94" gradientUnits="userSpaceOnUse" x1="1350" y1="0" x2="2198" y2="0"><stop offset="0.000" stop-color="#0020ff"/><stop offset="0.033" stop-color="#001bff"/><stop offset="0.066" stop-color="#0016ff"/><stop offset="0.099" stop-color="#0011ff"/><stop offset="0.132" stop-color="#000cff"/><stop offset="0.165" stop-color="#0006ff"/><stop offset="0.198" stop-color="#0000ff"/><stop offset="0.231" stop-color="#0000ff"/><stop offset="0.264" stop-color="#0000ff"/><stop offset="0.297" stop-color="#0000ff"/><stop offset="0.330" stop-color="#0f00ff"/><stop offset="0.363" stop-color="#2100ff"/><stop offset="0.396" stop-color="#3200ff"/><stop offset="0.429" stop-color="#4300ff"/><stop offset="0.462" stop-color="#5300ff"/><stop offset="0.495" stop-color="#6300ff"/><stop offset="0.528" stop-color="#7200ff"/><stop offset="0.561" stop-color="#8200ff"/><stop offset="0.594" stop-color="#9100ff"/><stop offset="0.627" stop-color="#a000ff"/><stop offset="0.660" stop-color="#b000ff"/><stop offset="0.693" stop-color="#bf00ff"/><stop offset="0.726" stop-color="#ce00ff"/><stop offset="0.759" stop-color="#dd00ff"/><stop offset="0.792" stop-color="#ec00ff"/><stop offset="0.825" stop-color="#fb00ff"/><stop offset="0.858" stop-color="#ff00f4"/><stop offset="0.892" stop-color="#ff00e7"/><stop offset="0.925" stop-color="#ff00db"/><stop offset="0.958" stop-color="#ff00d0"/><stop offset="0.991" stop-color="#ff00c7"/></linearGradient>
<linearGradient id="r95" gradientUnits="userSpaceOnUse" x1="1350" y1="0" x2="2198" y2="0"><stop offset="0.000" stop-color="#001fff"/><stop offset="0.033" stop-color="#001aff"/><stop offset="0.066" stop-color="#0015ff"/><stop offset="0.099" stop-color="#0010ff"/><stop offset="0.132" stop-color="#000aff"/><stop offset="0.165" stop-color="#0004ff"/><stop offset="0.198" stop-color="#0000ff"/><stop offset="0.231" stop-color="#0000ff"/><stop offset="0.264" stop-color="#0000ff"/><stop offset="0.297" stop-color="#0000ff"/><stop offset="0.330" stop-color="#0e00ff"/><stop offset="0.363" stop-color="#2000ff"/><stop offset="0.396" stop-color="#3100ff"/><stop offset="0.429" stop-color="#4200ff"/><stop offset="0.462" stop-color="#5200ff"/><stop offset="0.495" stop-color="#6100ff"/><stop offset="0.528" stop-color="#7100ff"/><stop offset="0.561" stop-color="#8000ff"/><stop offset="0.594" stop-color="#8f00ff"/><stop offset="0.627" stop-color="#9e00ff"/><stop offset="0.660" stop-color="#ad00ff"/><stop offset="0.693" stop-color="#bc00ff"/><stop offset="0.726" stop-color="#cb00ff"/><stop offset="0.759" stop-color="#da00ff"/><stop offset="0.792" stop-color="#e900ff"/><stop offset="0.825" stop-color="#f800ff"/><stop offset="0.858" stop-color="#ff00f7"/><stop offset="0.892" stop-color="#ff00ea"/><stop offset="0.925" stop-color="#ff00de"/><stop offset="0.958" stop-color="#ff00d3"/><stop offset="0.991" stop-color="#ff00c9"/></linearGradient>
<linearGradient id="r96" gradientUnits="userSpaceOnUse" x1="1350" y1="0" x2="2198" y2="0"><stop offset="0.000" stop-color="#001dff"/><stop offset="0.033" stop-color="#0019ff"/><stop offset="0.066" stop-color="#0014ff"/><stop offset="0.099" stop-color="#000eff"/><stop offset="0.132" stop-color="#0009ff"/><stop offset="0.165" stop-color="#0003ff"/><stop offset="0.198" stop-color="#0000ff"/><stop offset="0.231" stop-color="#0000ff"/><stop offset="0.264" stop-color="#0000ff"/><stop offset="0.297" stop-color="#0000ff"/><stop offset="0.330" stop-color="#0d00ff"/><stop offset="0.363" stop-color="#1f00ff"/><stop offset="0.396" stop-color="#3000ff"/><stop offset="0.429" stop-color="#4100ff"/><stop offset="0.462" stop-color="#5000ff"/><stop offset="0.495" stop-color="#6000ff"/><stop offset="0.528" stop-color="#6f00ff"/><stop offset="0.561" stop-color="#7e00ff"/><stop offset="0.594" stop-color="#8d00ff"/><stop offset="0.627" stop-color="#9c00ff"/><stop offset="0.660" stop-color="#ab00ff"/><stop offset="0.693" stop-color="#ba00ff"/><stop offset="0.726" stop-color="#c900ff"/><stop offset="0.759" stop-color="#d700ff"/><stop offset="0.792" stop-color="#e600ff"/><stop offset="0.825" stop-color="#f500ff"/><stop offset="0.858" stop-color="#ff00fa"/><stop offset="0.892" stop-color="#ff00ed"/><stop offset="0.925" stop-color="#ff00e1"/><stop offset="0.958" stop-color="#ff00d6"/><stop offset="0.991" stop-color="#ff00cc"/></linearGradient>
<linearGradient id="r97" gradientUnits="userSpaceOnUse" x1="1350" y1="0" x2="2198" y2="0"><stop offset="0.000" stop-color="#001cff"/><stop offset="0.033" stop-color="#0017ff"/><stop offset="0.066" stop-color="#0012ff"/><stop offset="0.099" stop-color="#000dff"/><stop offset="0.132" stop-color="#0008ff"/><stop offset="0.165" stop-color="#0001ff"/><stop offset="0.198" stop-color="#0000ff"/><stop offset="0.231" stop-color="#0000ff"/><stop offset="0.264" stop-color="#0000ff"/><stop offset="0.297" stop-color="#0000ff"/><stop offset="0.330" stop-color="#0c00ff"/><stop offset="0.363" stop-color="#1e00ff"/><stop offset="0.396" stop-color="#2f00ff"/><stop offset="0.429" stop-color="#3f00ff"/><stop offset="0.462" stop-color="#4f00ff"/><stop offset="0.495" stop-color="#5e00ff"/><stop offset="0.528" stop-color="#6d00ff"/><stop offset="0.561" stop-color="#7c00ff"/><stop offset="0.594" stop-color="#8b00ff"/><stop offset="0.627" stop-color="#9a00ff"/><stop offset="0.660" stop-color="#a900ff"/><stop offset="0.693" stop-color="#b700ff"/><stop offset="0.726" stop-color="#c600ff"/><stop offset="0.759" stop-color="#d500ff"/><stop offset="0.792" stop-color="#e300ff"/><stop offset="0.825" stop-color="#f200ff"/><stop offset="0.858" stop-color="#ff00fe"/><stop offset="0.892" stop-color="#ff00f0"/><stop offset="0.925" stop-color="#ff00e3"/><stop offset="0.958" stop-color="#ff00d8"/><stop offset="0.991" stop-color="#ff00ce"/></linearGradient>
<linearGradient id="r98" gradientUnits="userSpaceOnUse" x1="1350" y1="0" x2="2198" y2="0"><stop offset="0.000" stop-color="#001bff"/><stop offset="0.033" stop-color="#0016ff"/><stop offset="0.066" stop-color="#0011ff"/><stop offset="0.099" stop-color="#000cff"/><stop offset="0.132" stop-color="#0006ff"/><stop offset="0.165" stop-color="#0000ff"/><stop offset="0.198" stop-color="#0000ff"/><stop offset="0.231" stop-color="#0000ff"/><stop offset="0.264" stop-color="#0000ff"/><stop offset="0.297" stop-color="#0000ff"/><stop offset="0.330" stop-color="#0b00ff"/><stop offset="0.363" stop-color="#1e00ff"/><stop offset="0.396" stop-color="#2e00ff"/><stop offset="0.429" stop-color="#3e00ff"/><stop offset="0.462" stop-color="#4e00ff"/><stop offset="0.495" stop-color="#5d00ff"/><stop offset="0.528" stop-color="#6c00ff"/><stop offset="0.561" stop-color="#7b00ff"/><stop offset="0.594" stop-color="#8900ff"/><stop offset="0.627" stop-color="#9800ff"/><stop offset="0.660" stop-color="#a600ff"/><stop offset="0.693" stop-color="#b500ff"/><stop offset="0.726" stop-color="#c300ff"/><stop offset="0.759" stop-color="#d200ff"/><stop offset="0.792" stop-color="#e000ff"/><stop offset="0.825" stop-color="#ef00ff"/><stop offset="0.858" stop-color="#fd00ff"/><stop offset="0.892" stop-color="#ff00f3"/><stop offset="0.925" stop-color="#ff00e6"/><stop offset="0.958" stop-color="#ff00db"/><stop offset="0.991" stop-color="#ff00d1"/></linearGradient>
<linearGradient id="r99" gradientUnits="userSpaceOnUse" x1="1350" y1="0" x2="2198" y2="0"><stop offset="0.000" stop-color="#001aff"/><stop offset="0.033" stop-color="#0015ff"/><stop offset="0.066" stop-color="#0010ff"/><stop offset="0.099" stop-color="#000bff"/><stop offset="0.132" stop-color="#0005ff"/><stop offset="0.165" stop-color="#0000ff"/><stop offset="0.198" stop-color="#0000ff"/><stop offset="0.231" stop-color="#0000ff"/><stop offset="0.264" stop-color="#0000ff"/><stop offset="0.297" stop-color="#0000ff"/><stop offset="0.330" stop-color="#0b00ff"/><stop offset="0.363" stop-color="#1d00ff"/><stop offset="0.396" stop-color="#2d00ff"/><stop offset="0.429" stop-color="#3d00ff"/><stop offset="0.462" stop-color="#4c00ff"/><stop offset="0.495" stop-color="#5b00ff"/><stop offset="0.528" stop-color="#6a00ff"/><stop offset="0.561" stop-color="#7900ff"/><stop offset="0.594" stop-color="#8700ff"/><stop offset="0.627" stop-color="#9600ff"/><stop offset="0.660" stop-color="#a400ff"/><stop offset="0.693" stop-color="#b300ff"/><stop offset="0.726" stop-color="#c100ff"/><stop offset="0.759" stop-color="#cf00ff"/><stop offset="0.792" stop-color="#de00ff"/><stop offset="0.825" stop-color="#ec00ff"/><stop offset="0.858" stop-color="#fa00ff"/><stop offset="0.892" stop-color="#ff00f6"/><stop offset="0.925" stop-color="#ff00e9"/><stop offset="0.958" stop-color="#ff00de"/><stop offset="0.991" stop-color="#ff00d3"/></linearGradient>
<linearGradient id="r100" gradientUnits="userSpaceOnUse" x1="1350" y1="0" x2="2198" y2="0"><stop offset="0.000" stop-color="#0018ff"/><stop offset="0.033" stop-color="#0014ff"/><stop offset="0.066" stop-color="#000fff"/><stop offset="0.099" stop-color="#0009ff"/><stop offset="0.132" stop-color="#0004ff"/><stop offset="0.165" stop-color="#0000ff"/><stop offset="0.198" stop-color="#0000ff"/><stop offset="0.231" stop-color="#0000ff"/><stop offset="0.264" stop-color="#0000ff"/><stop offset="0.297" stop-color="#0000ff"/><stop offset="0.330" stop-color="#0a00ff"/><stop offset="0.363" stop-color="#1c00ff"/><stop offset="0.396" stop-color="#2c00ff"/><stop offset="0.429" stop-color="#3c00ff"/><stop offset="0.462" stop-color="#4b00ff"/><stop offset="0.495" stop-color="#5a00ff"/><stop offset="0.528" stop-color="#6900ff"/><stop offset="0.561" stop-color="#7700ff"/><stop offset="0.594" stop-color="#8600ff"/><stop offset="0.627" stop-color="#9400ff"/><stop offset="0.660" stop-color="#a200ff"/><stop offset="0.693" stop-color="#b000ff"/><stop offset="0.726" stop-color="#bf00ff"/><stop offset="0.759" stop-color="#cd00ff"/><stop offset="0.792" stop-color="#db00ff"/><stop offset="0.825" stop-color="#e900ff"/><stop offset="0.858" stop-color="#f700ff"/><stop offset="0.892" stop-color="#ff00f9"/><stop offset="0.925" stop-color="#ff00ec"/><stop offset="0.958" stop-color="#ff00e0"/><stop offset="0.991" stop-color="#ff00d6"/></linearGradient>
<linearGradient id="r101" gradientUnits="userSpaceOnUse" x1="1350" y1="0" x2="2198" y2="0"><stop offset="0.000" stop-color="#0017ff"/><stop offset="0.033" stop-color="#0012ff"/><stop offset="0.066" stop-color="#000dff"/><stop offset="0.099" stop-color="#0008ff"/><stop offset="0.132" stop-color="#0002ff"/><stop offset="0.165" stop-color="#0000ff"/><stop offset="0.198" stop-color="#0000ff"/><stop offset="0.231" stop-color="#0000ff"/><stop offset="0.264" stop-color="#0000ff"/><stop offset="0.297" stop-color="#0000ff"/><stop offset="0.330" stop-color="#0900ff"/><stop offset="0.363" stop-color="#1b00ff"/><stop offset="0.396" stop-color="#2b00ff"/><stop offset="0.429" stop-color="#3b00ff"/><stop offset="0.462" stop-color="#4a00ff"/><stop offset="0.495" stop-color="#5900ff"/><stop offset="0.528" stop-color="#6700ff"/><stop offset="0.561" stop-color="#7600ff"/><stop offset="0.594" stop-color="#8400ff"/><stop offset="0.627" stop-color="#9200ff"/><stop offset="0.660" stop-color="#a000ff"/><stop offset="0.693" stop-color="#ae00ff"/><stop offset="0.726" stop-color="#bc00ff"/><stop offset="0.759" stop-color="#ca00ff"/><stop offset="0.792" stop-color="#d800ff"/><stop offset="0.825" stop-color="#e600ff"/><stop offset="0.858" stop-color="#f400ff"/><stop offset="0.892" stop-color="#ff00fc"/><stop offset="0.925" stop-color="#ff00ef"/><stop offset="0.958" stop-color="#ff00e3"/><stop offset="0.991" stop-color="#ff00d8"/></linearGradient>
<linearGradient id="r102" gradientUnits="userSpaceOnUse" x1="1350" y1="0" x2="2198" y2="0"><stop offset="0.000" stop-color="#0016ff"/><stop offset="0.033" stop-color="#0011ff"/><stop offset="0.066" stop-color="#000cff"/><stop offset="0.099" stop-color="#0007ff"/><stop offset="0.132" stop-color="#0001ff"/><stop offset="0.165" stop-color="#0000ff"/><stop offset="0.198" stop-color="#0000ff"/><stop offset="0.231" stop-color="#0000ff"/><stop offset="0.264" stop-color="#0000ff"/><stop offset="0.297" stop-color="#0000ff"/><stop offset="0.330" stop-color="#0800ff"/><stop offset="0.363" stop-color="#1a00ff"/><stop offset="0.396" stop-color="#2a00ff"/><stop offset="0.429" stop-color="#3a00ff"/><stop offset="0.462" stop-color="#4900ff"/><stop offset="0.495" stop-color="#5700ff"/><stop offset="0.528" stop-color="#6600ff"/><stop offset="0.561" stop-color="#7400ff"/><stop offset="0.594" stop-color="#8200ff"/><stop offset="0.627" stop-color="#9000ff"/><stop offset="0.660" stop-color="#9e00ff"/><stop offset="0.693" stop-color="#ac00ff"/><stop offset="0.726" stop-color="#ba00ff"/><stop offset="0.759" stop-color="#c800ff"/><stop offset="0.792" stop-color="#d600ff"/><stop offset="0.825" stop-color="#e400ff"/><stop offset="0.858" stop-color="#f100ff"/><stop offset="0.892" stop-color="#ff00ff"/><stop offset="0.925" stop-color="#ff00f2"/><stop offset="0.958" stop-color="#ff00e6"/><stop offset="0.991" stop-color="#ff00db"/></linearGradient>
<linearGradient id="r103" gradientUnits="userSpaceOnUse" x1="1350" y1="0" x2="2198" y2="0"><stop offset="0.000" stop-color="#0015ff"/><stop offset="0.033" stop-color="#0010ff"/><stop offset="0.066" stop-color="#000bff"/><stop offset="0.099" stop-color="#0006ff"/><stop offset="0.132" stop-color="#0000ff"/><stop offset="0.165" stop-color="#0000ff"/><stop offset="0.198" stop-color="#0000ff"/><stop offset="0.231" stop-color="#0000ff"/><stop offset="0.264" stop-color="#0000ff"/><stop offset="0.297" stop-color="#0000ff"/><stop offset="0.330" stop-color="#0800ff"/><stop offset="0.363" stop-color="#1900ff"/><stop offset="0.396" stop-color="#2900ff"/><stop offset="0.429" stop-color="#3900ff"/><stop offset="0.462" stop-color="#4800ff"/><stop offset="0.495" stop-color="#5600ff"/><stop offset="0.528" stop-color="#6400ff"/><stop offset="0.561" stop-color="#7200ff"/><stop offset="0.594" stop-color="#8000ff"/><stop offset="0.627" stop-color="#8e00ff"/><stop offset="0.660" stop-color="#9c00ff"/><stop offset="0.693" stop-color="#aa00ff"/><stop offset="0.726" stop-color="#b800ff"/><stop offset="0.759" stop-color="#c500ff"/><stop offset="0.792" stop-color="#d300ff"/><stop offset="0.825" stop-color="#e100ff"/><stop offset="0.858" stop-color="#ef00ff"/><stop offset="0.892" stop-color="#fc00ff"/><stop offset="0.925" stop-color="#ff00f4"/><stop offset="0.958" stop-color="#ff00e8"/><stop offset="0.991" stop-color="#ff00dd"/></linearGradient>
<linearGradient id="r104" gradientUnits="userSpaceOnUse" x1="1350" y1="0" x2="2198" y2="0"><stop offset="0.000" stop-color="#0014ff"/><stop offset="0.033" stop-color="#000fff"/><stop offset="0.066" stop-color="#000aff"/><stop offset="0.099" stop-color="#0004ff"/><stop offset="0.132" stop-color="#0000ff"/><stop offset="0.165" stop-color="#0000ff"/><stop offset="0.198" stop-color="#0000ff"/><stop offset="0.231" stop-color="#0000ff"/><stop offset="0.264" stop-color="#0000ff"/><stop offset="0.297" stop-color="#0000ff"/><stop offset="0.330" stop-color="#0700ff"/><stop offset="0.363" stop-color="#1900ff"/><stop offset="0.396" stop-color="#2900ff"/><stop offset="0.429" stop-color="#3800ff"/><stop offset="0.462" stop-color="#4600ff"/><stop offset="0.495" stop-color="#5500ff"/><stop offset="0.528" stop-color="#6300ff"/><stop offset="0.561" stop-color="#7100ff"/><stop offset="0.594" stop-color="#7f00ff"/><stop offset="0.627" stop-color="#8d00ff"/><stop offset="0.660" stop-color="#9a00ff"/><stop offset="0.693" stop-color="#a800ff"/><stop offset="0.726" stop-color="#b600ff"/><stop offset="0.759" stop-color="#c300ff"/><stop offset="0.792" stop-color="#d100ff"/><stop offset="0.825" stop-color="#de00ff"/><stop offset="0.858" stop-color="#ec00ff"/><stop offset="0.892" stop-color="#f900ff"/><stop offset="0.925" stop-color="#ff00f7"/><stop offset="0.958" stop-color="#ff00eb"/><stop offset="0.991" stop-color="#ff00e0"/></linearGradient>
<linearGradient id="r105" gradientUnits="userSpaceOnUse" x1="1350" y1="0" x2="2198" y2="0"><stop offset="0.000" stop-color="#0012ff"/><stop offset="0.033" stop-color="#000eff"/><stop offset="0.066" stop-color="#0009ff"/><stop offset="0.099" stop-color="#0003ff"/><stop offset="0.132" stop-color="#0000ff"/><stop offset="0.165" stop-color="#0000ff"/><stop offset="0.198" stop-color="#0000ff"/><stop offset="0.231" stop-color="#0000ff"/><stop offset="0.264" stop-color="#0000ff"/><stop offset="0.297" stop-color="#0000ff"/><stop offset="0.330" stop-color="#0600ff"/><stop offset="0.363" stop-color="#1800ff"/><stop offset="0.396" stop-color="#2800ff"/><stop offset="0.429" stop-color="#3700ff"/><stop offset="0.462" stop-color="#4500ff"/><stop offset="0.495" stop-color="#5400ff"/><stop offset="0.528" stop-color="#6200ff"/><stop offset="0.561" stop-color="#6f00ff"/><stop offset="0.594" stop-color="#7d00ff"/><stop offset="0.627" stop-color="#8b00ff"/><stop offset="0.660" stop-color="#9800ff"/><stop offset="0.693" stop-color="#a600ff"/><stop offset="0.726" stop-color="#b300ff"/><stop offset="0.759" stop-color="#c100ff"/><stop offset="0.792" stop-color="#ce00ff"/><stop offset="0.825" stop-color="#dc00ff"/><stop offset="0.858" stop-color="#e900ff"/><stop offset="0.892" stop-color="#f700ff"/><stop offset="0.925" stop-color="#ff00fa"/><stop offset="0.958" stop-color="#ff00ee"/><stop offset="0.991" stop-color="#ff00e2"/></linearGradient>
<linearGradient id="r106" gradientUnits="userSpaceOnUse" x1="1350" y1="0" x2="2198" y2="0"><stop offset="0.000" stop-color="#0011ff"/><stop offset="0.033" stop-color="#000dff"/><stop offset="0.066" stop-color="#0008ff"/><stop offset="0.099" stop-color="#0002ff"/><stop offset="0.132" stop-color="#0000ff"/><stop offset="0.165" stop-color="#0000ff"/><stop offset="0.198" stop-color="#0000ff"/><stop offset="0.231" stop-color="#0000ff"/><stop offset="0.264" stop-color="#0000ff"/><stop offset="0.297" stop-color="#0000ff"/><stop offset="0.330" stop-color="#0500ff"/><stop offset="0.363" stop-color="#1700ff"/><stop offset="0.396" stop-color="#2700ff"/><stop offset="0.429" stop-color="#3600ff"/><stop offset="0.462" stop-color="#4400ff"/><stop offset="0.495" stop-color="#5200ff"/><stop offset="0.528" stop-color="#6000ff"/><stop offset="0.561" stop-color="#6e00ff"/><stop offset="0.594" stop-color="#7c00ff"/><stop offset="0.627" stop-color="#8900ff"/><stop offset="0.660" stop-color="#9700ff"/><stop offset="0.693" stop-color="#a400ff"/><stop offset="0.726" stop-color="#b100ff"/><stop offset="0.759" stop-color="#bf00ff"/><stop offset="0.792" stop-color="#cc00ff"/><stop offset="0.825" stop-color="#d900ff"/><stop offset="0.858" stop-color="#e700ff"/><stop offset="0.892" stop-color="#f400ff"/><stop offset="0.925" stop-color="#ff00fd"/><stop offset="0.958" stop-color="#ff00f0"/><stop offset="0.991" stop-color="#ff00e5"/></linearGradient>
<linearGradient id="r107" gradientUnits="userSpaceOnUse" x1="1350" y1="0" x2="2198" y2="0"><stop offset="0.000" stop-color="#0010ff"/><stop offset="0.033" stop-color="#000bff"/><stop offset="0.066" stop-color="#0006ff"/><stop offset="0.099" stop-color="#0000ff"/><stop offset="0.132" stop-color="#0000ff"/><stop offset="0.165" stop-color="#0000ff"/><stop offset="0.198" stop-color="#0000ff"/><stop offset="0.231" stop-color="#0000ff"/><stop offset="0.264" stop-color="#0000ff"/><stop offset="0.297" stop-color="#0000ff"/><stop offset="0.330" stop-color="#0500ff"/><stop offset="0.363" stop-color="#1600ff"/><stop offset="0.396" stop-color="#2600ff"/><stop offset="0.429" stop-color="#3500ff"/><stop offset="0.462" stop-color="#4300ff"/><stop offset="0.495" stop-color="#5100ff"/><stop offset="0.528" stop-color="#5f00ff"/><stop offset="0.561" stop-color="#6d00ff"/><stop offset="0.594" stop-color="#7a00ff"/><stop offset="0.627" stop-color="#8700ff"/><stop offset="0.660" stop-color="#9500ff"/><stop offset="0.693" stop-color="#a200ff"/><stop offset="0.726" stop-color="#af00ff"/><stop offset="0.759" stop-color="#bc00ff"/><stop offset="0.792" stop-color="#ca00ff"/><stop offset="0.825" stop-color="#d700ff"/><stop offset="0.858" stop-color="#e400ff"/><stop offset="0.892" stop-color="#f100ff"/><stop offset="0.925" stop-color="#fe00ff"/><stop offset="0.958" stop-color="#ff00f3"/><stop offset="0.991" stop-color="#ff00e8"/></linearGradient>
<filter id="vb" x="0" y="-0.05" width="1" height="1.1"><feGaussianBlur stdDeviation="0.1 3"/></filter>
<linearGradient id="insg" gradientUnits="userSpaceOnUse" x1="1911" y1="488" x2="2188" y2="676"><stop offset="0" stop-color="#a8ff00"/><stop offset=".48" stop-color="#ffff00"/><stop offset="1" stop-color="#ffb400"/></linearGradient>
<linearGradient id="gr" x1="0" y1="0" x2="0" y2="1"><stop offset="0" stop-color="#ff5858"/><stop offset="1" stop-color="#ff0000"/></linearGradient>
<linearGradient id="gg" x1="0" y1="0" x2="0" y2="1"><stop offset="0" stop-color="#5aaa5a"/><stop offset="1" stop-color="#007f00"/></linearGradient>
<linearGradient id="gb" x1="0" y1="0" x2="0" y2="1"><stop offset="0" stop-color="#5858ff"/><stop offset=".6" stop-color="#0000ff"/><stop offset="1" stop-color="#0000ff"/></linearGradient>
<linearGradient id="fband" x1="0" y1="0" x2="0" y2="1"><stop offset="0" stop-color="#4a4a4a"/><stop offset="1" stop-color="#252525"/></linearGradient>
<linearGradient id="tabg" x1="0" y1="0" x2="0" y2="1"><stop offset="0" stop-color="#aaaaaa"/><stop offset="1" stop-color="#515151"/></linearGradient>
<linearGradient id="tabsel" x1="0" y1="0" x2="0" y2="1"><stop offset="0" stop-color="#181818"/><stop offset="1" stop-color="#343434"/></linearGradient>
<linearGradient id="btng" x1="0" y1="0" x2="0" y2="1"><stop offset="0" stop-color="#c4c4c4"/><stop offset="1" stop-color="#7a7a7a"/></linearGradient>
<linearGradient id="btng2" x1="0" y1="0" x2="0" y2="1"><stop offset="0" stop-color="#a0a0a0"/><stop offset="1" stop-color="#5e5e5e"/></linearGradient>
</defs>
<rect width="2212" height="1284" fill="#333"/>
<text x="10" y="42.6" font-size="53" fill="#efefef" textLength="440" lengthAdjust="spacingAndGlyphs" >Saturation Sweeps</text>
<text x="163.5" y="114" font-size="26.5" fill="#f0f0f0" textLength="142.5" lengthAdjust="spacingAndGlyphs" >dE Formula:</text>
<rect x="317" y="87.5" width="178.5" height="33.5" fill="#262626"/><rect x="318.5" y="89.0" width="175.5" height="30.5" fill="url(#ddg)"/>
<text x="323" y="113.5" font-size="21.5" fill="#f0f0f0" textLength="46" lengthAdjust="spacingAndGlyphs" >2000</text>
<path d="M474,99.5 L488,99.5 L481,107 Z" fill="#000"/>
<text x="741.5" y="33" font-size="26" fill="#f0f0f0" textLength="78.5" lengthAdjust="spacingAndGlyphs" >Levels:</text>
<rect x="831" y="5.5" width="450.5" height="34.0" fill="#262626"/><rect x="832.5" y="7.0" width="447.5" height="31.0" fill="url(#ddg)"/>
<text x="838" y="33" font-size="22.5" fill="#f0f0f0" textLength="118" lengthAdjust="spacingAndGlyphs" >20% Sweeps</text>
<path d="M1260,19.5 L1274,19.5 L1267,27 Z" fill="#000"/>
<text x="187.5" y="157" font-size="19" fill="#dcdcdc" textLength="104.5" lengthAdjust="spacingAndGlyphs" >DeltaE 2000</text>
<rect x="57" y="164" width="412.5" height="512" fill="#232323"/>
<line x1="112.0" y1="164" x2="112.0" y2="676" stroke="#8e8e8e" stroke-width="2"/>
<line x1="167.0" y1="164" x2="167.0" y2="676" stroke="#8e8e8e" stroke-width="2"/>
<line x1="222.0" y1="164" x2="222.0" y2="676" stroke="#8e8e8e" stroke-width="2"/>
<line x1="277.0" y1="164" x2="277.0" y2="676" stroke="#8e8e8e" stroke-width="2"/>
<line x1="332.0" y1="164" x2="332.0" y2="676" stroke="#8e8e8e" stroke-width="2"/>
<line x1="387.0" y1="164" x2="387.0" y2="676" stroke="#8e8e8e" stroke-width="2"/>
<line x1="442.0" y1="164" x2="442.0" y2="676" stroke="#8e8e8e" stroke-width="2"/>
<rect x="57" y="164" width="412.5" height="512" fill="none" stroke="#9a9a9a" stroke-width="2"/>
<line x1="49" y1="164.0" x2="57" y2="164.0" stroke="#d0d0d0" stroke-width="2"/>
<line x1="49" y1="237.1" x2="57" y2="237.1" stroke="#d0d0d0" stroke-width="2"/>
<line x1="49" y1="310.3" x2="57" y2="310.3" stroke="#d0d0d0" stroke-width="2"/>
<line x1="49" y1="383.4" x2="57" y2="383.4" stroke="#d0d0d0" stroke-width="2"/>
<line x1="49" y1="456.6" x2="57" y2="456.6" stroke="#d0d0d0" stroke-width="2"/>
<line x1="49" y1="529.7" x2="57" y2="529.7" stroke="#d0d0d0" stroke-width="2"/>
<line x1="49" y1="602.9" x2="57" y2="602.9" stroke="#d0d0d0" stroke-width="2"/>
<line x1="49" y1="676.0" x2="57" y2="676.0" stroke="#d0d0d0" stroke-width="2"/>
<line x1="57.0" y1="676" x2="57.0" y2="684" stroke="#d0d0d0" stroke-width="2"/>
<text x="56.0" y="705" font-size="19" fill="#dcdcdc" text-anchor="middle" >0</text>
<line x1="112.0" y1="676" x2="112.0" y2="684" stroke="#d0d0d0" stroke-width="2"/>
<text x="111.0" y="705" font-size="19" fill="#dcdcdc" text-anchor="middle" >2</text>
<line x1="167.0" y1="676" x2="167.0" y2="684" stroke="#d0d0d0" stroke-width="2"/>
<text x="166.0" y="705" font-size="19" fill="#dcdcdc" text-anchor="middle" >4</text>
<line x1="222.0" y1="676" x2="222.0" y2="684" stroke="#d0d0d0" stroke-width="2"/>
<text x="221.0" y="705" font-size="19" fill="#dcdcdc" text-anchor="middle" >6</text>
<line x1="277.0" y1="676" x2="277.0" y2="684" stroke="#d0d0d0" stroke-width="2"/>
<text x="276.0" y="705" font-size="19" fill="#dcdcdc" text-anchor="middle" >8</text>
<line x1="332.0" y1="676" x2="332.0" y2="684" stroke="#d0d0d0" stroke-width="2"/>
<text x="331.0" y="705" font-size="19" fill="#dcdcdc" text-anchor="middle" >10</text>
<line x1="387.0" y1="676" x2="387.0" y2="684" stroke="#d0d0d0" stroke-width="2"/>
<text x="386.0" y="705" font-size="19" fill="#dcdcdc" text-anchor="middle" >12</text>
<line x1="442.0" y1="676" x2="442.0" y2="684" stroke="#d0d0d0" stroke-width="2"/>
<text x="441.0" y="705" font-size="19" fill="#dcdcdc" text-anchor="middle" >14</text>
<text x="55.5" y="207.57142857142856" font-size="19" fill="#dcdcdc" text-anchor="end" >100%</text>
<text x="55.5" y="280.7142857142857" font-size="19" fill="#dcdcdc" text-anchor="end" >80%</text>
<text x="55.5" y="353.85714285714283" font-size="19" fill="#dcdcdc" text-anchor="end" >60%</text>
<text x="55.5" y="427.0" font-size="19" fill="#dcdcdc" text-anchor="end" >40%</text>
<text x="55.5" y="500.1428571428571" font-size="19" fill="#dcdcdc" text-anchor="end" >20%</text>
<text x="55.5" y="573.2857142857142" font-size="19" fill="#dcdcdc" text-anchor="end" >100</text>
<text x="55.5" y="646.4285714285713" font-size="19" fill="#dcdcdc" text-anchor="end" >0</text>
<rect x="58" y="170.1" width="110.0" height="8.8" fill="#000"/><rect x="58" y="171.9" width="107.7" height="5.4" fill="url(#bg1)"/>
<rect x="58" y="179.1" width="79.8" height="8.8" fill="#000"/><rect x="58" y="180.9" width="77.5" height="5.4" fill="url(#bg2)"/>
<rect x="58" y="188.2" width="12.4" height="8.8" fill="#000"/><rect x="58" y="190.0" width="10.1" height="5.4" fill="url(#bg3)"/>
<rect x="58" y="197.2" width="88.8" height="8.8" fill="#000"/><rect x="58" y="199.0" width="86.5" height="5.4" fill="url(#bg4)"/>
<rect x="58" y="206.3" width="55.0" height="8.8" fill="#000"/><rect x="58" y="208.1" width="52.7" height="5.4" fill="url(#bg5)"/>
<rect x="58" y="215.3" width="90.8" height="8.8" fill="#000"/><rect x="58" y="217.1" width="88.5" height="5.4" fill="url(#bg6)"/>
<rect x="58" y="243.2" width="55.0" height="8.8" fill="#000"/><rect x="58" y="245.0" width="52.7" height="5.4" fill="url(#bg7)"/>
<rect x="58" y="252.3" width="86.6" height="8.8" fill="#000"/><rect x="58" y="254.1" width="84.3" height="5.4" fill="url(#bg8)"/>
<rect x="58" y="261.3" width="50.3" height="8.8" fill="#000"/><rect x="58" y="263.1" width="48.0" height="5.4" fill="url(#bg9)"/>
<rect x="58" y="270.4" width="88.0" height="8.8" fill="#000"/><rect x="58" y="272.2" width="85.7" height="5.4" fill="url(#bg10)"/>
<rect x="58" y="279.4" width="58.6" height="8.8" fill="#000"/><rect x="58" y="281.2" width="56.3" height="5.4" fill="url(#bg11)"/>
<rect x="58" y="288.4" width="75.6" height="8.8" fill="#000"/><rect x="58" y="290.2" width="73.3" height="5.4" fill="url(#bg12)"/>
<rect x="58" y="316.4" width="52.2" height="8.8" fill="#000"/><rect x="58" y="318.2" width="50.0" height="5.4" fill="url(#bg13)"/>
<rect x="58" y="325.4" width="92.4" height="8.8" fill="#000"/><rect x="58" y="327.2" width="90.1" height="5.4" fill="url(#bg14)"/>
<rect x="58" y="334.5" width="99.5" height="8.8" fill="#000"/><rect x="58" y="336.3" width="97.2" height="5.4" fill="url(#bg15)"/>
<rect x="58" y="343.5" width="75.6" height="8.8" fill="#000"/><rect x="58" y="345.3" width="73.3" height="5.4" fill="url(#bg16)"/>
<rect x="58" y="352.5" width="70.4" height="8.8" fill="#000"/><rect x="58" y="354.3" width="68.1" height="5.4" fill="url(#bg17)"/>
<rect x="58" y="361.6" width="74.2" height="8.8" fill="#000"/><rect x="58" y="363.4" width="72.0" height="5.4" fill="url(#bg18)"/>
<rect x="58" y="389.5" width="101.8" height="8.8" fill="#000"/><rect x="58" y="391.3" width="99.5" height="5.4" fill="url(#bg19)"/>
<rect x="58" y="398.6" width="83.3" height="8.8" fill="#000"/><rect x="58" y="400.4" width="81.0" height="5.4" fill="url(#bg20)"/>
<rect x="58" y="407.6" width="63.2" height="8.8" fill="#000"/><rect x="58" y="409.4" width="60.9" height="5.4" fill="url(#bg21)"/>
<rect x="58" y="416.6" width="60.8" height="8.8" fill="#000"/><rect x="58" y="418.4" width="58.5" height="5.4" fill="url(#bg22)"/>
<rect x="58" y="425.7" width="86.6" height="8.8" fill="#000"/><rect x="58" y="427.5" width="84.3" height="5.4" fill="url(#bg23)"/>
<rect x="58" y="434.7" width="77.0" height="8.8" fill="#000"/><rect x="58" y="436.5" width="74.7" height="5.4" fill="url(#bg24)"/>
<rect x="58" y="462.7" width="137.5" height="8.8" fill="#000"/><rect x="58" y="464.5" width="135.2" height="5.4" fill="url(#bg25)"/>
<rect x="58" y="471.7" width="67.9" height="8.8" fill="#000"/><rect x="58" y="473.5" width="65.6" height="5.4" fill="url(#bg26)"/>
<rect x="58" y="480.8" width="79.2" height="8.8" fill="#000"/><rect x="58" y="482.6" width="76.9" height="5.4" fill="url(#bg27)"/>
<rect x="58" y="489.8" width="49.5" height="8.8" fill="#000"/><rect x="58" y="491.6" width="47.2" height="5.4" fill="url(#bg28)"/>
<rect x="58" y="498.8" width="107.8" height="8.8" fill="#000"/><rect x="58" y="500.6" width="105.5" height="5.4" fill="url(#bg29)"/>
<rect x="58" y="507.9" width="84.4" height="8.8" fill="#000"/><rect x="58" y="509.7" width="82.1" height="5.4" fill="url(#bg30)"/>
<rect x="58" y="590.3" width="93.5" height="8.8" fill="#000"/><rect x="58" y="592.1" width="91.2" height="5.4" fill="url(#bg31)"/>
<line x1="57" y1="164" x2="57" y2="684" stroke="#9a9a9a" stroke-width="2"/>
<text x="618.5" y="85" font-size="19" fill="#dcdcdc" text-anchor="middle" >Delta L</text>
<rect x="540.5" y="92.5" width="192.0" height="373.0" fill="#232323"/>
<line x1="532.5" y1="92.5" x2="732.5" y2="92.5" stroke="#9a9a9a" stroke-width="2"/>
<text x="533.0" y="99.5" font-size="19" fill="#dcdcdc" text-anchor="end" >15</text>
<line x1="532.5" y1="154.7" x2="732.5" y2="154.7" stroke="#9a9a9a" stroke-width="2"/>
<text x="533.0" y="161.66666666666669" font-size="19" fill="#dcdcdc" text-anchor="end" >10</text>
<line x1="532.5" y1="216.8" x2="732.5" y2="216.8" stroke="#9a9a9a" stroke-width="2"/>
<text x="533.0" y="223.83333333333334" font-size="19" fill="#dcdcdc" text-anchor="end" >5</text>
<line x1="532.5" y1="279.0" x2="732.5" y2="279.0" stroke="#9a9a9a" stroke-width="2"/>
<text x="533.0" y="286.0" font-size="19" fill="#dcdcdc" text-anchor="end" >0</text>
<line x1="532.5" y1="341.2" x2="732.5" y2="341.2" stroke="#9a9a9a" stroke-width="2"/>
<text x="533.0" y="348.1666666666667" font-size="19" fill="#dcdcdc" text-anchor="end" >-5</text>
<line x1="532.5" y1="403.3" x2="732.5" y2="403.3" stroke="#9a9a9a" stroke-width="2"/>
<text x="533.0" y="410.3333333333333" font-size="19" fill="#dcdcdc" text-anchor="end" >-10</text>
<line x1="532.5" y1="465.5" x2="732.5" y2="465.5" stroke="#9a9a9a" stroke-width="2"/>
<text x="533.0" y="472.5" font-size="19" fill="#dcdcdc" text-anchor="end" >-15</text>
<rect x="540.5" y="92.5" width="192.0" height="373.0" fill="none" stroke="#9a9a9a" stroke-width="2"/>
<line x1="540.5" y1="94.1" x2="732.5" y2="94.1" stroke="#8a8a8a" stroke-width="2"/>
<line x1="540.5" y1="465.5" x2="540.5" y2="473.5" stroke="#c8c8c8" stroke-width="2"/>
<line x1="732.5" y1="465.5" x2="732.5" y2="473.5" stroke="#c8c8c8" stroke-width="2"/>
<text x="636.5" y="488" font-size="19" fill="#dcdcdc" text-anchor="middle" >100%</text>
<rect x="559.5" y="249.2" width="153" height="29.8" fill="url(#ybar)" stroke="#000" stroke-width="2.2"/>
<text x="879.5" y="85" font-size="19" fill="#dcdcdc" text-anchor="middle" >Delta C</text>
<rect x="801.5" y="92.5" width="192.0" height="373.0" fill="#232323"/>
<line x1="793.5" y1="92.5" x2="993.5" y2="92.5" stroke="#9a9a9a" stroke-width="2"/>
<text x="794.0" y="99.5" font-size="19" fill="#dcdcdc" text-anchor="end" >15</text>
<line x1="793.5" y1="154.7" x2="993.5" y2="154.7" stroke="#9a9a9a" stroke-width="2"/>
<text x="794.0" y="161.66666666666669" font-size="19" fill="#dcdcdc" text-anchor="end" >10</text>
<line x1="793.5" y1="216.8" x2="993.5" y2="216.8" stroke="#9a9a9a" stroke-width="2"/>
<text x="794.0" y="223.83333333333334" font-size="19" fill="#dcdcdc" text-anchor="end" >5</text>
<line x1="793.5" y1="279.0" x2="993.5" y2="279.0" stroke="#9a9a9a" stroke-width="2"/>
<text x="794.0" y="286.0" font-size="19" fill="#dcdcdc" text-anchor="end" >0</text>
<line x1="793.5" y1="341.2" x2="993.5" y2="341.2" stroke="#9a9a9a" stroke-width="2"/>
<text x="794.0" y="348.1666666666667" font-size="19" fill="#dcdcdc" text-anchor="end" >-5</text>
<line x1="793.5" y1="403.3" x2="993.5" y2="403.3" stroke="#9a9a9a" stroke-width="2"/>
<text x="794.0" y="410.3333333333333" font-size="19" fill="#dcdcdc" text-anchor="end" >-10</text>
<line x1="793.5" y1="465.5" x2="993.5" y2="465.5" stroke="#9a9a9a" stroke-width="2"/>
<text x="794.0" y="472.5" font-size="19" fill="#dcdcdc" text-anchor="end" >-15</text>
<rect x="801.5" y="92.5" width="192.0" height="373.0" fill="none" stroke="#9a9a9a" stroke-width="2"/>
<line x1="801.5" y1="94.1" x2="993.5" y2="94.1" stroke="#8a8a8a" stroke-width="2"/>
<line x1="801.5" y1="465.5" x2="801.5" y2="473.5" stroke="#c8c8c8" stroke-width="2"/>
<line x1="993.5" y1="465.5" x2="993.5" y2="473.5" stroke="#c8c8c8" stroke-width="2"/>
<text x="897.5" y="488" font-size="19" fill="#dcdcdc" text-anchor="middle" >100%</text>
<rect x="820.5" y="279.0" width="153" height="176.6" fill="url(#ybar)" stroke="#000" stroke-width="2.2"/>
<text x="1141.5" y="85" font-size="19" fill="#dcdcdc" text-anchor="middle" >Delta H</text>
<rect x="1063.5" y="92.5" width="192.0" height="373.0" fill="#232323"/>
<line x1="1055.5" y1="92.5" x2="1255.5" y2="92.5" stroke="#9a9a9a" stroke-width="2"/>
<text x="1056.0" y="99.5" font-size="19" fill="#dcdcdc" text-anchor="end" >15</text>
<line x1="1055.5" y1="154.7" x2="1255.5" y2="154.7" stroke="#9a9a9a" stroke-width="2"/>
<text x="1056.0" y="161.66666666666669" font-size="19" fill="#dcdcdc" text-anchor="end" >10</text>
<line x1="1055.5" y1="216.8" x2="1255.5" y2="216.8" stroke="#9a9a9a" stroke-width="2"/>
<text x="1056.0" y="223.83333333333334" font-size="19" fill="#dcdcdc" text-anchor="end" >5</text>
<line x1="1055.5" y1="279.0" x2="1255.5" y2="279.0" stroke="#9a9a9a" stroke-width="2"/>
<text x="1056.0" y="286.0" font-size="19" fill="#dcdcdc" text-anchor="end" >0</text>
<line x1="1055.5" y1="341.2" x2="1255.5" y2="341.2" stroke="#9a9a9a" stroke-width="2"/>
<text x="1056.0" y="348.1666666666667" font-size="19" fill="#dcdcdc" text-anchor="end" >-5</text>
<line x1="1055.5" y1="403.3" x2="1255.5" y2="403.3" stroke="#9a9a9a" stroke-width="2"/>
<text x="1056.0" y="410.3333333333333" font-size="19" fill="#dcdcdc" text-anchor="end" >-10</text>
<line x1="1055.5" y1="465.5" x2="1255.5" y2="465.5" stroke="#9a9a9a" stroke-width="2"/>
<text x="1056.0" y="472.5" font-size="19" fill="#dcdcdc" text-anchor="end" >-15</text>
<rect x="1063.5" y="92.5" width="192.0" height="373.0" fill="none" stroke="#9a9a9a" stroke-width="2"/>
<line x1="1063.5" y1="94.1" x2="1255.5" y2="94.1" stroke="#8a8a8a" stroke-width="2"/>
<line x1="1063.5" y1="465.5" x2="1063.5" y2="473.5" stroke="#c8c8c8" stroke-width="2"/>
<line x1="1255.5" y1="465.5" x2="1255.5" y2="473.5" stroke="#c8c8c8" stroke-width="2"/>
<text x="1159.5" y="488" font-size="19" fill="#dcdcdc" text-anchor="middle" >100%</text>
<rect x="1082.5" y="233.0" width="153" height="46.0" fill="url(#ybar)" stroke="#000" stroke-width="2.2"/>
<rect x="497" y="501" width="785" height="217" fill="#000"/>
<rect x="524.5" y="510.5" width="131" height="176" fill="#fff"/>
<rect x="525.8" y="511.8" width="128.4" height="86.8" fill="#bec4a5"/>
<rect x="525.8" y="598.6" width="128.4" height="86.6" fill="#b9ba95"/>
<text x="590.0" y="706.5" font-size="16.5" fill="#ffffff" text-anchor="middle" >20%</text>
<rect x="677.5" y="510.5" width="131" height="176" fill="#fff"/>
<rect x="678.8" y="511.8" width="128.4" height="86.8" fill="#c0c688"/>
<rect x="678.8" y="598.6" width="128.4" height="86.6" fill="#babb78"/>
<text x="743.0" y="706.5" font-size="16.5" fill="#ffffff" text-anchor="middle" >40%</text>
<rect x="831" y="510.5" width="131" height="176" fill="#fff"/>
<rect x="832.3" y="511.8" width="128.4" height="86.8" fill="#c2c664"/>
<rect x="832.3" y="598.6" width="128.4" height="86.6" fill="#bbbb55"/>
<text x="896.5" y="706.5" font-size="16.5" fill="#ffffff" text-anchor="middle" >60%</text>
<rect x="984.5" y="510.5" width="131" height="176" fill="#fff"/>
<rect x="985.8" y="511.8" width="128.4" height="86.8" fill="#c2c52e"/>
<rect x="985.8" y="598.6" width="128.4" height="86.6" fill="#bbba17"/>
<text x="1050.0" y="706.5" font-size="16.5" fill="#ffffff" text-anchor="middle" >80%</text>
<rect x="1138" y="510.5" width="131" height="176" fill="#fff"/>
<rect x="1139.3" y="511.8" width="128.4" height="86.8" fill="#c2c63e"/>
<rect x="1139.3" y="598.6" width="128.4" height="86.6" fill="#bfbf00"/>
<text x="1203.5" y="706.5" font-size="16.5" fill="#ffffff" text-anchor="middle" >100%</text>
<text x="0" y="0" font-size="16" fill="#ffffff" text-anchor="middle" transform="translate(514.5,549) rotate(-90)">Actual</text>
<text x="0" y="0" font-size="16" fill="#ffffff" text-anchor="middle" transform="translate(514.5,647.5) rotate(-90)">Target</text>
<rect x="1291" y="0" width="921" height="736" fill="#1c1c1c"/>
<rect x="1300" y="4" width="903" height="722.5" fill="#333"/>
<text x="1695.5" y="28.5" font-size="20" fill="#dcdcdc" textLength="111.5" lengthAdjust="spacingAndGlyphs" >CIE 1976 u'v'</text>
<rect x="1350" y="35" width="848" height="653" fill="#232323"/>
<g clip-path="url(#plotc)"><g clip-path="url(#loc)"><g filter="url(#vb)"><rect x="1350" y="38" width="848" height="6.6" fill="url(#r0)"/><rect x="1350" y="44" width="848" height="6.6" fill="url(#r1)"/><rect x="1350" y="50" width="848" height="6.6" fill="url(#r2)"/><rect x="1350" y="56" width="848" height="6.6" fill="url(#r3)"/><rect x="1350" y="62" width="848" height="6.6" fill="url(#r4)"/><rect x="1350" y="68" width="848" height="6.6" fill="url(#r5)"/><rect x="1350" y="74" width="848" height="6.6" fill="url(#r6)"/><rect x="1350" y="80" width="848" height="6.6" fill="url(#r7)"/><rect x="1350" y="86" width="848" height="6.6" fill="url(#r8)"/><rect x="1350" y="92" width="848" height="6.6" fill="url(#r9)"/><rect x="1350" y="98" width="848" height="6.6" fill="url(#r10)"/><rect x="1350" y="104" width="848" height="6.6" fill="url(#r11)"/><rect x="1350" y="110" width="848" height="6.6" fill="url(#r12)"/><rect x="1350" y="116" width="848" height="6.6" fill="url(#r13)"/><rect x="1350" y="122" width="848" height="6.6" fill="url(#r14)"/><rect x="1350" y="128" width="848" height="6.6" fill="url(#r15)"/><rect x="1350" y="134" width="848" height="6.6" fill="url(#r16)"/><rect x="1350" y="140" width="848" height="6.6" fill="url(#r17)"/><rect x="1350" y="146" width="848" height="6.6" fill="url(#r18)"/><rect x="1350" y="152" width="848" height="6.6" fill="url(#r19)"/><rect x="1350" y="158" width="848" height="6.6" fill="url(#r20)"/><rect x="1350" y="164" width="848" height="6.6" fill="url(#r21)"/><rect x="1350" y="170" width="848" height="6.6" fill="url(#r22)"/><rect x="1350" y="176" width="848" height="6.6" fill="url(#r23)"/><rect x="1350" y="182" width="848" height="6.6" fill="url(#r24)"/><rect x="1350" y="188" width="848" height="6.6" fill="url(#r25)"/><rect x="1350" y="194" width="848" height="6.6" fill="url(#r26)"/><rect x="1350" y="200" width="848" height="6.6" fill="url(#r27)"/><rect x="1350" y="206" width="848" height="6.6" fill="url(#r28)"/><rect x="1350" y="212" width="848" height="6.6" fill="url(#r29)"/><rect x="1350" y="218" width="848" height="6.6" fill="url(#r30)"/><rect x="1350" y="224" width="848" height="6.6" fill="url(#r31)"/><rect x="1350" y="230" width="848" height="6.6" fill="url(#r32)"/><rect x="1350" y="236" width="848" height="6.6" fill="url(#r33)"/><rect x="1350" y="242" width="848" height="6.6" fill="url(#r34)"/><rect x="1350" y="248" width="848" height="6.6" fill="url(#r35)"/><rect x="1350" y="254" width="848" height="6.6" fill="url(#r36)"/><rect x="1350" y="260" width="848" height="6.6" fill="url(#r37)"/><rect x="1350" y="266" width="848" height="6.6" fill="url(#r38)"/><rect x="1350" y="272" width="848" height="6.6" fill="url(#r39)"/><rect x="1350" y="278" width="848" height="6.6" fill="url(#r40)"/><rect x="1350" y="284" width="848" height="6.6" fill="url(#r41)"/><rect x="1350" y="290" width="848" height="6.6" fill="url(#r42)"/><rect x="1350" y="296" width="848" height="6.6" fill="url(#r43)"/><rect x="1350" y="302" width="848" height="6.6" fill="url(#r44)"/><rect x="1350" y="308" width="848" height="6.6" fill="url(#r45)"/><rect x="1350" y="314" width="848" height="6.6" fill="url(#r46)"/><rect x="1350" y="320" width="848" height="6.6" fill="url(#r47)"/><rect x="1350" y="326" width="848" height="6.6" fill="url(#r48)"/><rect x="1350" y="332" width="848" height="6.6" fill="url(#r49)"/><rect x="1350" y="338" width="848" height="6.6" fill="url(#r50)"/><rect x="1350" y="344" width="848" height="6.6" fill="url(#r51)"/><rect x="1350" y="350" width="848" height="6.6" fill="url(#r52)"/><rect x="1350" y="356" width="848" height="6.6" fill="url(#r53)"/><rect x="1350" y="362" width="848" height="6.6" fill="url(#r54)"/><rect x="1350" y="368" width="848" height="6.6" fill="url(#r55)"/><rect x="1350" y="374" width="848" height="6.6" fill="url(#r56)"/><rect x="1350" y="380" width="848" height="6.6" fill="url(#r57)"/><rect x="1350" y="386" width="848" height="6.6" fill="url(#r58)"/><rect x="1350" y="392" width="848" height="6.6" fill="url(#r59)"/><rect x="1350" y="398" width="848" height="6.6" fill="url(#r60)"/><rect x="1350" y="404" width="848" height="6.6" fill="url(#r61)"/><rect x="1350" y="410" width="848" height="6.6" fill="url(#r62)"/><rect x="1350" y="416" width="848" height="6.6" fill="url(#r63)"/><rect x="1350" y="422" width="848" height="6.6" fill="url(#r64)"/><rect x="1350" y="428" width="848" height="6.6" fill="url(#r65)"/><rect x="1350" y="434" width="848" height="6.6" fill="url(#r66)"/><rect x="1350" y="440" width="848" height="6.6" fill="url(#r67)"/><rect x="1350" y="446" width="848" height="6.6" fill="url(#r68)"/><rect x="1350" y="452" width="848" height="6.6" fill="url(#r69)"/><rect x="1350" y="458" width="848" height="6.6" fill="url(#r70)"/><rect x="1350" y="464" width="848" height="6.6" fill="url(#r71)"/><rect x="1350" y="470" width="848" height="6.6" fill="url(#r72)"/><rect x="1350" y="476" width="848" height="6.6" fill="url(#r73)"/><rect x="1350" y="482" width="848" height="6.6" fill="url(#r74)"/><rect x="1350" y="488" width="848" height="6.6" fill="url(#r75)"/><rect x="1350" y="494" width="848" height="6.6" fill="url(#r76)"/><rect x="1350" y="500" width="848" height="6.6" fill="url(#r77)"/><rect x="1350" y="506" width="848" height="6.6" fill="url(#r78)"/><rect x="1350" y="512" width="848" height="6.6" fill="url(#r79)"/><rect x="1350" y="518" width="848" height="6.6" fill="url(#r80)"/><rect x="1350" y="524" width="848" height="6.6" fill="url(#r81)"/><rect x="1350" y="530" width="848" height="6.6" fill="url(#r82)"/><rect x="1350" y="536" width="848" height="6.6" fill="url(#r83)"/><rect x="1350" y="542" width="848" height="6.6" fill="url(#r84)"/><rect x="1350" y="548" width="848" height="6.6" fill="url(#r85)"/><rect x="1350" y="554" width="848" height="6.6" fill="url(#r86)"/><rect x="1350" y="560" width="848" height="6.6" fill="url(#r87)"/><rect x="1350" y="566" width="848" height="6.6" fill="url(#r88)"/><rect x="1350" y="572" width="848" height="6.6" fill="url(#r89)"/><rect x="1350" y="578" width="848" height="6.6" fill="url(#r90)"/><rect x="1350" y="584" width="848" height="6.6" fill="url(#r91)"/><rect x="1350" y="590" width="848" height="6.6" fill="url(#r92)"/><rect x="1350" y="596" width="848" height="6.6" fill="url(#r93)"/><rect x="1350" y="602" width="848" height="6.6" fill="url(#r94)"/><rect x="1350" y="608" width="848" height="6.6" fill="url(#r95)"/><rect x="1350" y="614" width="848" height="6.6" fill="url(#r96)"/><rect x="1350" y="620" width="848" height="6.6" fill="url(#r97)"/><rect x="1350" y="626" width="848" height="6.6" fill="url(#r98)"/><rect x="1350" y="632" width="848" height="6.6" fill="url(#r99)"/><rect x="1350" y="638" width="848" height="6.6" fill="url(#r100)"/><rect x="1350" y="644" width="848" height="6.6" fill="url(#r101)"/><rect x="1350" y="650" width="848" height="6.6" fill="url(#r102)"/><rect x="1350" y="656" width="848" height="6.6" fill="url(#r103)"/><rect x="1350" y="662" width="848" height="6.6" fill="url(#r104)"/><rect x="1350" y="668" width="848" height="6.6" fill="url(#r105)"/><rect x="1350" y="674" width="848" height="6.6" fill="url(#r106)"/><rect x="1350" y="680" width="848" height="6.6" fill="url(#r107)"/></g>
<path d="M1340,30 H2210 V700 H1340 Z M1489.2,60.6 L1597.6,516.5 L2050.7,117.3 Z" fill="#000" fill-opacity="0.42" fill-rule="evenodd"/>
</g></g>
<rect x="1350" y="35" width="848" height="653" fill="none" stroke="#9c9c9c" stroke-width="2"/>
<line x1="1342" y1="688.0" x2="1350" y2="688.0" stroke="#d0d0d0" stroke-width="2"/>
<text x="1341.5" y="697.5" font-size="19" fill="#dcdcdc" text-anchor="end" >0</text>
<line x1="1350.0" y1="688" x2="1350.0" y2="696" stroke="#d0d0d0" stroke-width="2"/>
<text x="1350.0" y="717" font-size="19" fill="#dcdcdc" text-anchor="middle" >0</text>
<line x1="1342" y1="633.7" x2="1350" y2="633.7" stroke="#d0d0d0" stroke-width="2"/>
<text x="1341.5" y="640.7" font-size="19" fill="#dcdcdc" text-anchor="end" >0.05</text>
<line x1="1420.6" y1="688" x2="1420.6" y2="696" stroke="#d0d0d0" stroke-width="2"/>
<text x="1420.575" y="717" font-size="19" fill="#dcdcdc" text-anchor="middle" >0.05</text>
<line x1="1342" y1="579.4" x2="1350" y2="579.4" stroke="#d0d0d0" stroke-width="2"/>
<text x="1341.5" y="586.4" font-size="19" fill="#dcdcdc" text-anchor="end" >0.1</text>
<line x1="1491.2" y1="688" x2="1491.2" y2="696" stroke="#d0d0d0" stroke-width="2"/>
<text x="1491.15" y="717" font-size="19" fill="#dcdcdc" text-anchor="middle" >0.1</text>
<line x1="1342" y1="525.1" x2="1350" y2="525.1" stroke="#d0d0d0" stroke-width="2"/>
<text x="1341.5" y="532.0999999999999" font-size="19" fill="#dcdcdc" text-anchor="end" >0.15</text>
<line x1="1561.7" y1="688" x2="1561.7" y2="696" stroke="#d0d0d0" stroke-width="2"/>
<text x="1561.725" y="717" font-size="19" fill="#dcdcdc" text-anchor="middle" >0.15</text>
<line x1="1342" y1="470.8" x2="1350" y2="470.8" stroke="#d0d0d0" stroke-width="2"/>
<text x="1341.5" y="477.79999999999995" font-size="19" fill="#dcdcdc" text-anchor="end" >0.2</text>
<line x1="1632.3" y1="688" x2="1632.3" y2="696" stroke="#d0d0d0" stroke-width="2"/>
<text x="1632.3" y="717" font-size="19" fill="#dcdcdc" text-anchor="middle" >0.2</text>
<line x1="1342" y1="416.5" x2="1350" y2="416.5" stroke="#d0d0d0" stroke-width="2"/>
<text x="1341.5" y="423.5" font-size="19" fill="#dcdcdc" text-anchor="end" >0.25</text>
<line x1="1702.9" y1="688" x2="1702.9" y2="696" stroke="#d0d0d0" stroke-width="2"/>
<text x="1702.875" y="717" font-size="19" fill="#dcdcdc" text-anchor="middle" >0.25</text>
<line x1="1342" y1="362.2" x2="1350" y2="362.2" stroke="#d0d0d0" stroke-width="2"/>
<text x="1341.5" y="369.19999999999993" font-size="19" fill="#dcdcdc" text-anchor="end" >0.3</text>
<line x1="1773.5" y1="688" x2="1773.5" y2="696" stroke="#d0d0d0" stroke-width="2"/>
<text x="1773.45" y="717" font-size="19" fill="#dcdcdc" text-anchor="middle" >0.3</text>
<line x1="1342" y1="307.9" x2="1350" y2="307.9" stroke="#d0d0d0" stroke-width="2"/>
<text x="1341.5" y="314.9" font-size="19" fill="#dcdcdc" text-anchor="end" >0.35</text>
<line x1="1844.0" y1="688" x2="1844.0" y2="696" stroke="#d0d0d0" stroke-width="2"/>
<text x="1844.025" y="717" font-size="19" fill="#dcdcdc" text-anchor="middle" >0.35</text>
<line x1="1342" y1="253.6" x2="1350" y2="253.6" stroke="#d0d0d0" stroke-width="2"/>
<text x="1341.5" y="260.59999999999997" font-size="19" fill="#dcdcdc" text-anchor="end" >0.4</text>
<line x1="1914.6" y1="688" x2="1914.6" y2="696" stroke="#d0d0d0" stroke-width="2"/>
<text x="1914.6" y="717" font-size="19" fill="#dcdcdc" text-anchor="middle" >0.4</text>
<line x1="1342" y1="199.3" x2="1350" y2="199.3" stroke="#d0d0d0" stroke-width="2"/>
<text x="1341.5" y="206.3" font-size="19" fill="#dcdcdc" text-anchor="end" >0.45</text>
<line x1="1985.2" y1="688" x2="1985.2" y2="696" stroke="#d0d0d0" stroke-width="2"/>
<text x="1985.1750000000002" y="717" font-size="19" fill="#dcdcdc" text-anchor="middle" >0.45</text>
<line x1="1342" y1="145.0" x2="1350" y2="145.0" stroke="#d0d0d0" stroke-width="2"/>
<text x="1341.5" y="152.0" font-size="19" fill="#dcdcdc" text-anchor="end" >0.5</text>
<line x1="2055.8" y1="688" x2="2055.8" y2="696" stroke="#d0d0d0" stroke-width="2"/>
<text x="2055.75" y="717" font-size="19" fill="#dcdcdc" text-anchor="middle" >0.5</text>
<line x1="1342" y1="90.7" x2="1350" y2="90.7" stroke="#d0d0d0" stroke-width="2"/>
<text x="1341.5" y="97.69999999999993" font-size="19" fill="#dcdcdc" text-anchor="end" >0.55</text>
<line x1="2126.3" y1="688" x2="2126.3" y2="696" stroke="#d0d0d0" stroke-width="2"/>
<text x="2126.325" y="717" font-size="19" fill="#dcdcdc" text-anchor="middle" >0.55</text>
<rect x="1479.8" y="49.7" width="18" height="18" fill="none" stroke="#fff" stroke-width="2.2"/>
<rect x="1494.6" y="62.2" width="18" height="18" fill="none" stroke="#fff" stroke-width="2.2"/>
<rect x="1512.8" y="78.8" width="18" height="18" fill="none" stroke="#fff" stroke-width="2.2"/>
<rect x="1539.8" y="99.8" width="18" height="18" fill="none" stroke="#fff" stroke-width="2.2"/>
<rect x="1573.7" y="130.7" width="18" height="18" fill="none" stroke="#fff" stroke-width="2.2"/>
<rect x="1629.8" y="63.4" width="18" height="18" fill="none" stroke="#fff" stroke-width="2.2"/>
<rect x="1627.8" y="80.0" width="18" height="18" fill="none" stroke="#fff" stroke-width="2.2"/>
<rect x="1626.5" y="98.0" width="18" height="18" fill="none" stroke="#fff" stroke-width="2.2"/>
<rect x="1625.0" y="116.7" width="18" height="18" fill="none" stroke="#fff" stroke-width="2.2"/>
<rect x="1622.8" y="139.7" width="18" height="18" fill="none" stroke="#fff" stroke-width="2.2"/>
<rect x="1510.7" y="184.9" width="18" height="18" fill="none" stroke="#fff" stroke-width="2.2"/>
<rect x="1531.2" y="181.8" width="18" height="18" fill="none" stroke="#fff" stroke-width="2.2"/>
<rect x="1551.0" y="179.8" width="18" height="18" fill="none" stroke="#fff" stroke-width="2.2"/>
<rect x="1572.0" y="175.9" width="18" height="18" fill="none" stroke="#fff" stroke-width="2.2"/>
<rect x="1595.9" y="172.7" width="18" height="18" fill="none" stroke="#fff" stroke-width="2.2"/>
<rect x="1701.7" y="155.8" width="18" height="18" fill="none" stroke="#fff" stroke-width="2.2"/>
<rect x="1787.0" y="143.7" width="18" height="18" fill="none" stroke="#fff" stroke-width="2.2"/>
<rect x="1882.0" y="128.1" width="18" height="18" fill="none" stroke="#fff" stroke-width="2.2"/>
<rect x="1966.7" y="115.5" width="18" height="18" fill="none" stroke="#fff" stroke-width="2.2"/>
<rect x="2041.6" y="106.2" width="18" height="18" fill="none" stroke="#fff" stroke-width="2.2"/>
<rect x="1645.2" y="191.0" width="18" height="18" fill="none" stroke="#fff" stroke-width="2.2"/>
<rect x="1678.6" y="217.5" width="18" height="18" fill="none" stroke="#fff" stroke-width="2.2"/>
<rect x="1714.3" y="250.3" width="18" height="18" fill="none" stroke="#fff" stroke-width="2.2"/>
<rect x="1756.4" y="283.7" width="18" height="18" fill="none" stroke="#fff" stroke-width="2.2"/>
<rect x="1799.6" y="320.6" width="18" height="18" fill="none" stroke="#fff" stroke-width="2.2"/>
<rect x="1615.8" y="211.1" width="18" height="18" fill="none" stroke="#fff" stroke-width="2.2"/>
<rect x="1609.5" y="267.6" width="18" height="18" fill="none" stroke="#fff" stroke-width="2.2"/>
<rect x="1604.8" y="335.0" width="18" height="18" fill="none" stroke="#fff" stroke-width="2.2"/>
<rect x="1595.6" y="415.7" width="18" height="18" fill="none" stroke="#fff" stroke-width="2.2"/>
<rect x="1588.7" y="506.7" width="18" height="18" fill="none" stroke="#fff" stroke-width="2.2"/>
<circle cx="1507.5" cy="65.7" r="5.8" fill="#22a818" stroke="#111" stroke-width="1.6"/>
<circle cx="1512.6" cy="71.6" r="5.8" fill="#44b444" stroke="#111" stroke-width="1.6"/>
<circle cx="1528.8" cy="87.5" r="5.8" fill="#66b866" stroke="#111" stroke-width="1.6"/>
<circle cx="1554.4" cy="110.9" r="5.8" fill="#88b888" stroke="#111" stroke-width="1.6"/>
<circle cx="1587" cy="143.6" r="5.8" fill="#9cb89c" stroke="#111" stroke-width="1.6"/>
<circle cx="1633.7" cy="78.2" r="5.8" fill="#c4c000" stroke="#111" stroke-width="1.6"/>
<circle cx="1633.7" cy="89.5" r="5.8" fill="#c2c044" stroke="#111" stroke-width="1.6"/>
<circle cx="1631.8" cy="107.3" r="5.8" fill="#c0be70" stroke="#111" stroke-width="1.6"/>
<circle cx="1628.5" cy="130.8" r="5.8" fill="#c0b888" stroke="#111" stroke-width="1.6"/>
<circle cx="1626.4" cy="154.5" r="5.8" fill="#c0c0a0" stroke="#111" stroke-width="1.6"/>
<circle cx="1523.4" cy="192.3" r="5.8" fill="#14bcbc" stroke="#111" stroke-width="1.6"/>
<circle cx="1539.9" cy="190.3" r="5.8" fill="#50b8b8" stroke="#111" stroke-width="1.6"/>
<circle cx="1561.2" cy="189.1" r="5.8" fill="#78bcbc" stroke="#111" stroke-width="1.6"/>
<circle cx="1581.5" cy="185.3" r="5.8" fill="#90b8b8" stroke="#111" stroke-width="1.6"/>
<circle cx="1603" cy="181.3" r="5.8" fill="#a8b8b8" stroke="#111" stroke-width="1.6"/>
<circle cx="1681.8" cy="170.6" r="5.8" fill="#c09090" stroke="#111" stroke-width="1.6"/>
<circle cx="1753.9" cy="156.2" r="5.8" fill="#c07070" stroke="#111" stroke-width="1.6"/>
<circle cx="1857.6" cy="139.4" r="5.8" fill="#c06060" stroke="#111" stroke-width="1.6"/>
<circle cx="1929.6" cy="126.8" r="5.8" fill="#c04848" stroke="#111" stroke-width="1.6"/>
<circle cx="1983.2" cy="118.1" r="5.8" fill="#c00000" stroke="#111" stroke-width="1.6"/>
<circle cx="1644.4" cy="199.4" r="5.8" fill="#c0a0c0" stroke="#111" stroke-width="1.6"/>
<circle cx="1671.5" cy="228.2" r="5.8" fill="#c090c0" stroke="#111" stroke-width="1.6"/>
<circle cx="1707.2" cy="263.9" r="5.8" fill="#c070c0" stroke="#111" stroke-width="1.6"/>
<circle cx="1745.2" cy="302" r="5.8" fill="#b060b0" stroke="#111" stroke-width="1.6"/>
<circle cx="1778" cy="327.9" r="5.8" fill="#a040a0" stroke="#111" stroke-width="1.6"/>
<circle cx="1619" cy="219" r="5.8" fill="#a0a0c0" stroke="#111" stroke-width="1.6"/>
<circle cx="1613.8" cy="289.8" r="5.8" fill="#8080c0" stroke="#111" stroke-width="1.6"/>
<circle cx="1604.6" cy="381.5" r="5.8" fill="#6060c0" stroke="#111" stroke-width="1.6"/>
<circle cx="1597.1" cy="450" r="5.8" fill="#4040b0" stroke="#111" stroke-width="1.6"/>
<circle cx="1593.7" cy="515.7" r="5.8" fill="#0000c0" stroke="#111" stroke-width="1.6"/>
<rect x="1618.5" y="168.5" width="18.5" height="18.5" fill="none" stroke="#000" stroke-width="2.6"/>
<circle cx="1624.6" cy="179.1" r="5.8" fill="#fff" stroke="#111" stroke-width="1.6"/>
<path d="M1962.5,687 A7,6.5 0 0 1 1976.5,687 Z" fill="#000"/>
<rect x="1905" y="482.5" width="289" height="199.5" fill="#2b2b2b"/>
<rect x="1911" y="488" width="277.5" height="188" fill="url(#insg)"/>
<path d="M1911,488 L2049.3,488 L2188.5,581 L2188.5,666 L1911,498 Z" fill="#000" fill-opacity="0.45"/>
<path d="M2049.3,488 L2188.5,488 L2188.5,581 Z" fill="#232323"/>
<rect x="1910" y="486.5" width="279.5" height="191" fill="none" stroke="#a8a8a8" stroke-width="2"/>
<rect x="2039.5" y="571" width="19" height="19" fill="none" stroke="#fff" stroke-width="2.2"/>
<circle cx="1977.8" cy="628.3" r="5.8" fill="#c4c000" stroke="#111" stroke-width="1.6"/>
<text x="66.5" y="778" font-size="38" fill="#f0f0f0" textLength="309" lengthAdjust="spacingAndGlyphs" >Avg dE2000: 2.86</text>
<text x="61" y="831.3" font-size="38" fill="#f0f0f0" textLength="320" lengthAdjust="spacingAndGlyphs" >Max dE2000: 5.03</text>
<text x="18.5" y="895" font-size="38.5" fill="#f0f0f0" textLength="290" lengthAdjust="spacingAndGlyphs" >Current Reading</text>
<text x="18.5" y="941.3" font-size="31.5" fill="#f0f0f0" textLength="135.5" lengthAdjust="spacingAndGlyphs" >x: 0.4253</text>
<text x="226" y="941.3" font-size="31.5" fill="#f0f0f0" textLength="136" lengthAdjust="spacingAndGlyphs" >y: 0.5235</text>
<text x="18.5" y="996.4" font-size="31.5" fill="#f0f0f0" textLength="145.5" lengthAdjust="spacingAndGlyphs" >fL: 179.41</text>
<text x="18.5" y="1041.4" font-size="31.5" fill="#f0f0f0" textLength="210.5" lengthAdjust="spacingAndGlyphs" >cd/m²: 614.71</text>
<text x="563.5" y="780.5" font-size="19.5" fill="#dcdcdc" textLength="110" lengthAdjust="spacingAndGlyphs" >RGB Balance</text>
<rect x="473" y="787" width="331" height="239.5" fill="#232323"/>
<line x1="465" y1="787.0" x2="804" y2="787.0" stroke="#9a9a9a" stroke-width="2"/>
<text x="464.5" y="794.0" font-size="19" fill="#dcdcdc" text-anchor="end" >120</text>
<line x1="465" y1="846.9" x2="804" y2="846.9" stroke="#9a9a9a" stroke-width="2"/>
<text x="464.5" y="853.875" font-size="19" fill="#dcdcdc" text-anchor="end" >110</text>
<line x1="465" y1="906.8" x2="804" y2="906.8" stroke="#9a9a9a" stroke-width="2"/>
<text x="464.5" y="913.75" font-size="19" fill="#dcdcdc" text-anchor="end" >100</text>
<line x1="465" y1="966.6" x2="804" y2="966.6" stroke="#9a9a9a" stroke-width="2"/>
<text x="464.5" y="973.625" font-size="19" fill="#dcdcdc" text-anchor="end" >90</text>
<line x1="465" y1="1026.5" x2="804" y2="1026.5" stroke="#9a9a9a" stroke-width="2"/>
<text x="464.5" y="1033.5" font-size="19" fill="#dcdcdc" text-anchor="end" >80</text>
<rect x="473" y="787" width="331" height="239.5" fill="none" stroke="#9a9a9a" stroke-width="2"/>
<line x1="473" y1="1026.5" x2="473" y2="1034.5" stroke="#c8c8c8" stroke-width="2"/>
<line x1="804" y1="1026.5" x2="804" y2="1034.5" stroke="#c8c8c8" stroke-width="2"/>
<text x="638.5" y="1048" font-size="19" fill="#dcdcdc" text-anchor="middle" >100%</text>
<rect x="505" y="898" width="87" height="128.5" fill="url(#gr)" stroke="#000" stroke-width="2.2"/>
<rect x="593" y="890.5" width="87" height="136.0" fill="url(#gg)" stroke="#000" stroke-width="2.2"/>
<rect x="681" y="804" width="88" height="222.5" fill="url(#gb)" stroke="#000" stroke-width="2.2"/>
<rect x="831" y="745" width="968" height="313" fill="#000"/>
<rect x="833" y="747" width="964" height="18.2" fill="#2e2e2e"/>
<rect x="833" y="765.2" width="964" height="18.8" fill="#151515"/>
<text x="1161.5" y="774" font-size="21.5" fill="#f4f4f4" text-anchor="middle" font-weight="bold" textLength="52.4" lengthAdjust="spacingAndGlyphs" >20%</text>
<text x="1302.5" y="774" font-size="21.5" fill="#f4f4f4" text-anchor="middle" font-weight="bold" textLength="52.4" lengthAdjust="spacingAndGlyphs" >40%</text>
<text x="1443.5" y="774" font-size="21.5" fill="#f4f4f4" text-anchor="middle" font-weight="bold" textLength="52.4" lengthAdjust="spacingAndGlyphs" >60%</text>
<text x="1584.5" y="774" font-size="21.5" fill="#f4f4f4" text-anchor="middle" font-weight="bold" textLength="52.4" lengthAdjust="spacingAndGlyphs" >80%</text>
<text x="1725.5" y="774" font-size="21.5" fill="#f4f4f4" text-anchor="middle" font-weight="bold" textLength="67.8" lengthAdjust="spacingAndGlyphs" >100%</text>
<rect x="833" y="784.00" width="964" height="34.55" fill="#414141"/>
<text x="856.5" y="809.2" font-size="22.5" fill="#f2f2f2" font-weight="bold" textLength="114.4" lengthAdjust="spacingAndGlyphs" >x: CIE31</text>
<text x="1099" y="809.2" font-size="23.3" fill="#f2f2f2" textLength="91.6" lengthAdjust="spacingAndGlyphs" >0.3305</text>
<text x="1240" y="809.2" font-size="23.3" fill="#f2f2f2" textLength="91.6" lengthAdjust="spacingAndGlyphs" >0.3550</text>
<text x="1381.5" y="809.2" font-size="23.3" fill="#f2f2f2" textLength="91.6" lengthAdjust="spacingAndGlyphs" >0.3838</text>
<text x="1522.5" y="809.2" font-size="23.3" fill="#f2f2f2" textLength="91.6" lengthAdjust="spacingAndGlyphs" >0.4087</text>
<text x="1663.5" y="809.2" font-size="23.3" fill="#f2f2f2" textLength="91.6" lengthAdjust="spacingAndGlyphs" >0.4253</text>
<rect x="833" y="818.25" width="964" height="34.55" fill="#7f7f7f"/>
<text x="856.5" y="843.45" font-size="22.5" fill="#f2f2f2" font-weight="bold" textLength="114.4" lengthAdjust="spacingAndGlyphs" >y: CIE31</text>
<text x="1099" y="843.45" font-size="23.3" fill="#f2f2f2" textLength="91.6" lengthAdjust="spacingAndGlyphs" >0.3669</text>
<text x="1240" y="843.45" font-size="23.3" fill="#f2f2f2" textLength="91.6" lengthAdjust="spacingAndGlyphs" >0.4085</text>
<text x="1381.5" y="843.45" font-size="23.3" fill="#f2f2f2" textLength="91.6" lengthAdjust="spacingAndGlyphs" >0.4553</text>
<text x="1522.5" y="843.45" font-size="23.3" fill="#f2f2f2" textLength="91.6" lengthAdjust="spacingAndGlyphs" >0.4963</text>
<text x="1663.5" y="843.45" font-size="23.3" fill="#f2f2f2" textLength="91.6" lengthAdjust="spacingAndGlyphs" >0.5235</text>
<rect x="833" y="852.50" width="964" height="34.55" fill="#414141"/>
<text x="856.5" y="877.7" font-size="22.5" fill="#f2f2f2" font-weight="bold" textLength="18" lengthAdjust="spacingAndGlyphs" >Y</text>
<text x="1099" y="877.7" font-size="23.3" fill="#f2f2f2" textLength="124.0" lengthAdjust="spacingAndGlyphs" >640.6202</text>
<text x="1240" y="877.7" font-size="23.3" fill="#f2f2f2" textLength="124.0" lengthAdjust="spacingAndGlyphs" >642.5543</text>
<text x="1381.5" y="877.7" font-size="23.3" fill="#f2f2f2" textLength="124.0" lengthAdjust="spacingAndGlyphs" >646.0378</text>
<text x="1522.5" y="877.7" font-size="23.3" fill="#f2f2f2" textLength="124.0" lengthAdjust="spacingAndGlyphs" >641.2939</text>
<text x="1663.5" y="877.7" font-size="23.3" fill="#f2f2f2" textLength="124.0" lengthAdjust="spacingAndGlyphs" >614.7125</text>
<rect x="833" y="886.75" width="964" height="34.55" fill="#7f7f7f"/>
<text x="856.5" y="911.95" font-size="22.5" fill="#f2f2f2" font-weight="bold" textLength="205.7" lengthAdjust="spacingAndGlyphs" >Target x:CIE31</text>
<text x="1099" y="911.95" font-size="23.3" fill="#f2f2f2" textLength="91.6" lengthAdjust="spacingAndGlyphs" >0.3406</text>
<text x="1240" y="911.95" font-size="23.3" fill="#f2f2f2" textLength="91.6" lengthAdjust="spacingAndGlyphs" >0.3657</text>
<text x="1381.5" y="911.95" font-size="23.3" fill="#f2f2f2" textLength="91.6" lengthAdjust="spacingAndGlyphs" >0.3916</text>
<text x="1522.5" y="911.95" font-size="23.3" fill="#f2f2f2" textLength="91.6" lengthAdjust="spacingAndGlyphs" >0.4168</text>
<text x="1663.5" y="911.95" font-size="23.3" fill="#f2f2f2" textLength="91.6" lengthAdjust="spacingAndGlyphs" >0.4378</text>
<rect x="833" y="921.00" width="964" height="34.55" fill="#414141"/>
<text x="856.5" y="946.2" font-size="22.5" fill="#f2f2f2" font-weight="bold" textLength="205.7" lengthAdjust="spacingAndGlyphs" >Target y:CIE31</text>
<text x="1099" y="946.2" font-size="23.3" fill="#f2f2f2" textLength="91.6" lengthAdjust="spacingAndGlyphs" >0.3751</text>
<text x="1240" y="946.2" font-size="23.3" fill="#f2f2f2" textLength="91.6" lengthAdjust="spacingAndGlyphs" >0.4166</text>
<text x="1381.5" y="946.2" font-size="23.3" fill="#f2f2f2" textLength="91.6" lengthAdjust="spacingAndGlyphs" >0.4594</text>
<text x="1522.5" y="946.2" font-size="23.3" fill="#f2f2f2" textLength="91.6" lengthAdjust="spacingAndGlyphs" >0.5011</text>
<text x="1663.5" y="946.2" font-size="23.3" fill="#f2f2f2" textLength="91.6" lengthAdjust="spacingAndGlyphs" >0.5359</text>
<rect x="833" y="955.25" width="964" height="34.55" fill="#7f7f7f"/>
<text x="856.5" y="980.45" font-size="22.5" fill="#f2f2f2" font-weight="bold" textLength="121" lengthAdjust="spacingAndGlyphs" >Target Y</text>
<text x="1099" y="980.45" font-size="23.3" fill="#f2f2f2" textLength="124.0" lengthAdjust="spacingAndGlyphs" >601.3578</text>
<text x="1240" y="980.45" font-size="23.3" fill="#f2f2f2" textLength="124.0" lengthAdjust="spacingAndGlyphs" >590.1526</text>
<text x="1381.5" y="980.45" font-size="23.3" fill="#f2f2f2" textLength="124.0" lengthAdjust="spacingAndGlyphs" >581.0457</text>
<text x="1522.5" y="980.45" font-size="23.3" fill="#f2f2f2" textLength="124.0" lengthAdjust="spacingAndGlyphs" >573.8853</text>
<text x="1663.5" y="980.45" font-size="23.3" fill="#f2f2f2" textLength="124.0" lengthAdjust="spacingAndGlyphs" >568.8536</text>
<rect x="833" y="989.50" width="964" height="34.55" fill="#414141"/>
<text x="856.5" y="1014.7" font-size="22.5" fill="#f2f2f2" font-weight="bold" textLength="118.6" lengthAdjust="spacingAndGlyphs" >ΔE 2000</text>
<text x="1099" y="1014.7" font-size="23.3" fill="#f2f2f2" textLength="91.6" lengthAdjust="spacingAndGlyphs" >3.1235</text>
<text x="1240" y="1014.7" font-size="23.3" fill="#f2f2f2" textLength="91.6" lengthAdjust="spacingAndGlyphs" >2.8460</text>
<text x="1381.5" y="1014.7" font-size="23.3" fill="#f2f2f2" textLength="91.6" lengthAdjust="spacingAndGlyphs" >2.7119</text>
<text x="1522.5" y="1014.7" font-size="23.3" fill="#f2f2f2" textLength="91.6" lengthAdjust="spacingAndGlyphs" >2.7633</text>
<text x="1663.5" y="1014.7" font-size="23.3" fill="#f2f2f2" textLength="91.6" lengthAdjust="spacingAndGlyphs" >3.2729</text>
<rect x="833" y="1023.75" width="964" height="34.55" fill="#7f7f7f"/>
<text x="856.5" y="1048.95" font-size="22.5" fill="#f2f2f2" font-weight="bold" textLength="94.3" lengthAdjust="spacingAndGlyphs" >ΔE ITP</text>
<text x="1099" y="1048.95" font-size="23.3" fill="#f2f2f2" textLength="91.6" lengthAdjust="spacingAndGlyphs" >7.7927</text>
<text x="1240" y="1048.95" font-size="23.3" fill="#f2f2f2" textLength="91.6" lengthAdjust="spacingAndGlyphs" >9.3197</text>
<text x="1381.5" y="1048.95" font-size="23.3" fill="#f2f2f2" textLength="91.6" lengthAdjust="spacingAndGlyphs" >9.5529</text>
<text x="1522.5" y="1048.95" font-size="23.3" fill="#f2f2f2" textLength="107.8" lengthAdjust="spacingAndGlyphs" >10.6631</text>
<text x="1663.5" y="1048.95" font-size="23.3" fill="#f2f2f2" textLength="107.8" lengthAdjust="spacingAndGlyphs" >18.3271</text>
<rect x="0" y="1220.5" width="2212" height="63.5" fill="#2b2b2b"/>
<rect x="810" y="1220.5" width="1402" height="63.5" fill="url(#fband)"/>
<rect x="0" y="1282.8" width="794" height="1.2" fill="#6a3530"/>
<rect x="794" y="1282.8" width="1418" height="1.2" fill="#9a6656"/>
<rect x="0" y="1221" width="45" height="61" rx="4" fill="url(#tabg)"/>
<circle cx="22.4" cy="1230.5" r="7.5" fill="#7a7a7a"/>
<path d="M17.5,1233 L22.4,1227.5 L27.3,1233 Z" fill="#1e1e1e"/>
<rect x="5" y="1246.8" width="35.3" height="30.4" rx="3" fill="#ffff00"/>
<rect x="50.7" y="1221" width="150.3" height="61" rx="4" fill="url(#tabg)"/>
<rect x="56.2" y="1226" width="139.8" height="36.2" rx="3" fill="#c2c4a2"/>
<path d="M56.5,1259 V1229 Q56.5,1226.3 59.2,1226.3 H195.7" fill="none" stroke="#6a6a40" stroke-opacity="0.55" stroke-width="1.2"/>
<text x="125.9" y="1277" font-size="11" fill="#242424" text-anchor="middle" >20%</text>
<rect x="202.7" y="1221" width="150.3" height="61" rx="4" fill="url(#tabg)"/>
<rect x="208.2" y="1226" width="139.8" height="36.2" rx="3" fill="#c2c385"/>
<path d="M208.5,1259 V1229 Q208.5,1226.3 211.2,1226.3 H347.7" fill="none" stroke="#6a6a40" stroke-opacity="0.55" stroke-width="1.2"/>
<text x="277.9" y="1277" font-size="11" fill="#242424" text-anchor="middle" >40%</text>
<rect x="354.8" y="1221" width="150.3" height="61" rx="4" fill="url(#tabg)"/>
<rect x="360.3" y="1226" width="139.8" height="36.2" rx="3" fill="#c2c46a"/>
<path d="M360.6,1259 V1229 Q360.6,1226.3 363.3,1226.3 H499.8" fill="none" stroke="#6a6a40" stroke-opacity="0.55" stroke-width="1.2"/>
<text x="430.0" y="1277" font-size="11" fill="#242424" text-anchor="middle" >60%</text>
<rect x="506.8" y="1221" width="150.3" height="61" rx="4" fill="url(#tabg)"/>
<rect x="512.3" y="1226" width="139.8" height="36.2" rx="3" fill="#c4c44c"/>
<path d="M512.6,1259 V1229 Q512.6,1226.3 515.3,1226.3 H651.8" fill="none" stroke="#6a6a40" stroke-opacity="0.55" stroke-width="1.2"/>
<text x="582.0" y="1277" font-size="11" fill="#242424" text-anchor="middle" >80%</text>
<rect x="659" y="1221" width="150.3" height="61" rx="4" fill="url(#tabsel)"/>
<rect x="664" y="1226" width="140.2" height="36.2" rx="3" fill="#c2c000"/>
<text x="734.2" y="1277" font-size="11" fill="#ffffff" text-anchor="middle" font-weight="bold" >100%</text>
<rect x="1938.5" y="1221.5" width="274" height="29" rx="3" fill="url(#btng2)"/>
<line x1="1985.3" y1="1222" x2="1985.3" y2="1250" stroke="#444" stroke-width="1.5"/>
<line x1="2031" y1="1222" x2="2031" y2="1250" stroke="#444" stroke-width="1.5"/>
<line x1="2077" y1="1222" x2="2077" y2="1250" stroke="#444" stroke-width="1.5"/>
<line x1="2122" y1="1222" x2="2122" y2="1250" stroke="#444" stroke-width="1.5"/>
<line x1="2167" y1="1222" x2="2167" y2="1250" stroke="#444" stroke-width="1.5"/>
<circle cx="1962" cy="1236" r="9" fill="#8a8a8a"/>
<circle cx="2008" cy="1236" r="9" fill="#8a8a8a"/>
<circle cx="2054" cy="1236" r="9" fill="#8a8a8a"/>
<circle cx="2099.5" cy="1236" r="9" fill="#8a8a8a"/>
<circle cx="2144.5" cy="1236" r="9" fill="#8a8a8a"/>
<circle cx="2190" cy="1236" r="9" fill="#8a8a8a"/>
<rect x="1890" y="1240" width="47.5" height="42" rx="4" fill="url(#btng2)"/>
<rect x="1899" y="1246.5" width="29" height="29" rx="4" fill="#9a9a9a" stroke="#1e1e1e" stroke-width="2.2"/>
<rect x="1907" y="1254.3" width="13.3" height="12.8" fill="#000"/>
<rect x="1939.5" y="1252.5" width="136" height="29.5" rx="3" fill="url(#btng)"/>
<rect x="2076.5" y="1252.5" width="136" height="29.5" rx="3" fill="url(#btng)"/>
<circle cx="1969.5" cy="1266.7" r="10" fill="#8c8c8c"/>
<circle cx="2182.7" cy="1266.7" r="10" fill="#8c8c8c"/>
<text x="1969.5" y="1272.5" font-size="19" fill="#2a2a2a" text-anchor="middle" >«</text>
<text x="2182.7" y="1272.5" font-size="19" fill="#2a2a2a" text-anchor="middle" >»</text>
<text x="1996.5" y="1274.7" font-size="21.5" fill="#2c2c2c" textLength="50" lengthAdjust="spacingAndGlyphs" >Back</text>
<text x="2103.5" y="1274.7" font-size="21.5" fill="#2c2c2c" textLength="51" lengthAdjust="spacingAndGlyphs" >Next</text>
<g opacity="0.72">
<g transform="translate(1,1.5)">
<path d="M1826.5,1201.5 L1828.5,1250.5 L1860,1265 L1915.5,1249.5 L1884.5,1243.5" fill="none" stroke="#c8c8c8" stroke-width="8" stroke-linejoin="round" stroke-linecap="round"/>
<path d="M1826.5,1201.5 L1876,1212.5 L1879,1243 L1839,1246" fill="none" stroke="#c8c8c8" stroke-width="8" stroke-linejoin="round" stroke-linecap="round"/>
<path d="M1841.5,1220 Q1848,1214.5 1852.5,1224 L1856.5,1238.5 L1884.5,1201" fill="none" stroke="#c8c8c8" stroke-width="7" stroke-linejoin="round" stroke-linecap="round"/>
<path d="M1826.5,1201.5 L1828.5,1250.5 L1860,1265 L1915.5,1249.5 L1884.5,1243.5" fill="none" stroke="#8a2c2c" stroke-width="4.5" stroke-linejoin="round" stroke-linecap="round"/>
<path d="M1826.5,1201.5 L1876,1212.5 L1879,1243 L1839,1246" fill="none" stroke="#8a2c2c" stroke-width="4.5" stroke-linejoin="round" stroke-linecap="round"/>
<path d="M1841.5,1220 Q1848,1214.5 1852.5,1224 L1856.5,1238.5 L1884.5,1201" fill="none" stroke="#343434" stroke-width="3.8" stroke-linejoin="round" stroke-linecap="round"/>
</g>
<text x="1885" y="1240.3" font-size="37.5" fill="#9a3c3c" font-weight="bold" textLength="199" lengthAdjust="spacingAndGlyphs" stroke="#cfcfcf" stroke-width="4" paint-order="stroke" stroke-linejoin="round">NOTEBOOK</text>
<text x="2084" y="1240.3" font-size="37.5" fill="#3c3c3c" font-weight="bold" textLength="117.5" lengthAdjust="spacingAndGlyphs" stroke="#cfcfcf" stroke-width="4" paint-order="stroke" stroke-linejoin="round">CHECK</text>
</g>
</svg>
</body></html>
